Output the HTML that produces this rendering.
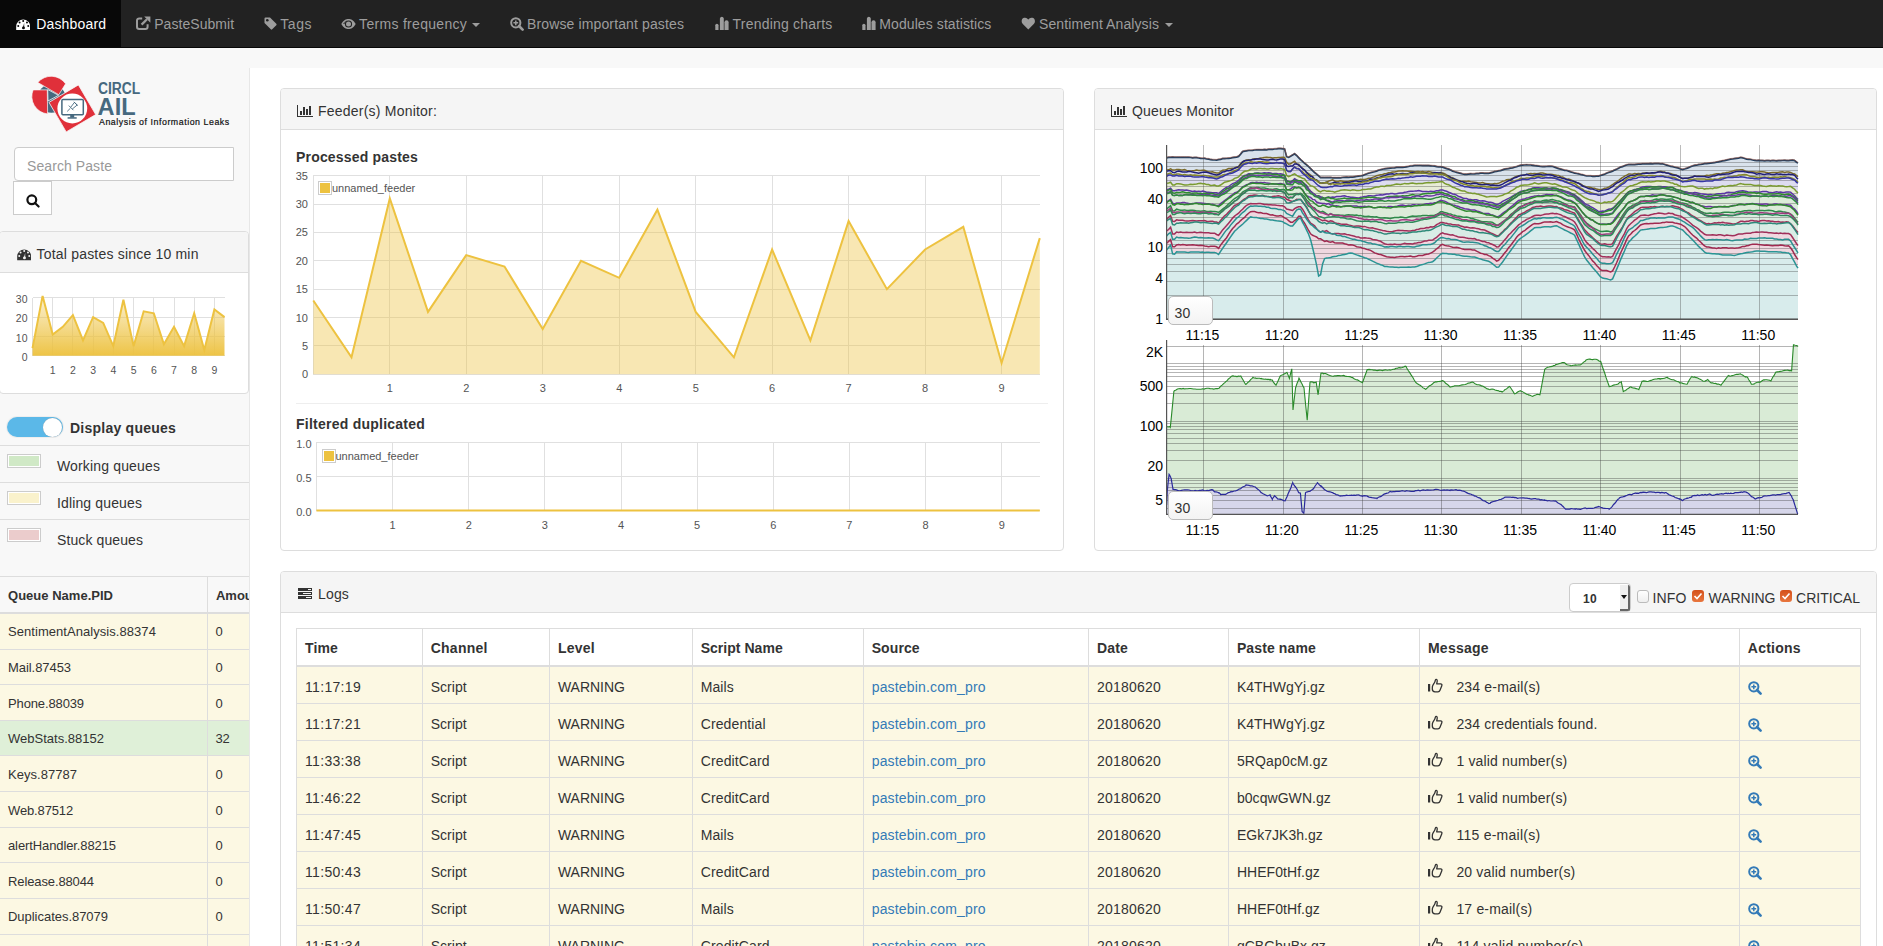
<!DOCTYPE html><html><head><meta charset="utf-8"><title>AIL Dashboard</title>
<style>
html,body{margin:0;padding:0;overflow:hidden;}
body{width:1883px;height:946px;overflow:hidden;position:relative;background:#f8f8f8;font-family:"Liberation Sans", sans-serif;font-size:14px;color:#333;}
.abs{position:absolute;}
svg text{font-family:"Liberation Sans", sans-serif;}
</style></head><body>
<div class="abs" style="left:0;top:0;width:1883px;height:47px;background:#222;border-bottom:1px solid #080808"></div>
<div class="abs" style="left:0;top:0;width:121px;height:47px;background:#080808"></div>
<svg style="position:absolute;left:15.7px;top:18.6px" width="14.4" height="11.7" viewBox="0 0 16 13">
<path d="M0.2,12.5 L0.2,8.3 A7.8,7.8 0 0 1 15.8,8.3 L15.8,12.5 Z" fill="#fff"/>
<circle cx="2.5" cy="7.9" r="1.1" fill="#080808"/><circle cx="4" cy="4" r="1.1" fill="#080808"/>
<circle cx="8" cy="2.3" r="1.1" fill="#080808"/><circle cx="12.2" cy="4" r="1.1" fill="#080808"/><circle cx="13.6" cy="7.9" r="1.1" fill="#080808"/>
<path d="M7.6,10 L9.1,4.2 L9.1,10 Z" fill="#080808"/><circle cx="8.3" cy="9.9" r="1.6" fill="#080808"/>
</svg>
<div style="position:absolute;left:36.2px;top:14.4px;font-size:14px;line-height:20px;color:#fff;font-weight:normal;white-space:nowrap;letter-spacing:0.172px;">Dashboard</div>
<svg style="position:absolute;left:135.6px;top:16.2px" width="15" height="14" viewBox="0 0 15 14">
<path d="M11.6,8.2 V10.8 A2.2,2.2 0 0 1 9.4,13 H3.2 A2.2,2.2 0 0 1 1,10.8 V4.6 A2.2,2.2 0 0 1 3.2,2.4 H6.2" fill="none" stroke="#9d9d9d" stroke-width="2"/>
<path d="M5.6,8.6 L11,3.2" stroke="#9d9d9d" stroke-width="2.3"/>
<path d="M8.2,0.6 H14.4 V6.8 Z" fill="#9d9d9d"/>
</svg>
<div style="position:absolute;left:154.2px;top:14.4px;font-size:14px;line-height:20px;color:#9d9d9d;font-weight:normal;white-space:nowrap;letter-spacing:0.058px;">PasteSubmit</div>
<svg style="position:absolute;left:263.5px;top:17px" width="13" height="13" viewBox="0 0 13 13">
<path d="M0.5,1.5 A1,1 0 0 1 1.5,0.5 H6 L12.3,6.8 A1,1 0 0 1 12.3,8.2 L8.2,12.3 A1,1 0 0 1 6.8,12.3 L0.5,6 Z" fill="#9d9d9d"/>
<circle cx="3.3" cy="3.3" r="1.3" fill="#222"/>
</svg>
<div style="position:absolute;left:280.2px;top:14.4px;font-size:14px;line-height:20px;color:#9d9d9d;font-weight:normal;white-space:nowrap;letter-spacing:0.605px;">Tags</div>
<svg style="position:absolute;left:340.5px;top:19px" width="15" height="10" viewBox="0 0 15 10">
<path d="M0.3,5 C2.5,1 5,0 7.5,0 C10,0 12.5,1 14.7,5 C12.5,9 10,10 7.5,10 C5,10 2.5,9 0.3,5 Z" fill="#9d9d9d"/>
<circle cx="7.5" cy="5" r="3.6" fill="#222"/><circle cx="7.5" cy="5" r="2.5" fill="#9d9d9d"/>
<path d="M1.8,5 C3.5,2.5 5,1.6 6,1.4 C4.5,2.5 4.3,4 4.5,5 Z" fill="#222" opacity="0.6"/>
</svg>
<div style="position:absolute;left:359.1px;top:14.4px;font-size:14px;line-height:20px;color:#9d9d9d;font-weight:normal;white-space:nowrap;letter-spacing:0.303px;">Terms frequency</div>
<div style="position:absolute;left:471.8px;top:22.9px;width:0;height:0;border-left:4px solid transparent;border-right:4px solid transparent;border-top:4px solid #9d9d9d"></div>
<svg style="position:absolute;left:509.5px;top:16.5px" width="14" height="14" viewBox="0 0 14 14">
<circle cx="5.8" cy="5.8" r="4.6" fill="none" stroke="#9d9d9d" stroke-width="2"/>
<path d="M9,9 L12.6,12.6" stroke="#9d9d9d" stroke-width="2.6" stroke-linecap="round"/>
<path d="M3.4,5.8 H8.2 M5.8,3.4 V8.2" stroke="#9d9d9d" stroke-width="1.5"/>
</svg>
<div style="position:absolute;left:527.0px;top:14.4px;font-size:14px;line-height:20px;color:#9d9d9d;font-weight:normal;white-space:nowrap;letter-spacing:0.130px;">Browse important pastes</div>
<svg style="position:absolute;left:714.8px;top:16px" width="14" height="15" viewBox="0 0 14 15">
<path d="M0.3,14.1 V9.3 A1.6,1.6 0 0 1 3.5,9.3 V14.1 Z" fill="#9d9d9d"/>
<path d="M4.9,14.1 V2.4 A2,2 0 0 1 8.8,2.4 V14.1 Z" fill="#9d9d9d"/>
<path d="M9.5,14.1 V6.2 A2,2 0 0 1 13.6,6.2 V14.1 Z" fill="#9d9d9d"/>
</svg>
<div style="position:absolute;left:732.5px;top:14.4px;font-size:14px;line-height:20px;color:#9d9d9d;font-weight:normal;white-space:nowrap;letter-spacing:0.220px;">Trending charts</div>
<svg style="position:absolute;left:861.6px;top:16px" width="14" height="15" viewBox="0 0 14 15">
<path d="M0.3,14.1 V9.3 A1.6,1.6 0 0 1 3.5,9.3 V14.1 Z" fill="#9d9d9d"/>
<path d="M4.9,14.1 V2.4 A2,2 0 0 1 8.8,2.4 V14.1 Z" fill="#9d9d9d"/>
<path d="M9.5,14.1 V6.2 A2,2 0 0 1 13.6,6.2 V14.1 Z" fill="#9d9d9d"/>
</svg>
<div style="position:absolute;left:879.3px;top:14.4px;font-size:14px;line-height:20px;color:#9d9d9d;font-weight:normal;white-space:nowrap;letter-spacing:0.086px;">Modules statistics</div>
<svg style="position:absolute;left:1020.8px;top:17.4px" width="14.6" height="13" viewBox="0 0 15 14">
<path d="M7.5,13.5 L1.6,7.6 C-0.3,5.7 0,2.3 2.2,1.2 C4.2,0.1 6.3,0.9 7.5,2.8 C8.7,0.9 10.8,0.1 12.8,1.2 C15,2.3 15.3,5.7 13.4,7.6 Z" fill="#9d9d9d"/>
</svg>
<div style="position:absolute;left:1039.0px;top:14.4px;font-size:14px;line-height:20px;color:#9d9d9d;font-weight:normal;white-space:nowrap;letter-spacing:0.096px;">Sentiment Analysis</div>
<div style="position:absolute;left:1164.5px;top:22.9px;width:0;height:0;border-left:4px solid transparent;border-right:4px solid transparent;border-top:4px solid #9d9d9d"></div>
<div class="abs" style="left:249px;top:68px;width:1px;height:878px;background:#e7e7e7"></div>
<div class="abs" style="left:250px;top:68px;width:1633px;height:878px;background:#fff"></div>
<svg class="abs" style="left:28px;top:72px" width="206" height="64" viewBox="28 72 206 64">
<circle cx="51.5" cy="98.5" r="14.3" fill="#46697f"/>
<path d="M37.8,82.5 A17.5,17.5 0 0 1 65.6,83.8 L58.8,94.7 Z" fill="#e0303a" stroke="#f8f8f8" stroke-width="0.7"/>
<path d="M47.3,89.9 L47.6,113.9 A17.5,17.5 0 0 1 33.1,89.9 Z" fill="#e0303a" stroke="#f8f8f8" stroke-width="0.7"/>
<path d="M47.7,89.5 L58.5,95.3 L48,101 Z" fill="none" stroke="#f8f8f8" stroke-width="0.8"/>
<path d="M49,102.4 L78.4,84.9 L95.7,114.6 L66.2,131.9 Z" fill="#e0303a" stroke="#f8f8f8" stroke-width="0.8"/>
<circle cx="72.3" cy="108.5" r="14.9" fill="#fff"/>
<rect x="61.9" y="99.6" width="21.4" height="15.2" rx="1" fill="none" stroke="#46697f" stroke-width="1.5"/>
<rect x="70.2" y="115" width="4" height="2.6" fill="#46697f"/><rect x="67.6" y="117.2" width="9.1" height="1.5" fill="#46697f"/>
<path d="M67.2,111.4 L70.3,108.3 M68.8,105.6 L73.4,110.2 M70.6,107.4 L74.5,102.3 L77.2,105 L72.3,109 M73.8,101.8 L77.7,105.7" fill="none" stroke="#46697f" stroke-width="0.9"/>
<text x="98" y="93.7" font-size="16" font-weight="bold" fill="#46697f" textLength="42.3" lengthAdjust="spacingAndGlyphs">CIRCL</text>
<text x="97.6" y="114.8" font-size="24.5" font-weight="bold" fill="#46697f" textLength="38" lengthAdjust="spacingAndGlyphs">AIL</text>
<text x="99" y="124.7" font-size="8.8" fill="#111" stroke="#111" stroke-width="0.2" textLength="130.2" lengthAdjust="spacing">Analysis of Information Leaks</text>
</svg>
<div class="abs" style="left:14px;top:147px;width:218px;height:32px;background:#fff;border:1px solid #ccc;border-radius:4px 0 0 4px;"></div>
<div style="position:absolute;left:27.0px;top:155.9px;font-size:14px;line-height:20px;color:#999;font-weight:normal;white-space:nowrap;letter-spacing:0.081px;">Search Paste</div>
<div class="abs" style="left:13px;top:181px;width:37px;height:32px;background:#fff;border:1px solid #ccc;"></div>
<svg style="position:absolute;left:25.5px;top:193.9px" width="14" height="14" viewBox="0 0 14 14">
<circle cx="5.8" cy="5.8" r="4.4" fill="none" stroke="#111" stroke-width="2.2"/>
<path d="M9,9 L12.6,12.6" stroke="#111" stroke-width="2.1" stroke-linecap="round"/>
</svg>
<div class="abs" style="left:-1px;top:231px;width:248px;height:161px;background:#fff;border:1px solid #ddd;border-radius:4px;"></div>
<div class="abs" style="left:0px;top:232px;width:248px;height:40px;background:#f5f5f5;border-bottom:1px solid #ddd;border-radius:3px 3px 0 0"></div>
<svg style="position:absolute;left:16.9px;top:248.9px" width="14.4" height="11.7" viewBox="0 0 16 13">
<path d="M0.2,12.5 L0.2,8.3 A7.8,7.8 0 0 1 15.8,8.3 L15.8,12.5 Z" fill="#333"/>
<circle cx="2.5" cy="7.9" r="1.1" fill="#f5f5f5"/><circle cx="4" cy="4" r="1.1" fill="#f5f5f5"/>
<circle cx="8" cy="2.3" r="1.1" fill="#f5f5f5"/><circle cx="12.2" cy="4" r="1.1" fill="#f5f5f5"/><circle cx="13.6" cy="7.9" r="1.1" fill="#f5f5f5"/>
<path d="M7.6,10 L9.1,4.2 L9.1,10 Z" fill="#f5f5f5"/><circle cx="8.3" cy="9.9" r="1.6" fill="#f5f5f5"/>
</svg>
<div style="position:absolute;left:36.6px;top:243.6px;font-size:14px;line-height:20px;color:#333;font-weight:normal;white-space:nowrap;letter-spacing:0.194px;">Total pastes since 10 min</div>
<svg style="position:absolute;left:0px;top:285px" width="248" height="100" viewBox="0 285 248 100"><g stroke="#e0e0e0" stroke-width="1" shape-rendering="crispEdges"><line x1="32.5" y1="355.8" x2="224.5" y2="355.8"/><line x1="32.5" y1="336.5" x2="224.5" y2="336.5"/><line x1="32.5" y1="317.1" x2="224.5" y2="317.1"/><line x1="32.5" y1="297.8" x2="224.5" y2="297.8"/><line x1="32.5" y1="297.8" x2="32.5" y2="355.8"/><line x1="52.7" y1="297.8" x2="52.7" y2="355.8"/><line x1="72.9" y1="297.8" x2="72.9" y2="355.8"/><line x1="93.1" y1="297.8" x2="93.1" y2="355.8"/><line x1="113.3" y1="297.8" x2="113.3" y2="355.8"/><line x1="133.6" y1="297.8" x2="133.6" y2="355.8"/><line x1="153.8" y1="297.8" x2="153.8" y2="355.8"/><line x1="174.0" y1="297.8" x2="174.0" y2="355.8"/><line x1="194.2" y1="297.8" x2="194.2" y2="355.8"/><line x1="214.4" y1="297.8" x2="214.4" y2="355.8"/></g><defs><linearGradient id="scg" x1="0" y1="0" x2="0" y2="1"><stop offset="0" stop-color="#edc240" stop-opacity="0.22"/><stop offset="1" stop-color="#edc240" stop-opacity="0.97"/></linearGradient></defs><polygon points="32.5,355.8 32.5,348.1 42.6,295.9 52.7,334.5 62.8,326.8 72.9,315.2 83.0,340.3 93.1,317.1 103.2,322.9 113.3,346.1 123.4,299.7 133.6,346.1 143.7,311.3 153.8,313.3 163.9,344.2 174.0,326.8 184.1,346.1 194.2,313.3 204.3,350.0 214.4,309.4 224.5,317.1 224.5,355.8" fill="url(#scg)"/><polyline points="32.5,348.1 42.6,295.9 52.7,334.5 62.8,326.8 72.9,315.2 83.0,340.3 93.1,317.1 103.2,322.9 113.3,346.1 123.4,299.7 133.6,346.1 143.7,311.3 153.8,313.3 163.9,344.2 174.0,326.8 184.1,346.1 194.2,313.3 204.3,350.0 214.4,309.4 224.5,317.1" fill="none" stroke="#edc240" stroke-width="2" stroke-linejoin="miter"/><g fill="#545454" font-size="10.5" font-family="Liberation Sans, sans-serif"><text x="27.5" y="360.8" text-anchor="end">0</text><text x="27.5" y="341.5" text-anchor="end">10</text><text x="27.5" y="322.1" text-anchor="end">20</text><text x="27.5" y="302.8" text-anchor="end">30</text><text x="52.7" y="373.6" text-anchor="middle">1</text><text x="72.9" y="373.6" text-anchor="middle">2</text><text x="93.1" y="373.6" text-anchor="middle">3</text><text x="113.3" y="373.6" text-anchor="middle">4</text><text x="133.6" y="373.6" text-anchor="middle">5</text><text x="153.8" y="373.6" text-anchor="middle">6</text><text x="174.0" y="373.6" text-anchor="middle">7</text><text x="194.2" y="373.6" text-anchor="middle">8</text><text x="214.4" y="373.6" text-anchor="middle">9</text></g></svg>
<div class="abs" style="left:7px;top:417px;width:56px;height:20px;border-radius:11px;background:#5bb8e8;box-shadow:0 0 0 1px #eee"></div>
<div class="abs" style="left:43px;top:417.5px;width:19px;height:19px;border-radius:50%;background:#fff;box-shadow:0 0 1px #999"></div>
<div style="position:absolute;left:70.0px;top:418.2px;font-size:14px;line-height:20px;color:#333;font-weight:bold;white-space:nowrap;letter-spacing:0.239px;">Display queues</div>
<div class="abs" style="left:0;top:445px;width:249px;height:1px;background:#ddd"></div>
<div class="abs" style="left:0;top:482px;width:249px;height:1px;background:#ddd"></div>
<div class="abs" style="left:0;top:519px;width:249px;height:1px;background:#ddd"></div>
<div class="abs" style="left:7px;top:454px;width:32px;height:12px;border:1px solid #ccc;background:#fff"><div style="margin:1px;width:30px;height:10px;background:#d0e9c6"></div></div>
<div style="position:absolute;left:57.0px;top:455.9px;font-size:14px;line-height:20px;color:#333;font-weight:normal;white-space:nowrap;letter-spacing:0.152px;">Working queues</div>
<div class="abs" style="left:7px;top:491px;width:32px;height:12px;border:1px solid #ccc;background:#fff"><div style="margin:1px;width:30px;height:10px;background:#faf2cc"></div></div>
<div style="position:absolute;left:57.0px;top:492.9px;font-size:14px;line-height:20px;color:#333;font-weight:normal;white-space:nowrap;letter-spacing:0.135px;">Idling queues</div>
<div class="abs" style="left:7px;top:528px;width:32px;height:12px;border:1px solid #ccc;background:#fff"><div style="margin:1px;width:30px;height:10px;background:#ebcccc"></div></div>
<div style="position:absolute;left:57.0px;top:529.9px;font-size:14px;line-height:20px;color:#333;font-weight:normal;white-space:nowrap;letter-spacing:0.099px;">Stuck queues</div>
<div class="abs" style="left:0;top:576px;width:249px;height:1px;background:#ddd"></div>
<div class="abs" style="left:0;top:612px;width:249px;height:2px;background:#ddd"></div>
<div style="position:absolute;left:8.0px;top:585.7px;font-size:13px;line-height:20px;color:#333;font-weight:bold;white-space:nowrap;letter-spacing:0.017px;">Queue Name.PID</div>
<div class="abs" style="left:208px;top:580px;width:41px;height:30px;overflow:hidden"><div style="position:absolute;left:8.0px;top:5.7px;font-size:13px;line-height:20px;color:#333;font-weight:bold;white-space:nowrap;letter-spacing:-0.016px;">Amount</div></div>
<div class="abs" style="left:207px;top:577px;width:1px;height:369px;background:#ddd"></div>
<div class="abs" style="left:0;top:613.9px;width:249px;height:35.6px;background:#fcf8e3"></div>
<div class="abs" style="left:0;top:648.5px;width:249px;height:1px;background:#ddd"></div>
<div style="position:absolute;left:8.0px;top:622.4px;font-size:13px;line-height:20px;color:#333;font-weight:normal;white-space:nowrap;letter-spacing:0.054px;">SentimentAnalysis.88374</div>
<div style="position:absolute;left:215.5px;top:622.4px;font-size:13px;line-height:20px;color:#333;font-weight:normal;white-space:nowrap;letter-spacing:-0.234px;">0</div>
<div class="abs" style="left:0;top:649.5px;width:249px;height:35.6px;background:#fcf8e3"></div>
<div class="abs" style="left:0;top:684.2px;width:249px;height:1px;background:#ddd"></div>
<div style="position:absolute;left:8.0px;top:658.0px;font-size:13px;line-height:20px;color:#333;font-weight:normal;white-space:nowrap;letter-spacing:-0.062px;">Mail.87453</div>
<div style="position:absolute;left:215.5px;top:658.0px;font-size:13px;line-height:20px;color:#333;font-weight:normal;white-space:nowrap;letter-spacing:-0.234px;">0</div>
<div class="abs" style="left:0;top:685.2px;width:249px;height:35.6px;background:#fcf8e3"></div>
<div class="abs" style="left:0;top:719.8px;width:249px;height:1px;background:#ddd"></div>
<div style="position:absolute;left:8.0px;top:693.7px;font-size:13px;line-height:20px;color:#333;font-weight:normal;white-space:nowrap;letter-spacing:-0.126px;">Phone.88039</div>
<div style="position:absolute;left:215.5px;top:693.7px;font-size:13px;line-height:20px;color:#333;font-weight:normal;white-space:nowrap;letter-spacing:-0.234px;">0</div>
<div class="abs" style="left:0;top:720.8px;width:249px;height:35.6px;background:#dff0d8"></div>
<div class="abs" style="left:0;top:755.4px;width:249px;height:1px;background:#ddd"></div>
<div style="position:absolute;left:8.0px;top:729.3px;font-size:13px;line-height:20px;color:#333;font-weight:normal;white-space:nowrap;letter-spacing:0.007px;">WebStats.88152</div>
<div style="position:absolute;left:215.5px;top:729.3px;font-size:13px;line-height:20px;color:#333;font-weight:normal;white-space:nowrap;letter-spacing:-0.234px;">32</div>
<div class="abs" style="left:0;top:756.4px;width:249px;height:35.6px;background:#fcf8e3"></div>
<div class="abs" style="left:0;top:791.0px;width:249px;height:1px;background:#ddd"></div>
<div style="position:absolute;left:8.0px;top:764.9px;font-size:13px;line-height:20px;color:#333;font-weight:normal;white-space:nowrap;letter-spacing:0.031px;">Keys.87787</div>
<div style="position:absolute;left:215.5px;top:764.9px;font-size:13px;line-height:20px;color:#333;font-weight:normal;white-space:nowrap;letter-spacing:-0.234px;">0</div>
<div class="abs" style="left:0;top:792.0px;width:249px;height:35.6px;background:#fcf8e3"></div>
<div class="abs" style="left:0;top:826.7px;width:249px;height:1px;background:#ddd"></div>
<div style="position:absolute;left:8.0px;top:800.6px;font-size:13px;line-height:20px;color:#333;font-weight:normal;white-space:nowrap;letter-spacing:-0.142px;">Web.87512</div>
<div style="position:absolute;left:215.5px;top:800.6px;font-size:13px;line-height:20px;color:#333;font-weight:normal;white-space:nowrap;letter-spacing:-0.234px;">0</div>
<div class="abs" style="left:0;top:827.7px;width:249px;height:35.6px;background:#fcf8e3"></div>
<div class="abs" style="left:0;top:862.3px;width:249px;height:1px;background:#ddd"></div>
<div style="position:absolute;left:8.0px;top:836.2px;font-size:13px;line-height:20px;color:#333;font-weight:normal;white-space:nowrap;letter-spacing:-0.106px;">alertHandler.88215</div>
<div style="position:absolute;left:215.5px;top:836.2px;font-size:13px;line-height:20px;color:#333;font-weight:normal;white-space:nowrap;letter-spacing:-0.234px;">0</div>
<div class="abs" style="left:0;top:863.3px;width:249px;height:35.6px;background:#fcf8e3"></div>
<div class="abs" style="left:0;top:897.9px;width:249px;height:1px;background:#ddd"></div>
<div style="position:absolute;left:8.0px;top:871.8px;font-size:13px;line-height:20px;color:#333;font-weight:normal;white-space:nowrap;letter-spacing:-0.115px;">Release.88044</div>
<div style="position:absolute;left:215.5px;top:871.8px;font-size:13px;line-height:20px;color:#333;font-weight:normal;white-space:nowrap;letter-spacing:-0.234px;">0</div>
<div class="abs" style="left:0;top:898.9px;width:249px;height:35.6px;background:#fcf8e3"></div>
<div class="abs" style="left:0;top:933.6px;width:249px;height:1px;background:#ddd"></div>
<div style="position:absolute;left:8.0px;top:907.4px;font-size:13px;line-height:20px;color:#333;font-weight:normal;white-space:nowrap;letter-spacing:-0.031px;">Duplicates.87079</div>
<div style="position:absolute;left:215.5px;top:907.4px;font-size:13px;line-height:20px;color:#333;font-weight:normal;white-space:nowrap;letter-spacing:-0.234px;">0</div>
<div class="abs" style="left:0;top:934.6px;width:249px;height:35.6px;background:#fcf8e3"></div>
<div class="abs" style="left:0;top:969.2px;width:249px;height:1px;background:#ddd"></div>
<div class="abs" style="left:207px;top:614px;width:1px;height:332px;background:#ddd"></div>
<div class="abs" style="left:249px;top:568px;width:1px;height:378px;background:#e7e7e7"></div>
<div class="abs" style="left:280px;top:88px;width:782px;height:461px;background:#fff;border:1px solid #ddd;border-radius:4px;"></div>
<div class="abs" style="left:281px;top:89px;width:782px;height:40px;background:#f5f5f5;border-bottom:1px solid #ddd;border-radius:3px 3px 0 0"></div>
<svg style="position:absolute;left:297px;top:105px" width="17" height="12" viewBox="0 0 17 12" shape-rendering="crispEdges">
<rect x="0" y="0" width="1" height="12" fill="#333"/><rect x="0" y="11" width="16" height="1" fill="#333"/>
<rect x="3" y="6" width="2" height="4" fill="#333"/><rect x="6" y="2" width="2" height="8" fill="#333"/>
<rect x="9" y="4" width="2" height="6" fill="#333"/><rect x="12" y="1" width="2" height="9" fill="#333"/>
</svg>
<div style="position:absolute;left:318.0px;top:101.4px;font-size:14px;line-height:20px;color:#333;font-weight:normal;white-space:nowrap;letter-spacing:0.218px;">Feeder(s) Monitor:</div>
<div style="position:absolute;left:296.0px;top:146.6px;font-size:14px;line-height:20px;color:#333;font-weight:bold;white-space:nowrap;letter-spacing:0.187px;">Processed pastes</div>
<svg style="position:absolute;left:281px;top:165px" width="780" height="240" viewBox="281 165 780 240"><g stroke="#e0e0e0" stroke-width="1" shape-rendering="crispEdges"><line x1="313.3" y1="374.3" x2="1039.8" y2="374.3"/><line x1="313.3" y1="345.9" x2="1039.8" y2="345.9"/><line x1="313.3" y1="317.6" x2="1039.8" y2="317.6"/><line x1="313.3" y1="289.2" x2="1039.8" y2="289.2"/><line x1="313.3" y1="260.8" x2="1039.8" y2="260.8"/><line x1="313.3" y1="232.4" x2="1039.8" y2="232.4"/><line x1="313.3" y1="204.1" x2="1039.8" y2="204.1"/><line x1="313.3" y1="175.7" x2="1039.8" y2="175.7"/><line x1="313.3" y1="175.7" x2="313.3" y2="374.3"/><line x1="389.8" y1="175.7" x2="389.8" y2="374.3"/><line x1="466.2" y1="175.7" x2="466.2" y2="374.3"/><line x1="542.7" y1="175.7" x2="542.7" y2="374.3"/><line x1="619.2" y1="175.7" x2="619.2" y2="374.3"/><line x1="695.7" y1="175.7" x2="695.7" y2="374.3"/><line x1="772.1" y1="175.7" x2="772.1" y2="374.3"/><line x1="848.6" y1="175.7" x2="848.6" y2="374.3"/><line x1="925.1" y1="175.7" x2="925.1" y2="374.3"/><line x1="1001.6" y1="175.7" x2="1001.6" y2="374.3"/></g><polygon points="313.3,374.3 313.3,300.5 351.5,357.3 389.8,198.4 428.0,311.9 466.2,255.1 504.5,266.5 542.7,328.9 581.0,260.8 619.2,277.8 657.4,209.7 695.7,311.9 733.9,357.3 772.1,249.5 810.4,340.3 848.6,221.1 886.9,289.2 925.1,249.5 963.3,226.8 1001.6,363.0 1039.8,238.1 1039.8,374.3" fill="#edc240" fill-opacity="0.4"/><polyline points="313.3,300.5 351.5,357.3 389.8,198.4 428.0,311.9 466.2,255.1 504.5,266.5 542.7,328.9 581.0,260.8 619.2,277.8 657.4,209.7 695.7,311.9 733.9,357.3 772.1,249.5 810.4,340.3 848.6,221.1 886.9,289.2 925.1,249.5 963.3,226.8 1001.6,363.0 1039.8,238.1" fill="none" stroke="#edc240" stroke-width="2" stroke-linejoin="miter"/><g fill="#545454" font-size="11" font-family="Liberation Sans, sans-serif"><text x="308.0" y="378.3" text-anchor="end">0</text><text x="308.0" y="349.9" text-anchor="end">5</text><text x="308.0" y="321.6" text-anchor="end">10</text><text x="308.0" y="293.2" text-anchor="end">15</text><text x="308.0" y="264.8" text-anchor="end">20</text><text x="308.0" y="236.4" text-anchor="end">25</text><text x="308.0" y="208.1" text-anchor="end">30</text><text x="308.0" y="179.7" text-anchor="end">35</text><text x="389.8" y="392.0" text-anchor="middle">1</text><text x="466.2" y="392.0" text-anchor="middle">2</text><text x="542.7" y="392.0" text-anchor="middle">3</text><text x="619.2" y="392.0" text-anchor="middle">4</text><text x="695.7" y="392.0" text-anchor="middle">5</text><text x="772.1" y="392.0" text-anchor="middle">6</text><text x="848.6" y="392.0" text-anchor="middle">7</text><text x="925.1" y="392.0" text-anchor="middle">8</text><text x="1001.6" y="392.0" text-anchor="middle">9</text></g></svg>
<div style="position:absolute;left:318px;top:181px;width:12px;height:12px;border:1px solid #ccc;"><div style="margin:1px;width:10px;height:10px;background:#edc240"></div></div>
<div style="position:absolute;left:332px;top:180.3px;font-size:11px;line-height:16px;color:#545454">unnamed_feeder</div>
<div class="abs" style="left:296px;top:403px;width:752px;height:1px;background:#eee"></div>
<div style="position:absolute;left:296.0px;top:413.8px;font-size:14px;line-height:20px;color:#333;font-weight:bold;white-space:nowrap;letter-spacing:0.242px;">Filtered duplicated</div>
<svg style="position:absolute;left:281px;top:432px" width="780" height="110" viewBox="281 432 780 110"><g stroke="#e0e0e0" stroke-width="1" shape-rendering="crispEdges"><line x1="316.4" y1="510.4" x2="1039.8" y2="510.4"/><line x1="316.4" y1="476.4" x2="1039.8" y2="476.4"/><line x1="316.4" y1="442.3" x2="1039.8" y2="442.3"/><line x1="316.4" y1="442.3" x2="316.4" y2="510.4"/><line x1="392.5" y1="442.3" x2="392.5" y2="510.4"/><line x1="468.7" y1="442.3" x2="468.7" y2="510.4"/><line x1="544.8" y1="442.3" x2="544.8" y2="510.4"/><line x1="621.0" y1="442.3" x2="621.0" y2="510.4"/><line x1="697.1" y1="442.3" x2="697.1" y2="510.4"/><line x1="773.3" y1="442.3" x2="773.3" y2="510.4"/><line x1="849.4" y1="442.3" x2="849.4" y2="510.4"/><line x1="925.6" y1="442.3" x2="925.6" y2="510.4"/><line x1="1001.7" y1="442.3" x2="1001.7" y2="510.4"/></g><polygon points="316.4,510.4 316.4,510.4 354.5,510.4 392.5,510.4 430.6,510.4 468.7,510.4 506.8,510.4 544.8,510.4 582.9,510.4 621.0,510.4 659.1,510.4 697.1,510.4 735.2,510.4 773.3,510.4 811.4,510.4 849.4,510.4 887.5,510.4 925.6,510.4 963.7,510.4 1001.7,510.4 1039.8,510.4 1039.8,510.4" fill="none"/><polyline points="316.4,510.4 354.5,510.4 392.5,510.4 430.6,510.4 468.7,510.4 506.8,510.4 544.8,510.4 582.9,510.4 621.0,510.4 659.1,510.4 697.1,510.4 735.2,510.4 773.3,510.4 811.4,510.4 849.4,510.4 887.5,510.4 925.6,510.4 963.7,510.4 1001.7,510.4 1039.8,510.4" fill="none" stroke="#edc240" stroke-width="2" stroke-linejoin="miter"/><g fill="#545454" font-size="11" font-family="Liberation Sans, sans-serif"><text x="311.5" y="515.6" text-anchor="end">0.0</text><text x="311.5" y="481.6" text-anchor="end">0.5</text><text x="311.5" y="447.5" text-anchor="end">1.0</text><text x="392.5" y="529.0" text-anchor="middle">1</text><text x="468.7" y="529.0" text-anchor="middle">2</text><text x="544.8" y="529.0" text-anchor="middle">3</text><text x="621.0" y="529.0" text-anchor="middle">4</text><text x="697.1" y="529.0" text-anchor="middle">5</text><text x="773.3" y="529.0" text-anchor="middle">6</text><text x="849.4" y="529.0" text-anchor="middle">7</text><text x="925.6" y="529.0" text-anchor="middle">8</text><text x="1001.7" y="529.0" text-anchor="middle">9</text></g></svg>
<div style="position:absolute;left:321.5px;top:448.5px;width:12px;height:12px;border:1px solid #ccc;"><div style="margin:1px;width:10px;height:10px;background:#edc240"></div></div>
<div style="position:absolute;left:335.5px;top:447.8px;font-size:11px;line-height:16px;color:#545454">unnamed_feeder</div>
<div class="abs" style="left:1094px;top:88px;width:781px;height:461px;background:#fff;border:1px solid #ddd;border-radius:4px;"></div>
<div class="abs" style="left:1095px;top:89px;width:781px;height:40px;background:#f5f5f5;border-bottom:1px solid #ddd;border-radius:3px 3px 0 0"></div>
<svg style="position:absolute;left:1111px;top:105px" width="17" height="12" viewBox="0 0 17 12" shape-rendering="crispEdges">
<rect x="0" y="0" width="1" height="12" fill="#333"/><rect x="0" y="11" width="16" height="1" fill="#333"/>
<rect x="3" y="6" width="2" height="4" fill="#333"/><rect x="6" y="2" width="2" height="8" fill="#333"/>
<rect x="9" y="4" width="2" height="6" fill="#333"/><rect x="12" y="1" width="2" height="9" fill="#333"/>
</svg>
<div style="position:absolute;left:1132.0px;top:101.4px;font-size:14px;line-height:20px;color:#333;font-weight:normal;white-space:nowrap;letter-spacing:0.174px;">Queues Monitor</div>
<svg style="position:absolute;left:1100px;top:135px" width="770" height="410" viewBox="1100 135 770 410"><path d="M1166.6,157.9l2-.5 2,0 2-.2 2,.2 2,0 2-.1 2,.1 2-.1 2,.1 2,0 2-.1 2,.2 2,.3 2-.1 2,0 2,.3 2,.3 2,.2 2-.1 2,.6 2,.1 2,.6 2,.2 2,.1 2,.1 2-.5 2-.3 2-.6 2-.1 2-.1 2-.2 2-.2 2-.4 2-.4 2-.2 2-.7 2-2.3 2-2.5 2-.5 2-.3 2-.3 2,0 2-.1 2-.4 2-.1 2-.1 2,.1 2,0 2-.3 2,.2 2-.4 2-.1 2,0 2-.3 2-.1 2-.3 2,0 2,.2 2,.2 2,7.7 2,.7 2-1.1 2-1.2 2-1.2 2,1.6 2,2.1 2,2.1 2,1.7 2,1.9 2,1.5 2,1.9 2,1.9 2,2 2,1.9 2,1.6 2,1.7 2,1.9 2-.1 2,.1 2-.1 2,0 2-.1 2,.4 2-.1 2,.1 2-.1 2,.1 2-.4 2-.2 2-.1 2,.1 2-.1 2,0 2-.4 2-.3 2-.3 2-.2 2-.4 2-.8 2-.8 2-.7 2-.6 2-.5 2-.5 2-.6 2-.8 2-.5 2-.5 2-.5 2-.2 2-.2 2-.2 2-.2 2-.1 2-.5 2,0 2,0 2-.1 2-.1 2-.4 2-.3 2-.5 2-.1 2-.4 2,0 2,0 2,0 2,.2 2,0 2,0 2,0 2,.1 2,.2 2,.1 2,.5 2,.3 2,0 2,.3 2,.7 2,.7 2,.5 2,1 2,1 2,.7 2,.6 2,.5 2,.5 2,.6 2,.3 2,.1 2-.3 2-.3 2,.2 2-.1 2-.3 2,0 2-.4 2,0 2,.2 2,0 2,0 2-.5 2-.5 2-.7 2-.3 2-.5 2-.3 2-.7 2-.7 2-.3 2-.3 2-.4 2-.4 2-.5 2-.5 2-.8 2-.6 2-.2 2-.2 2-.1 2,.1 2,0 2,.3 2,.4 2,.1 2,.3 2,.4 2,.2 2-.1 2-.1 2-.1 2,0 2,.1 2,.6 2,.8 2,.7 2,.5 2,.6 2,.6 2,.2 2,.6 2,.8 2,.6 2,.6 2,.4 2,.3 2,.7 2,.3 2,.7 2,.5 2,0 2,0 2,.3 2,.1 2-.2 2-.1 2-.6 2-.6 2-.6 2-1.1 2-.7 2-.6 2-.8 2-1 2-.8 2-1.1 2-1.1 2-.5 2-.8 2-.8 2-.3 2-.1 2,.1 2,0 2-.3 2-.2 2-.1 2-.2 2,0 2-.1 2,0 2-.2 2,.2 2-.1 2,0 2,0 2,.2 2-.1 2,.7 2,.6 2,.6 2,.6 2,.3 2,.6 2,.5 2,.4 2,.9 2,.5 2-.5 2-.6 2-.8 2-.9 2-.7 2-.6 2-.2 2-.5 2-.2 2-.4 2-.4 2-.1 2-.3 2-.2 2-.2 2-.2 2-.5 2-.4 2-.4 2-.5 2-.3 2-.5 2-.4 2-.5 2-.2 2-.3 2-.3 2-.3 2-.6 2,.3 2,.7 2,.6 2,.2 2,.2 2,.5 2,.3 2,.4 2-.3 2,.2 2,.1 2,.2 2-.2 2,0 2,.1 2-.3 2,.2 2,.1 2-.2 2,.1 2-.2 2-.1 2,.2 2,.1 2-.4 2-.1 2,.4 2,1.6 1.4,.9 0,13.6-1.4-1.1-2-1.7-2-.5-2-.9-2-.4-2-.1-2,.4-2-.7-2,.2-2,.4-2,.2-2,.1-2,0-2,.1-2,.2-2-.3-2-.6-2-.3-2,.1-2,.1-2,.3-2-.3-2-.1-2,0-2,0-2-.2-2-.9-2-1-2,.1-2,.3-2-.2-2,.6-2,.6-2,.7-2,.5-2,.2-2,.6-2,.2-2,.7-2-.2-2-.1-2,.5-2,.5-2,.2-2,.7-2-.3-2,.7-2,.3-2,0-2-.3-2,.2-2-.2-2,1-2,.4-2,.6-2,.2-2,.1-2,.2-2-.9-2-1.1-2-1.2-2-.6-2-.4-2-.7-2-.3-2-.2-2-1.1-2-.2-2-.5-2,.4-2,.5-2,.4-2,.2-2,.3-2,.1-2-.5-2,.2-2,.3-2,.5-2-.1-2,.1-2-.2-2,.7-2-.1-2-.2-2,1.4-2,.8-2,1.4-2,1.3-2,1.7-2,1.4-2,1.3-2,1.3-2,1.4-2,1.2-2,.8-2,.3-2,1.1-2,.5-2-.4-2-.3-2-.8-2,0-2-.9-2-.5-2,0-2-.8-2-.7-2-1.5-2-.7-2-.7-2-.8-2-1.1-2-1-2-.5-2,.1-2-1.1-2-1.1-2-.3-2-1.2-2-.2-2-.4-2-.4-2-.3-2,.1-2-.3-2-.4-2-.5-2,0-2,.3-2,.4-2-.2-2,.2-2-.2-2,.3-2,.5-2,.7-2,.1-2,.2-2,.4-2,.6-2,.9-2,1-2,.9-2,.2-2,.4-2,1.1-2,.4-2,1-2,1-2,.5-2-.3-2,.5-2-.1-2-.1-2-.1-2-.5-2-.6-2,.5-2-.1-2-.4-2-.3-2-.3-2-.2-2-.7-2,.3-2-.1-2-.1-2-.2-2-.4-2-.8-2-.8-2-1.2-2-.7-2-1.1-2-1.1-2-1.2-2-.8-2-.4-2,.5-2-.2-2-.2-2,0-2-.5-2-.5-2,.5-2-.2-2-.3-2,.4-2-.6-2,.2-2,.1-2-.3-2-.1-2,0-2-.3-2,0-2-.2-2,.1-2,.1-2,.5-2,.4-2,.1-2,.4-2,.3-2,.7-2,.3-2,.8-2,.3-2,.4-2,.5-2,1.1-2,.6-2,.8-2,0-2,.8-2,.5-2,0-2-.2-2,.5-2,.1-2,.4-2,.1-2,.3-2,.5-2,.4-2,0-2-.4-2-.4-2,.4-2,.3-2-.5-2-1.2-2,.7-2,.6-2,1.1-2,.5-2,.4-2,.1-2-1.4-2-2-2-.6-2-2.3-2-1.8-2-1.4-2-1.2-2-2.4-2-1.7-2-1.6-2-2.5-2-.4-2-2.6-2,1.1-2,1.4-2,.4-2-2.2-2-4.5-2-.3-2,.3-2,.1-2,.2-2-.1-2,.2-2-.5-2,0-2-.1-2,.1-2,.4-2,.2-2,.4-2,.3-2,0-2,.6-2,.6-2-.1-2,.3-2,.7-2,.9-2,1.9-2,2.9-2,.5-2,1-2,.2-2,.4-2-.1-2,1-2,.6-2,.2-2,1.3-2,1.4-2,0-2-.4-2-.8-2,.1-2,0-2-.7-2-.9-2-.1-2,.3-2,.1-2-.5-2,.4-2,.3-2,.5-2-.5-2-.4-2-.8-2,.4-2-.2-2-.4-2,0-2,.7-2,0-2-1.3-2,1-2,.2Z" fill="#d9e2ec"/><path d="M1166.6,170l2-.2 2-1 2,1.3 2,0 2-.7 2,0 2,.4 2,.2 2-.4 2,.8 2,.4 2,.5 2-.5 2-.3 2-.4 2,.5 2-.1 2-.3 2,.1 2,.9 2,.7 2,0 2-.1 2,.8 2,.4 2,0 2-1.4 2-1.3 2-.2 2-.6 2-1 2,.1 2-.4 2-.2 2-1 2-.5 2-2.9 2-1.9 2-.9 2-.7 2-.3 2,.1 2-.6 2-.6 2,0 2-.3 2-.4 2-.2 2-.4 2-.1 2,.1 2,0 2,.5 2-.2 2,.1 2-.2 2-.1 2-.3 2,.3 2,4.5 2,2.2 2-.4 2-1.4 2-1.1 2,2.6 2,.4 2,2.5 2,1.6 2,1.7 2,2.4 2,1.2 2,1.4 2,1.8 2,2.3 2,.6 2,2 2,1.4 2-.1 2-.4 2-.5 2-1.1 2-.6 2-.7 2,1.2 2,.5 2-.3 2-.4 2,.4 2,.4 2,0 2-.4 2-.5 2-.3 2-.1 2-.4 2-.1 2-.5 2,.2 2,0 2-.5 2-.8 2,0 2-.8 2-.6 2-1.1 2-.5 2-.4 2-.3 2-.8 2-.3 2-.7 2-.3 2-.4 2-.1 2-.4 2-.5 2-.1 2-.1 2,.2 2,0 2,.3 2,0 2,.1 2,.3 2-.1 2-.2 2,.6 2-.4 2,.3 2,.2 2-.5 2,.5 2,.5 2,0 2,.2 2,.2 2-.5 2,.4 2,.8 2,1.2 2,1.1 2,1.1 2,.7 2,1.2 2,.8 2,.8 2,.4 2,.2 2,.1 2,.1 2-.3 2,.7 2,.2 2,.3 2,.3 2,.4 2,.1 2-.5 2,.6 2,.5 2,.1 2,.1 2,.1 2-.5 2,.3 2-.5 2-1 2-1 2-.4 2-1.1 2-.4 2-.2 2-.9 2-1 2-.9 2-.6 2-.4 2-.2 2-.1 2-.7 2-.5 2-.3 2,.2 2-.2 2,.2 2-.4 2-.3 2,0 2,.5 2,.4 2,.3 2-.1 2,.3 2,.4 2,.4 2,.2 2,1.2 2,.3 2,1.1 2,1.1 2-.1 2,.5 2,1 2,1.1 2,.8 2,.7 2,.7 2,1.5 2,.7 2,.8 2,0 2,.5 2,.9 2,0 2,.8 2,.3 2,.4 2-.5 2-1.1 2-.3 2-.8 2-1.2 2-1.4 2-1.3 2-1.3 2-1.4 2-1.7 2-1.3 2-1.4 2-.8 2-1.4 2,.2 2,.1 2-.7 2,.2 2-.1 2,.1 2-.5 2-.3 2-.2 2,.5 2-.1 2-.3 2-.2 2-.4 2-.5 2-.4 2,.5 2,.2 2,1.1 2,.2 2,.3 2,.7 2,.4 2,.6 2,1.2 2,1.1 2,.9 2-.2 2-.1 2-.2 2-.6 2-.4 2-1 2,.2 2-.2 2,.3 2,0 2-.3 2-.7 2,.3 2-.7 2-.2 2-.5 2-.5 2,.1 2,.2 2-.7 2-.2 2-.6 2-.2 2-.5 2-.7 2-.6 2-.6 2,.2 2-.3 2-.1 2,1 2,.9 2,.2 2,0 2,0 2,.1 2,.3 2-.3 2-.1 2-.1 2,.3 2,.6 2,.3 2-.2 2-.1 2,0 2-.1 2-.2 2-.4 2-.2 2,.7 2-.4 2,.1 2,.4 2,.9 2,.5 2,1.7 1.4,1.1 0,2.6-1.4-1.6-2-2.4-2-.7-2-.1-2-.5-2,.6-2-.2-2,0-2-.4-2,.3-2-.5-2,.7-2,.1-2-.4-2-.5-2,.4-2,.5-2-.4-2-.4-2-.1-2,.5-2-.9-2-.5-2-.3-2,0-2-.4-2-.3-2-.5-2,.2-2,0-2,.1-2,.3-2,.8-2,.8-2,.4-2,0-2,.4-2,0-2,.4-2-.3-2,.9-2,.7-2,0-2,.7-2,.5-2-.3-2-.3-2-.1-2,.1-2-.2-2,.1-2-.5-2,1-2,.4-2,.6-2,.2-2,.1-2,.2-2-.9-2-1.1-2-.9-2-.3-2-.2-2-.7-2-1.1-2-.2-2-.6-2-.1-2-.3-2,0-2,.5-2,.3-2-.1-2,.3-2,.1-2-.2-2,.4-2,.2-2,.6-2,.2-2,.3-2,.9-2-.1-2,0-2,.7-2,1.1-2,1.1-2,1.6-2,1-2,1.3-2,.8-2,1.6-2,1.9-2,1.1-2,1.4-2,.3-2,.4-2,.3-2,.7-2,.6-2-.9-2-.6-2-.8-2-.1-2-.4-2-1-2-.7-2-.9-2-1.3-2-1.5-2-.7-2-.8-2-.8-2-.2-2-.8-2-.4-2-.7-2-.2-2-1-2,0-2-.7-2-.7-2-.7-2-.4-2-.3-2-.1-2,.2-2,0-2-.4-2-.2-2,.3-2,.5-2,.5-2-.3-2-.3-2-.6-2,.7-2,.1-2,.2-2,.8-2,1.1-2,.4-2,1.2-2,1.3-2,.6-2,1-2,1.1-2,1.2-2,.9-2,.6-2-.1-2-.2-2-.4-2,.4-2-.6-2-.1-2-.1-2,.2-2,.1-2-.6-2-.7-2-.2-2,.2-2,.5-2-.5-2-.2-2-.6-2-1-2-.3-2-.6-2-.6-2-1.1-2-.5-2-.9-2-1.4-2-.6-2-.6-2-1.3-2-.9-2,.2-2-.3-2,0-2,.4-2,.5-2-.3-2-.5-2-.1-2,.5-2-.6-2,.1-2,.3-2-.7-2,.2-2,.2-2,.7-2,.4-2-.2-2-.2-2,.2-2,.6-2-.5-2,.6-2-.6-2,.2-2,.2-2,.7-2,.8-2,.6-2,.6-2,.7-2,.3-2,1.1-2,.3-2,0-2,1-2,.8-2,.2-2,0-2,.2-2-.1-2-.4-2,0-2,.5-2,.5-2,.6-2-.4-2,.4-2,.3-2,.6-2-.4-2-.1-2-.6-2,.5-2,.7-2,.1-2-1.3-2,.4-2,.3-2,.1-2-1-2-2.1-2-.7-2-2.5-2-.6-2-1.5-2-2.2-2-2.5-2-1.2-2-2.1-2-1.8-2-1.1-2,0-2,2.2-2,0-2,.3-2-.4-2-6.3-2-.6-2-.2-2,.6-2,.4-2-.2-2-.5-2,.3-2,.4-2,.2-2-.4-2-.1-2-.6-2-.1-2,0-2,.6-2-.1-2,.5-2,.4-2,.2-2,.3-2,1.3-2,2.7-2,2.1-2,.7-2,.7-2,1-2,.9-2,.5-2,.1-2,1-2,.2-2,1.5-2,1-2,.4-2-.5-2-.3-2-.5-2-.8-2-.5-2-.4-2,.3-2,.5-2,.5-2-.4-2-.4-2-.3-2-.6-2,0-2,.5-2-.1-2,.1-2-.5-2-.4-2,.5-2,1.1-2-.4-2-1.6-2,0-2,.6Z" fill="#e0e0e8"/><path d="M1166.6,171.3l2-.6 2,0 2,1.6 2,.4 2-1.1 2-.5 2,.4 2,.5 2-.1 2,.1 2-.5 2,0 2,.6 2,.3 2,.4 2,.4 2-.5 2-.5 2-.3 2,.4 2,.5 2,.8 2,.5 2,.3 2,.5 2-.4 2-1 2-1.5 2-.2 2-1 2-.1 2-.5 2-.9 2-1 2-.7 2-.7 2-2.1 2-2.7 2-1.3 2-.3 2-.2 2-.4 2-.5 2,.1 2-.6 2,0 2,.1 2,.6 2,.1 2,.4 2-.2 2-.4 2-.3 2,.5 2,.2 2-.4 2-.6 2,.2 2,.6 2,6.3 2,.4 2-.3 2,0 2-2.2 2,0 2,1.1 2,1.8 2,2.1 2,1.2 2,2.5 2,2.2 2,1.5 2,.6 2,2.5 2,.7 2,2.1 2,1 2-.1 2-.3 2-.4 2,1.3 2-.1 2-.7 2-.5 2,.6 2,.1 2,.4 2-.6 2-.3 2-.4 2,.4 2-.6 2-.5 2-.5 2,0 2,.4 2,.1 2-.2 2,0 2-.2 2-.8 2-1 2,0 2-.3 2-1.1 2-.3 2-.7 2-.6 2-.6 2-.8 2-.7 2-.2 2-.2 2,.6 2-.6 2,.5 2-.6 2-.2 2,.2 2,.2 2-.4 2-.7 2-.2 2-.2 2,.7 2-.3 2-.1 2,.6 2-.5 2,.1 2,.5 2,.3 2-.5 2-.4 2,0 2,.3 2-.2 2,.9 2,1.3 2,.6 2,.6 2,1.4 2,.9 2,.5 2,1.1 2,.6 2,.6 2,.3 2,1 2,.6 2,.2 2,.5 2-.5 2-.2 2,.2 2,.7 2,.6 2-.1 2-.2 2,.1 2,.1 2,.6 2-.4 2,.4 2,.2 2,.1 2-.6 2-.9 2-1.2 2-1.1 2-1 2-.6 2-1.3 2-1.2 2-.4 2-1.1 2-.8 2-.2 2-.1 2-.7 2,.6 2,.3 2,.3 2-.5 2-.5 2-.3 2,.2 2,.4 2,0 2-.2 2,.1 2,.3 2,.4 2,.7 2,.7 2,.7 2,0 2,1 2,.2 2,.7 2,.4 2,.8 2,.2 2,.8 2,.8 2,.7 2,1.5 2,1.3 2,.9 2,.7 2,1 2,.4 2,.1 2,.8 2,.6 2,.9 2-.6 2-.7 2-.3 2-.4 2-.3 2-1.4 2-1.1 2-1.9 2-1.6 2-.8 2-1.3 2-1 2-1.6 2-1.1 2-1.1 2-.7 2,0 2,.1 2-.9 2-.3 2-.2 2-.6 2-.2 2-.4 2,.2 2-.1 2-.3 2,.1 2-.3 2-.5 2,0 2,.3 2,.1 2,.6 2,.2 2,1.1 2,.7 2,.2 2,.3 2,.9 2,1.1 2,.9 2-.2 2-.1 2-.2 2-.6 2-.4 2-1 2,.5 2-.1 2,.2 2-.1 2,.1 2,.3 2,.3 2-.5 2-.7 2,0 2-.7 2-.9 2,.3 2-.4 2,0 2-.4 2,0 2-.4 2-.8 2-.8 2-.3 2-.1 2,0 2-.2 2,.5 2,.3 2,.4 2,0 2,.3 2,.5 2,.9 2-.5 2,.1 2,.4 2,.4 2-.5 2-.4 2,.5 2,.4 2-.1 2-.7 2,.5 2-.3 2,.4 2,0 2,.2 2-.6 2,.5 2,.1 2,.7 2,2.4 1.4,1.6 0,3.1-1.4-1.3-2-1.8-2-.8-2-.7-2-.6-2-.2-2-.4-2,.4-2-.2-2,.4-2,.1-2-.3-2,.3-2,.4-2-.5-2,.3-2-.5-2,.2-2,0-2,.4-2-.4-2-.4-2-.4-2,.2-2-1-2-.8-2-.2-2,.2-2,.2-2,0-2,.9-2,0-2,.6-2,.3-2,.1-2,.5-2-.1-2,.4-2,.3-2,.9-2,.3-2-.1-2,.3-2-.5-2,.3-2,.3-2-.4-2-.2-2,0-2,.2-2-.1-2-.1-2,.5-2-.2-2,.7-2,.8-2,.6-2,.1-2-1-2-.7-2-1.1-2-1.2-2-.2-2,0-2-.1-2,.2-2-.8-2-.7-2-.3-2,.7-2-.2-2-.3-2-.3-2,.1-2-.1-2,.6-2-.2-2-.3-2-.2-2,0-2,.6-2,.8-2,.7-2,.5-2-.3-2,1.4-2,2-2,2-2,1-2,2.1-2,1.4-2,2-2,1.9-2,1-2,.5-2,.9-2,.4-2,.6-2,.3-2,.1-2-.9-2-.6-2-.6-2-.6-2-1-2-.2-2-.5-2-1.6-2-.9-2-1.5-2-1.7-2-1.7-2-.4-2-.4-2,.1-2-1-2-.2-2-1.1-2-.8-2-.3-2-.5-2-.7-2-.3-2-.3-2,.3-2-.2-2-.5-2-.4-2-.5-2-.1-2,.3-2,.2-2,.6-2,.6-2,.3-2,0-2,.3-2,0-2-.1-2,1.3-2,.7-2,.6-2,.3-2,1.3-2,1.1-2,1.1-2,1.3-2,.6-2,.7-2,.6-2-.2-2,.1-2,.2-2-.8-2-.4-2,.2-2-.8-2,.2-2-.1-2-.1-2-.3-2,.3-2-.6-2,.2-2-.4-2-.7-2-.1-2-.8-2-.8-2-1.1-2-1.2-2-.4-2-.6-2-.8-2-1.2-2-1.5-2-1.1-2-.8-2-.2-2,.2-2-.6-2,.4-2-.1-2-.3-2,.1-2-.4-2-.4-2,.3-2-.5-2,.2-2,.1-2,.1-2,.5-2-.1-2,.4-2,.6-2-.3-2,.1-2,.1-2-.2-2,.5-2,.6-2,.8-2,.5-2,.1-2,.3-2-.1-2,.3-2,.7-2,0-2,1-2,.2-2,.8-2,.6-2,.3-2,.7-2,.5-2,0-2,.8-2,.2-2,.3-2,.1-2-.4-2,.7-2-.2-2,.2-2,.1-2-.3-2,.3-2,0-2,0-2,.6-2-.9-2,.8-2-.7-2-1.2-2,.3-2,.3-2,.1-2-1-2-1.5-2-1.3-2-.6-2-.3-2-2.3-2-1.6-2-.5-2-2.3-2-1-2-2.3-2,0-2-1.6-2,2-2,2.6-2,.1-2-1.3-2-6.5-2-.6-2-.5-2,.2-2-.4-2,.6-2-.2-2-.1-2-.5-2-.4-2,.4-2-.6-2,.1-2-.1-2,.5-2,0-2-.2-2-.3-2,.7-2,.2-2,.9-2,.7-2,2.1-2,2.6-2,1-2,.8-2,1-2,.7-2,1.1-2,.8-2,.3-2,.3-2,1.2-2,.9-2-.1-2,.1-2-.1-2-.3-2-.5-2-.3-2-.4-2,0-2,.2-2-.2-2-.2-2-.2-2,.3-2-.5-2,.5-2-.4-2-.3-2,.5-2-.6-2-.5-2,.1-2,.7-2-.1-2-1.7-2,.6-2,.9Z" fill="#dcdcee"/><path d="M1166.6,174.5l2-.9 2-.6 2,1.7 2,.1 2-.7 2-.1 2,.5 2,.6 2-.5 2,.3 2,.4 2-.5 2,.5 2-.3 2,.2 2,.2 2,.2 2-.2 2,0 2,.4 2,.3 2,.5 2,.3 2,.1 2-.1 2,.1 2-.9 2-1.2 2-.3 2-.3 2-.8 2-1.1 2-.7 2-1 2-.8 2-1 2-2.6 2-2.1 2-.7 2-.9 2-.2 2-.7 2,.3 2,.2 2,0 2-.5 2,.1 2-.1 2,.6 2-.4 2,.4 2,.5 2,.1 2,.2 2-.6 2,.4 2-.2 2,.5 2,.6 2,6.5 2,1.3 2-.1 2-2.6 2-2 2,1.6 2,0 2,2.3 2,1 2,2.3 2,.5 2,1.6 2,2.3 2,.3 2,.6 2,1.3 2,1.5 2,1 2-.1 2-.3 2-.3 2,1.2 2,.7 2-.8 2,.9 2-.6 2,0 2,0 2-.3 2,.3 2-.1 2-.2 2,.2 2-.7 2,.4 2-.1 2-.3 2-.2 2-.8 2,0 2-.5 2-.7 2-.3 2-.6 2-.8 2-.2 2-1 2,0 2-.7 2-.3 2,.1 2-.3 2-.1 2-.5 2-.8 2-.6 2-.5 2,.2 2-.1 2-.1 2,.3 2-.6 2-.4 2,.1 2-.5 2-.1 2-.1 2-.2 2,.5 2-.3 2,.4 2,.4 2-.1 2,.3 2,.1 2-.4 2,.6 2-.2 2,.2 2,.8 2,1.1 2,1.5 2,1.2 2,.8 2,.6 2,.4 2,1.2 2,1.1 2,.8 2,.8 2,.1 2,.7 2,.4 2-.2 2,.6 2-.3 2,.3 2,.1 2,.1 2-.2 2,.8 2-.2 2,.4 2,.8 2-.2 2-.1 2,.2 2-.6 2-.7 2-.6 2-1.3 2-1.1 2-1.1 2-1.3 2-.3 2-.6 2-.7 2-1.3 2,.1 2,0 2-.3 2,0 2-.3 2-.6 2-.6 2-.2 2-.3 2,.1 2,.5 2,.4 2,.5 2,.2 2-.3 2,.3 2,.3 2,.7 2,.5 2,.3 2,.8 2,1.1 2,.2 2,1 2-.1 2,.4 2,.4 2,1.7 2,1.7 2,1.5 2,.9 2,1.6 2,.5 2,.2 2,1 2,.6 2,.6 2,.6 2,.9 2-.1 2-.3 2-.6 2-.4 2-.9 2-.5 2-1 2-1.9 2-2 2-1.4 2-2.1 2-1 2-2 2-2 2-1.4 2,.3 2-.5 2-.7 2-.8 2-.6 2,0 2,.2 2,.3 2,.2 2-.6 2,.1 2-.1 2,.3 2,.3 2,.2 2-.7 2,.3 2,.7 2,.8 2-.2 2,.1 2,0 2,.2 2,1.2 2,1.1 2,.7 2,1 2-.1 2-.6 2-.8 2-.7 2,.2 2-.5 2,.1 2,.1 2-.2 2,0 2,.2 2,.4 2-.3 2-.3 2,.5 2-.3 2,.1 2-.3 2-.9 2-.3 2-.4 2,.1 2-.5 2-.1 2-.3 2-.6 2,0 2-.9 2,0 2-.2 2-.2 2,.2 2,.8 2,1 2-.2 2,.4 2,.4 2,.4 2-.4 2,0 2-.2 2,.5 2-.3 2,.5 2-.4 2-.3 2,.3 2-.1 2-.4 2,.2 2-.4 2,.4 2,.2 2,.6 2,.7 2,.8 2,1.8 1.4,1.3 0,.8-1.4-.9-2-2.2-2-.5-2-1.1-2-.5-2,0-2,.2-2,.1-2,.3-2,.4-2,0-2-.2-2-.3-2,.2-2-.1-2-.5-2-.4-2,.4-2,.4-2,.6-2-.3-2-.1-2-.5-2,.1-2-.4-2-.2-2-.5-2-.3-2-.2-2,.5-2,0-2,.1-2,.1-2,.1-2-.3-2,.4-2,.8-2,.5-2,.9-2,.3-2-.1-2,.1-2,.8-2,0-2,.1-2,0-2,.3-2,.1-2,.2-2-.4-2-.2-2-.7-2,.1-2,.5-2,.3-2,.4-2-.1-2,.4-2-1-2-.8-2-.5-2-.6-2-.3-2-.7-2-.5-2-.2-2-.4-2-.7-2,.4-2,0-2-.1-2,.7-2-.2-2,.2-2,.2-2-.4-2,.4-2-.4-2-.1-2,.3-2,1-2,.3-2,.3-2,1-2-.1-2,1.2-2,1.9-2,1.2-2,1.5-2,1.5-2,1.6-2,1.2-2,2.1-2,.5-2,.5-2,.9-2,.4-2,.6-2,.3-2,.1-2-.8-2-.2-2-.2-2-.1-2-.4-2-.9-2-.7-2-1.4-2-1.2-2-1.3-2-.7-2-1.5-2-.8-2-.9-2-.7-2-.9-2-.7-2-1-2-.3-2-.9-2-.8-2-.6-2-.3-2-.4-2,.3-2-.2-2,.3-2,.3-2-.2-2-.7-2,.5-2,.6-2,.2-2-.1-2,.8-2,.1-2-.2-2-.1-2,.9-2,.5-2,.4-2,1.1-2,.6-2,.7-2,.9-2,.8-2,1-2,1-2,1.1-2,.3-2,.6-2,.1-2-.2-2,.1-2-.1-2,.1-2-.6-2-.1-2-.6-2,.2-2-.2-2,.1-2,0-2-.4-2-.4-2-.3-2,.1-2-1.1-2-.5-2-.9-2-.8-2-.9-2-1.3-2-1.3-2-.5-2-.5-2-.8-2-1.2-2-.1-2,0-2-.4-2-.4-2,.3-2,.1-2,0-2-.4-2-.1-2-.2-2,.4-2,0-2,.1-2,.5-2,.4-2-.4-2,.7-2-.1-2,.4-2,.1-2,.6-2-.2-2,.4-2,.3-2-.2-2,.1-2,.3-2-.1-2,.5-2,.3-2,.9-2,.5-2-.1-2,0-2,.8-2,.4-2,1-2-.1-2,.5-2,.7-2,.1-2,.2-2,.6-2-.3-2-.1-2,.2-2,0-2,.2-2,.2-2,.5-2,.1-2-.1-2-.3-2-.1-2,1-2-.2-2,.6-2,.4-2,0-2-.1-2-.4-2-1.3-2-1.7-2-2-2-1.9-2-.4-2-1.1-2-2-2-1.7-2-1.4-2-2.7-2-2-2-.3-2-1.6-2,2-2,2.6-2,.1-2-1.3-2-6.5-2-.6-2-.5-2,.2-2-.4-2,.6-2,.1-2-.2-2,.5-2,.2-2-.1-2-.3-2-.6-2,.1-2,.5-2-.6-2,.7-2-.2-2-.3-2,.8-2,.5-2,1.2-2,2.1-2,2.4-2,1.2-2,.9-2,1.1-2,.3-2,.4-2,.9-2,1-2,1.1-2,.5-2,1-2,.6-2-.4-2-.6-2-.2-2,.1-2-.5-2-.4-2-.5-2,.3-2,.2-2,.2-2-.1-2-.3-2-.4-2-.1-2,0-2,.3-2-.5-2,0-2,0-2-.7-2,.6-2,.2-2-1.1-2,.1-2,1.3Z" fill="#e2e4da"/><path d="M1166.6,176.4l2-1.3 2-.1 2,1.1 2-.2 2-.6 2,.7 2,0 2,0 2,.5 2-.3 2,0 2,.1 2,.4 2,.3 2,.1 2-.2 2-.2 2-.3 2,.5 2,.4 2,.5 2-.1 2,.2 2,.6 2,.4 2-.6 2-1 2-.5 2-1.1 2-1 2-.9 2-.4 2-.3 2-1.1 2-.9 2-1.2 2-2.4 2-2.1 2-1.2 2-.5 2-.8 2,.3 2,.2 2-.7 2,.6 2-.5 2-.1 2,.6 2,.3 2,.1 2-.2 2-.5 2,.2 2-.1 2-.6 2,.4 2-.2 2,.5 2,.6 2,6.5 2,1.3 2-.1 2-2.6 2-2 2,1.6 2,.3 2,2 2,2.7 2,1.4 2,1.7 2,2 2,1.1 2,.4 2,1.9 2,2 2,1.7 2,1.3 2,.4 2,.1 2,0 2-.4 2-.6 2,.2 2-1 2,.1 2,.3 2,.1 2-.1 2-.5 2-.2 2-.2 2,0 2-.2 2,.1 2,.3 2-.6 2-.2 2-.1 2-.7 2-.5 2,.1 2-1 2-.4 2-.8 2,0 2,.1 2-.5 2-.9 2-.3 2-.5 2,.1 2-.3 2-.1 2,.2 2-.3 2-.4 2,.2 2-.6 2-.1 2-.4 2,.1 2-.7 2,.4 2-.4 2-.5 2-.1 2,0 2-.4 2,.2 2,.1 2,.4 2,0 2-.1 2-.3 2,.4 2,.4 2,0 2,.1 2,1.2 2,.8 2,.5 2,.5 2,1.3 2,1.3 2,.9 2,.8 2,.9 2,.5 2,1.1 2-.1 2,.3 2,.4 2,.4 2,0 2-.1 2,.2 2-.2 2,.6 2,.1 2,.6 2-.1 2,.1 2-.1 2,.2 2-.1 2-.6 2-.3 2-1.1 2-1 2-1 2-.8 2-.9 2-.7 2-.6 2-1.1 2-.4 2-.5 2-.9 2,.1 2,.2 2-.1 2-.8 2,.1 2-.2 2-.6 2-.5 2,.7 2,.2 2-.3 2-.3 2,.2 2-.3 2,.4 2,.3 2,.6 2,.8 2,.9 2,.3 2,1 2,.7 2,.9 2,.7 2,.9 2,.8 2,1.5 2,.7 2,1.3 2,1.2 2,1.4 2,.7 2,.9 2,.4 2,.1 2,.2 2,.2 2,.8 2-.1 2-.3 2-.6 2-.4 2-.9 2-.5 2-.5 2-2.1 2-1.2 2-1.6 2-1.5 2-1.5 2-1.2 2-1.9 2-1.2 2,.1 2-1 2-.3 2-.3 2-1 2-.3 2,.1 2,.4 2-.4 2,.4 2-.2 2-.2 2,.2 2-.7 2,.1 2,0 2-.4 2,.7 2,.4 2,.2 2,.5 2,.7 2,.3 2,.6 2,.5 2,.8 2,1 2-.4 2,.1 2-.4 2-.3 2-.5 2-.1 2,.7 2,.2 2,.4 2-.2 2-.1 2-.3 2,0 2-.1 2,0 2-.8 2-.1 2,.1 2-.3 2-.9 2-.5 2-.8 2-.4 2,.3 2-.1 2-.1 2-.1 2,0 2-.5 2,.2 2,.3 2,.5 2,.2 2,.4 2-.1 2,.5 2,.1 2,.3 2-.6 2-.4 2-.4 2,.4 2,.5 2,.1 2-.2 2,.3 2,.2 2,0 2-.4 2-.3 2-.1 2-.2 2,0 2,.5 2,1.1 2,.5 2,2.2 1.4,.9 0,9.6-1.4-1.1-2-2.5-2-1.3-2-1.5-2,.2-2,.1-2-.3-2-.4-2,.1-2-.4-2,.5-2-.3-2,.1-2-.4-2,.4-2,.4-2-.1-2-.3-2-.4-2-.3-2,.2-2-.1-2-.4-2-.6-2,0-2,.2-2,0-2-.5-2-.6-2,.6-2,.8-2,.3-2,.6-2-.3-2,.2-2,.6-2,.1-2-.3-2,.7-2,.7-2,.4-2-.1-2,.9-2-.4-2,.4-2-.1-2,.5-2-.8-2-.1-2,.3-2-.8-2-.9-2-.8-2,0-2,.2-2,.3-2,.2-2-.1-2-.3-2-.8-2-1.2-2-.1-2-1.3-2-.1-2-.9-2-.3-2-.5-2,0-2,.2-2-.4-2,.2-2,.4-2,.2-2,.3-2-.4-2,.4-2,0-2-.3-2,.6-2,.9-2,1.1-2,.5-2,.7-2,.2-2,.9-2,1.5-2,1.9-2,1.6-2,1.3-2,2.4-2,2.1-2,2.4-2,1.6-2,.5-2-.2-2,.7-2-.3-2,.8-2,.6-2-.9-2-.3-2-1.2-2-.6-2-.6-2-.5-2-.9-2-.8-2-1.4-2-1.4-2-1.1-2-1.8-2-1.6-2-.4-2-.7-2-1.1-2-1-2-.2-2,0-2-1-2-.7-2-.8-2-.7-2,.4-2-.4-2-.5-2-.6-2,.1-2,.2-2,.5-2,.5-2-.5-2-.6-2,.8-2,.5-2,.6-2,.3-2-.1-2,.2-2,.3-2,1.2-2,.6-2,1.5-2,1.3-2,1-2,1.7-2,.8-2,.5-2,1.1-2,.6-2,.5-2,.4-2-.1-2-.1-2,0-2,.3-2,.1-2-.7-2-.6-2-.5-2-.9-2-.2-2-.7-2,.1-2-.4-2-.2-2-.7-2-1-2-.2-2-.4-2-1-2-.7-2-1.1-2-.5-2-1.3-2-1.2-2-.5-2-.8-2-1.7-2,0-2,.4-2,.2-2,.3-2,0-2,.1-2-.3-2,.3-2,.3-2,.5-2,0-2,.1-2,.2-2-.4-2-.3-2,.1-2,.6-2-.1-2-.3-2,.7-2,.3-2-.2-2-.1-2,.4-2,.6-2,.3-2,0-2,.2-2,.8-2-.1-2,0-2,.8-2,0-2,.3-2,.9-2,.7-2,0-2,.3-2,.1-2,.1-2,.7-2,.4-2-.2-2-.3-2-.3-2,.7-2-.3-2-.3-2-.1-2,.1-2,.4-2,.7-2,.5-2,.8-2-.9-2-.1-2-.4-2,.4-2-.9-2,.3-2,1.1-2-.8-2-1.6-2-2-2-1.3-2-.3-2-2-2-2-2-2.9-2-.6-2-1-2-.8-2-1.1-2-1.6-2,.9-2,1.1-2,.8-2-1.2-2-6-2-.3-2-.5-2,.4-2-.3-2,0-2-.2-2,0-2,.5-2,0-2-.5-2,.3-2-.3-2,.1-2,.5-2-.4-2-.1-2,.7-2,1.2-2,.6-2,.2-2,1.4-2,1.8-2,2.4-2,.9-2,.6-2,1.5-2,.7-2,.6-2,.6-2,.4-2,1.4-2,1.4-2,.9-2,.1-2-.9-2,.2-2,.1-2-.9-2,.1-2-.9-2,.1-2-.5-2,.3-2,.4-2,.2-2,.3-2-.2-2,.4-2,.2-2,.1-2-.5-2-.6-2-.2-2,0-2,1.3-2,0-2-2.8-2,.7-2,.4Z" fill="#dddcf0"/><path d="M1166.6,183.3l2-.4 2-.7 2,2.8 2,0 2-1.3 2,0 2,.2 2,.6 2,.5 2-.1 2-.2 2-.4 2,.2 2-.3 2-.2 2-.4 2-.3 2,.5 2-.1 2,.9 2-.1 2,.9 2-.1 2-.2 2,.9 2-.1 2-.9 2-1.4 2-1.4 2-.4 2-.6 2-.6 2-.7 2-1.5 2-.6 2-.9 2-2.4 2-1.8 2-1.4 2-.2 2-.6 2-1.2 2-.7 2,.1 2,.4 2-.5 2-.1 2,.3 2-.3 2,.5 2,0 2-.5 2,0 2,.2 2,0 2,.3 2-.4 2,.5 2,.3 2,6 2,1.2 2-.8 2-1.1 2-.9 2,1.6 2,1.1 2,.8 2,1 2,.6 2,2.9 2,2 2,2 2,.3 2,1.3 2,2 2,1.6 2,.8 2-1.1 2-.3 2,.9 2-.4 2,.4 2,.1 2,.9 2-.8 2-.5 2-.7 2-.4 2-.1 2,.1 2,.3 2,.3 2-.7 2,.3 2,.3 2,.2 2-.4 2-.7 2-.1 2-.1 2-.3 2,0 2-.7 2-.9 2-.3 2,0 2-.8 2,0 2,.1 2-.8 2-.2 2,0 2-.3 2-.6 2-.4 2,.1 2,.2 2-.3 2-.7 2,.3 2,.1 2-.6 2-.1 2,.3 2,.4 2-.2 2-.1 2,0 2-.5 2-.3 2-.3 2,.3 2-.1 2,0 2-.3 2-.2 2-.4 2,0 2,1.7 2,.8 2,.5 2,1.2 2,1.3 2,.5 2,1.1 2,.7 2,1 2,.4 2,.2 2,1 2,.7 2,.2 2,.4 2-.1 2,.7 2,.2 2,.9 2,.5 2,.6 2,.7 2-.1 2-.3 2,0 2,.1 2,.1 2-.4 2-.5 2-.6 2-1.1 2-.5 2-.8 2-1.7 2-1 2-1.3 2-1.5 2-.6 2-1.2 2-.3 2-.2 2,.1 2-.3 2-.6 2-.5 2-.8 2,.6 2,.5 2-.5 2-.5 2-.2 2-.1 2,.6 2,.5 2,.4 2-.4 2,.7 2,.8 2,.7 2,1 2,0 2,.2 2,1 2,1.1 2,.7 2,.4 2,1.6 2,1.8 2,1.1 2,1.4 2,1.4 2,.8 2,.9 2,.5 2,.6 2,.6 2,1.2 2,.3 2,.9 2-.6 2-.8 2,.3 2-.7 2,.2 2-.5 2-1.6 2-2.4 2-2.1 2-2.4 2-1.3 2-1.6 2-1.9 2-1.5 2-.9 2-.2 2-.7 2-.5 2-1.1 2-.9 2-.6 2,.3 2,0 2-.4 2,.4 2-.3 2-.2 2-.4 2-.2 2,.4 2-.2 2,0 2,.5 2,.3 2,.9 2,.1 2,1.3 2,.1 2,1.2 2,.8 2,.3 2,.1 2-.2 2-.3 2-.2 2,0 2,.8 2,.9 2,.8 2-.3 2,.1 2,.8 2-.5 2,.1 2-.4 2,.4 2-.9 2,.1 2-.4 2-.7 2-.7 2,.3 2-.1 2-.6 2-.2 2,.3 2-.6 2-.3 2-.8 2-.6 2,.6 2,.5 2,0 2-.2 2,0 2,.6 2,.4 2,.1 2-.2 2,.3 2,.4 2,.3 2,.1 2-.4 2-.4 2,.4 2-.1 2,.3 2-.5 2,.4 2-.1 2,.4 2,.3 2-.1 2-.2 2,1.5 2,1.3 2,2.5 1.4,1.1 0,6.7-1.4-1.5-2-2.2-2-1.8-2-1.9-2-.2-2,.1-2,.3-2,.1-2-.3-2,.1-2-.4-2,.4-2,.5-2-.3-2-.2-2-.6-2-.2-2,.2-2,.3-2,.4-2-.4-2,.2-2,.2-2,0-2-.1-2-.8-2-.3-2-.4-2,.2-2,.3-2,.4-2,.8-2,0-2,.1-2-.2-2,.3-2,.8-2,0-2,.4-2-.1-2,.2-2,.8-2,.2-2-.5-2,.3-2-.1-2-.3-2-.3-2-.2-2-.5-2-.5-2-.2-2,.3-2,.1-2-.3-2-.6-2-.4-2-.4-2-1.1-2-.1-2-.5-2-1-2-1.2-2-.1-2,.2-2-.6-2-.2-2,.1-2-.3-2,0-2,.3-2,.3-2-.3-2-.3-2,0-2,0-2,.2-2,.3-2,.8-2,.8-2,.6-2,.2-2,1-2,.6-2,1-2,1.8-2,2.1-2,2.4-2,2.3-2,1.8-2,2.2-2,2-2,1.7-2,.8-2,.2-2,.8-2,1.1-2-.1-2,.4-2,0-2-1.4-2-1.2-2-1.3-2-.8-2-1.5-2-.5-2-1.5-2-2.1-2-1.6-2-1.7-2-1.5-2-1.7-2-.7-2-1-2-1.1-2-.5-2-.5-2-.8-2-.5-2-.4-2-.8-2-.2-2-.1-2,.2-2,.1-2-.3-2-.2-2,.2-2,0-2-.4-2,.1-2-.1-2,.2-2,1.2-2,.2-2,1.1-2,.2-2,.5-2,.4-2,1.1-2,1.2-2,1.1-2,1.2-2,1.3-2,1-2,.9-2,1.1-2,1-2,1.4-2,1.2-2,.5-2-.8-2-1.1-2-.3-2,0-2-.7-2-.5-2-.3-2,.1-2-.4-2-.8-2,0-2,.2-2-.5-2,0-2-.8-2-.1-2-.5-2-1-2-.5-2-1.4-2-.8-2-.3-2-1-2-.8-2-.9-2-.6-2-.6-2,0-2,.4-2,.3-2,.4-2,.3-2-.2-2,.4-2-.1-2-.1-2-.1-2-.5-2-.3-2,.3-2,.2-2,.1-2,.1-2,.1-2,.5-2,.4-2,.6-2,.1-2,.2-2,.5-2,.2-2-.4-2,0-2,.6-2,0-2,.5-2,.5-2-.3-2,.3-2,.2-2,.5-2,.2-2-.3-2,.1-2,.5-2,.1-2,.6-2,.2-2,.9-2-.3-2-.3-2-.2-2-.1-2-.4-2-.3-2-.7-2,.3-2,.5-2,0-2,0-2,.6-2-.1-2,.3-2-.3-2,.3-2,1-2-.9-2-.8-2-.9-2,.4-2-1.6-2-1.6-2-2-2-2.3-2-3.1-2-1.9-2-1.6-2-1.3-2-.1-2-.8-2-1.2-2,2-2,1-2-.4-2-.7-2-5.4-2-1-2-.5-2,.3-2-.4-2-.2-2,.3-2-.6-2-.3-2,.2-2-.2-2,.3-2,.1-2-.1-2-.2-2,.3-2,.7-2-.2-2,.1-2,1.2-2,.5-2,1-2,1.9-2,1.9-2,1.5-2,1.1-2,.7-2,1.4-2,1.6-2,.6-2,1.3-2,1.5-2,1.7-2,1.8-2-.8-2,.1-2-.1-2-.2-2-.2-2-.1-2-.7-2-.5-2,.6-2-.3-2,.1-2-.3-2,.3-2-.5-2-.5-2-.4-2,.3-2-.2-2-.1-2-.2-2,.4-2,.6-2-.1-2-2.6-2,1.1-2,.6Z" fill="#e7ecd7"/><path d="M1166.6,189.8l2-.6 2-1.1 2,2.6 2,.1 2-.6 2-.4 2,.2 2,.1 2,.2 2-.3 2,.4 2,.5 2,.5 2-.3 2,.3 2-.1 2,.3 2-.6 2,.5 2,.7 2,.1 2,.2 2,.2 2,.1 2-.1 2,.8 2-1.8 2-1.7 2-1.5 2-1.3 2-.6 2-1.6 2-1.4 2-.7 2-1.1 2-1.5 2-1.9 2-1.9 2-1 2-.5 2-1.2 2-.1 2,.2 2-.7 2-.3 2,.2 2,.1 2-.1 2-.3 2,.2 2-.2 2,.3 2,.6 2-.3 2,.2 2,.4 2-.3 2,.5 2,1 2,5.4 2,.7 2,.4 2-1 2-2 2,1.2 2,.8 2,.1 2,1.3 2,1.6 2,1.9 2,3.1 2,2.3 2,2 2,1.6 2,1.6 2-.4 2,.9 2,.8 2,.9 2-1 2-.3 2,.3 2-.3 2,.1 2-.6 2,0 2,0 2-.5 2-.3 2,.7 2,.3 2,.4 2,.1 2,.2 2,.3 2,.3 2-.9 2-.2 2-.6 2-.1 2-.5 2-.1 2,.3 2-.2 2-.5 2-.2 2-.3 2,.3 2-.5 2-.5 2,0 2-.6 2,0 2,.4 2-.2 2-.5 2-.2 2-.1 2-.6 2-.4 2-.5 2-.1 2-.1 2-.1 2-.2 2-.3 2,.3 2,.5 2,.1 2,.1 2,.1 2-.4 2,.2 2-.3 2-.4 2-.3 2-.4 2,0 2,.6 2,.6 2,.9 2,.8 2,1 2,.3 2,.8 2,1.4 2,.5 2,1 2,.5 2,.1 2,.8 2,0 2,.5 2-.2 2,0 2,.8 2,.4 2-.1 2,.3 2,.5 2,.7 2,0 2,.3 2,1.1 2,.8 2-.5 2-1.2 2-1.4 2-1 2-1.1 2-.9 2-1 2-1.3 2-1.2 2-1.1 2-1.2 2-1.1 2-.4 2-.5 2-.2 2-1.1 2-.2 2-1.2 2-.2 2,.1 2-.1 2,.4 2,0 2-.2 2,.2 2,.3 2-.1 2-.2 2,.1 2,.2 2,.8 2,.4 2,.5 2,.8 2,.5 2,.5 2,1.1 2,1 2,.7 2,1.7 2,1.5 2,1.7 2,1.6 2,2.1 2,1.5 2,.5 2,1.5 2,.8 2,1.3 2,1.2 2,1.4 2,0 2-.4 2,.1 2-1.1 2-.8 2-.2 2-.8 2-1.7 2-2 2-2.2 2-1.8 2-2.3 2-2.4 2-2.1 2-1.8 2-1 2-.6 2-1 2-.2 2-.6 2-.8 2-.8 2-.3 2-.2 2,0 2,0 2,.3 2,.3 2-.3 2-.3 2,0 2,.3 2-.1 2,.2 2,.6 2-.2 2,.1 2,1.2 2,1 2,.5 2,.1 2,1.1 2,.4 2,.4 2,.6 2,.3 2-.1 2-.3 2,.2 2,.5 2,.5 2,.2 2,.3 2,.3 2,.1 2-.3 2,.5 2-.2 2-.8 2-.2 2,.1 2-.4 2,0 2-.8 2-.3 2,.2 2-.1 2,0 2-.8 2-.4 2-.3 2-.2 2,.4 2,.3 2,.8 2,.1 2,0 2-.2 2-.2 2,.4 2-.4 2-.3 2-.2 2,.2 2,.6 2,.2 2,.3 2-.5 2-.4 2,.4 2-.1 2,.3 2-.1 2-.3 2-.1 2,.2 2,1.9 2,1.8 2,2.2 1.4,1.5 0,1.2-1.4-1.2-2-2.1-2-1.4-2-1.4-2-.6-2,.3-2,.5-2-.4-2-.4-2-.2-2,0-2,.2-2,.1-2,0-2-.2-2,.3-2,.1-2-.3-2-.5-2-.6-2,.5-2-.6-2,0-2-.3-2,.3-2,.3-2-.8-2-.2-2,.3-2,.1-2,.8-2,.3-2,.5-2,.8-2,.3-2,.5-2-.2-2-.1-2,0-2-.2-2,0-2,0-2,.7-2,.5-2-.3-2,.3-2-.2-2-.4-2-.3-2-1-2-.1-2-.2-2-.5-2-.5-2-.5-2,.2-2-.7-2-.7-2-.9-2-.4-2-.4-2-1.1-2-1.2-2,0-2,.1-2,0-2,.1-2-.3-2-.3-2,0-2-.1-2,.1-2,0-2,0-2,.4-2,.1-2,.1-2,.6-2,.3-2,.1-2,.5-2,1.1-2,.3-2,.4-2,1-2,1.8-2,2.1-2,2.4-2,2.3-2,2-2,2.5-2,2.2-2,1.9-2,1-2,.4-2,.7-2,.6-2,.5-2,.5-2-.1-2-1.2-2-1.2-2-.9-2-1-2-1.2-2-.5-2-1.6-2-2-2-2.3-2-1.8-2-2.1-2-1.5-2-1.3-2-.5-2-.5-2-1.2-2-.8-2-.8-2-.5-2-.5-2-1-2-.2-2-.1-2,.2-2,.1-2-.3-2-.1-2,.5-2,.4-2,0-2,0-2-.5-2,.4-2,.9-2,.1-2,.6-2,.7-2,.3-2,1.1-2,.5-2,1.3-2,1.5-2,1.1-2,1.9-2,1.6-2,1.3-2,1.1-2,1.2-2,1.2-2,.7-2,.2-2-1-2,0-2-.1-2-.7-2-.7-2-.2-2-.6-2,.2-2-.7-2-.9-2-.1-2-.7-2,.1-2,0-2,.3-2-.3-2-1-2-.3-2-.4-2-1.1-2-1.3-2-.2-2-.6-2-1-2-.8-2-.4-2-1.1-2-.3-2-.2-2,.7-2,.1-2,.3-2,.4-2,0-2,0-2,.3-2,.3-2,.6-2,.6-2-.1-2-.2-2-.4-2,.5-2,.5-2,.1-2,.3-2-.2-2,.4-2,0-2-.1-2,.2-2,.3-2-.1-2-.1-2,.6-2,.6-2,.7-2-.1-2-.3-2-.2-2-.5-2,.1-2,.2-2-.4-2,.4-2,.3-2,.2-2,.5-2,.3-2-.1-2,0-2-.3-2,.4-2-.3-2,.2-2-.6-2,.3-2,.4-2,.1-2,.3-2-.2-2-.6-2,0-2-1-2,.3-2,.7-2-.9-2,.4-2-2.1-2,.4-2-1.6-2-1.6-2-1.5-2-1.9-2-3.2-2-1.6-2-2.7-2-1.3-2-.1-2-.3-2,0-2,.5-2,1.6-2-.8-2-.7-2-5.4-2-.5-2,.3-2-.4-2-.6-2-.1-2,.3-2-.7-2,.1-2,.2-2-.5-2,.2-2-.1-2-.5-2,.3-2,0-2,.3-2,.2-2,.8-2,.9-2,.2-2,1.4-2,2.6-2,2.2-2,1.3-2,.7-2,1.6-2,1-2,1.5-2,.5-2,1.5-2,1.3-2,1.7-2,1.9-2-.6-2-.3-2-.7-2,0-2,.1-2-.4-2,0-2,.5-2-.5-2,.2-2-.5-2-.1-2,.3-2-.2-2-.5-2,.2-2-.4-2-.6-2,.5-2,.3-2-.2-2,1-2-.5-2-3.2-2,.4-2,1.5Z" fill="#e2def0"/><path d="M1166.6,191.5l2-1.5 2-.4 2,3.2 2,.5 2-1 2,.2 2-.3 2-.5 2,.6 2,.4 2-.2 2,.5 2,.2 2-.3 2,.1 2,.5 2-.2 2,.5 2-.5 2,0 2,.4 2-.1 2,0 2,.7 2,.3 2,.6 2-1.9 2-1.7 2-1.3 2-1.5 2-.5 2-1.5 2-1 2-1.6 2-.7 2-1.3 2-2.2 2-2.6 2-1.4 2-.2 2-.9 2-.8 2-.2 2-.3 2,0 2-.3 2,.5 2,.1 2-.2 2,.5 2-.2 2-.1 2,.7 2-.3 2,.1 2,.6 2,.4 2-.3 2,.5 2,5.4 2,.7 2,.8 2-1.6 2-.5 2,0 2,.3 2,.1 2,1.3 2,2.7 2,1.6 2,3.2 2,1.9 2,1.5 2,1.6 2,1.6 2-.4 2,2.1 2-.4 2,.9 2-.7 2-.3 2,1 2,0 2,.6 2,.2 2-.3 2-.1 2-.4 2-.3 2,.6 2-.2 2,.3 2-.4 2,.3 2,0 2,.1 2-.3 2-.5 2-.2 2-.3 2-.4 2,.4 2-.2 2-.1 2,.5 2,.2 2,.3 2,.1 2-.7 2-.6 2-.6 2,.1 2,.1 2-.3 2-.2 2,.1 2,0 2-.4 2,.2 2-.3 2-.1 2-.5 2-.5 2,.4 2,.2 2,.1 2-.6 2-.6 2-.3 2-.3 2,0 2,0 2-.4 2-.3 2-.1 2-.7 2,.2 2,.3 2,1.1 2,.4 2,.8 2,1 2,.6 2,.2 2,1.3 2,1.1 2,.4 2,.3 2,1 2,.3 2-.3 2,0 2-.1 2,.7 2,.1 2,.9 2,.7 2-.2 2,.6 2,.2 2,.7 2,.7 2,.1 2,0 2,1 2-.2 2-.7 2-1.2 2-1.2 2-1.1 2-1.3 2-1.6 2-1.9 2-1.1 2-1.5 2-1.3 2-.5 2-1.1 2-.3 2-.7 2-.6 2-.1 2-.9 2-.4 2,.5 2,0 2,0 2-.4 2-.5 2,.1 2,.3 2-.1 2-.2 2,.1 2,.2 2,1 2,.5 2,.5 2,.8 2,.8 2,1.2 2,.5 2,.5 2,1.3 2,1.5 2,2.1 2,1.8 2,2.3 2,2 2,1.6 2,.5 2,1.2 2,1 2,.9 2,1.2 2,1.2 2,.1 2-.5 2-.5 2-.6 2-.7 2-.4 2-1 2-1.9 2-2.2 2-2.5 2-2 2-2.3 2-2.4 2-2.1 2-1.8 2-1 2-.4 2-.3 2-1.1 2-.5 2-.1 2-.3 2-.6 2-.1 2-.1 2-.4 2,0 2,0 2-.1 2,.1 2,0 2,.3 2,.3 2-.1 2,0 2-.1 2,0 2,1.2 2,1.1 2,.4 2,.4 2,.9 2,.7 2,.7 2-.2 2,.5 2,.5 2,.5 2,.2 2,.1 2,1 2,.3 2,.4 2,.2 2-.3 2,.3 2-.5 2-.7 2,0 2,0 2,.2 2,0 2,.1 2,.2 2-.5 2-.3 2-.8 2-.5 2-.3 2-.8 2-.1 2-.3 2,.2 2,.8 2-.3 2-.3 2,.3 2,0 2,.6 2-.5 2,.6 2,.5 2,.3 2-.1 2-.3 2,.2 2,0 2-.1 2-.2 2,0 2,.2 2,.4 2,.4 2-.5 2-.3 2,.6 2,1.4 2,1.4 2,2.1 1.4,1.2 0,2.1-1.4-1.8-2-2.7-2-1.4-2-1.1-2-.1-2,.5-2-.2-2,.4-2-.6-2,.2-2-.4-2-.2-2-.1-2,.6-2,.5-2-.5-2,.1-2,.3-2,.3-2-.5-2-.2-2,.2-2-.4-2-.4-2-.4-2,.1-2-.4-2,0-2-.1-2,.2-2,.4-2,.2-2,.2-2,.2-2-.4-2,.6-2-.3-2,.4-2,.5-2,.7-2,.4-2-.1-2,.1-2,.7-2-.4-2,0-2-.9-2-.1-2-.7-2-.4-2-.9-2-.7-2-.3-2-.6-2,.1-2-.3-2,.2-2-.1-2-.8-2-.5-2-.8-2-.9-2-.4-2,0-2-.7-2-.4-2-.7-2-.4-2,.5-2,.6-2,.4-2-.2-2-.2-2,.6-2,.2-2-.4-2-.2-2,.5-2,.1-2,.2-2,.5-2,1-2,.8-2,.9-2,.4-2,1.7-2,2.6-2,2.8-2,2.7-2,2.6-2,1.9-2,2.4-2,2.9-2,.6-2,.4-2,.1-2,.5-2-.3-2,0-2-.3-2-.5-2-1-2-1.5-2-.7-2-1.6-2-1.2-2-1.9-2-2-2-2-2-1.7-2-1.8-2-1.8-2-1-2-.8-2-.7-2-1.4-2-.3-2-.4-2-.7-2-.4-2-.5-2-.1-2-.2-2-.7-2,.1-2,.1-2,.5-2,.2-2,0-2,.3-2,0-2,.2-2,.4-2,.4-2,1-2,.5-2,.2-2,.3-2,.3-2,1.3-2,1.7-2,1.3-2,1.4-2,1.2-2,1-2,1.1-2,1.3-2,2-2,.8-2,.6-2,0-2-.8-2-.4-2-.6-2-.4-2-.2-2-.7-2-.1-2,0-2-1-2-.6-2,.1-2-.2-2-.5-2,.2-2-.1-2-.2-2-.7-2-.8-2-.8-2-.4-2-.3-2-.8-2-1.3-2-.5-2-.6-2-.2-2-.9-2-.6-2,.6-2,.1-2,.9-2,.4-2,.2-2-.1-2-.3-2,.4-2,.7-2-.3-2-.4-2,.1-2,.4-2,.3-2,.9-2-.3-2-.2-2,0-2,0-2-.4-2,.5-2,.2-2-.2-2,.3-2-.1-2,.4-2-.4-2,.6-2,.6-2,.5-2,.1-2-.4-2,.1-2,.5-2,.4-2,0-2-.4-2,.7-2-.2-2,0-2,.6-2-.1-2,.6-2-.2-2-.5-2-.2-2,.2-2,.6-2-.2-2-.1-2-.2-2,.3-2,.2-2,1.1-2-.7-2-1-2-.1-2-1-2-.5-2-.9-2-1.3-2-.4-2-1.6-2-1.6-2-1.5-2-1.9-2-2.2-2-1.6-2-.9-2-2.9-2,.3-2-.8-2-.1-2,.4-2,1.6-2,.8-2-1.8-2-4.5-2-.7-2-.8-2,.5-2-.3-2-.4-2-.1-2-.7-2-.2-2,.3-2-.1-2,.3-2-.2-2-.3-2,.3-2-.2-2,.3-2-.1-2,.5-2,1.1-2,.7-2,1.5-2,2.5-2,1.6-2,1.7-2,.8-2,.6-2,1.5-2,1.6-2,1.4-2,1.1-2,1.2-2,1.4-2,1.4-2-.2-2-.8-2,.2-2-.2-2-.5-2,0-2,.4-2-.4-2,.1-2,.3-2-.1-2,.1-2-.4-2-.1-2,.3-2,0-2-.1-2,.7-2-.2-2,.2-2-.3-2,.5-2-.3-2-3.7-2,.5-2,1Z" fill="#dcebd8"/><path d="M1166.6,193.1l2-1 2-.5 2,3.7 2,.3 2-.5 2,.3 2-.2 2,.2 2-.7 2,.1 2,0 2-.3 2,.1 2,.4 2-.1 2,.1 2-.3 2-.1 2,.4 2-.4 2,0 2,.5 2,.2 2-.2 2,.8 2,.2 2-1.4 2-1.4 2-1.2 2-1.1 2-1.4 2-1.6 2-1.5 2-.6 2-.8 2-1.7 2-1.6 2-2.5 2-1.5 2-.7 2-1.1 2-.5 2,.1 2-.3 2,.2 2-.3 2,.3 2,.2 2-.3 2,.1 2-.3 2,.2 2,.7 2,.1 2,.4 2,.3 2-.5 2,.8 2,.7 2,4.5 2,1.8 2-.8 2-1.6 2-.4 2,.1 2,.8 2-.3 2,2.9 2,.9 2,1.6 2,2.2 2,1.9 2,1.5 2,1.6 2,1.6 2,.4 2,1.3 2,.9 2,.5 2,1 2,.1 2,1 2,.7 2-1.1 2-.2 2-.3 2,.2 2,.1 2,.2 2-.6 2-.2 2,.2 2,.5 2,.2 2-.6 2,.1 2-.6 2,0 2,.2 2-.7 2,.4 2,0 2-.4 2-.5 2-.1 2,.4 2-.1 2-.5 2-.6 2-.6 2,.4 2-.4 2,.1 2-.3 2,.2 2-.2 2-.5 2,.4 2,0 2,0 2,.2 2,.3 2-.9 2-.3 2-.4 2-.1 2,.4 2,.3 2-.7 2-.4 2,.3 2,.1 2-.2 2-.4 2-.9 2-.1 2-.6 2,.6 2,.9 2,.2 2,.6 2,.5 2,1.3 2,.8 2,.3 2,.4 2,.8 2,.8 2,.7 2,.2 2,.1 2-.2 2,.5 2,.2 2-.1 2,.6 2,1 2,0 2,.1 2,.7 2,.2 2,.4 2,.6 2,.4 2,.8 2,0 2-.6 2-.8 2-2 2-1.3 2-1.1 2-1 2-1.2 2-1.4 2-1.3 2-1.7 2-1.3 2-.3 2-.3 2-.2 2-.5 2-1 2-.4 2-.4 2-.2 2,0 2-.3 2,0 2-.2 2-.5 2-.1 2-.1 2,.7 2,.2 2,.1 2,.5 2,.4 2,.7 2,.4 2,.3 2,1.4 2,.7 2,.8 2,1 2,1.8 2,1.8 2,1.7 2,2 2,2 2,1.9 2,1.2 2,1.6 2,.7 2,1.5 2,1 2,.5 2,.3 2,0 2,.3 2-.5 2-.1 2-.4 2-.6 2-2.9 2-2.4 2-1.9 2-2.6 2-2.7 2-2.8 2-2.6 2-1.7 2-.4 2-.9 2-.8 2-1 2-.5 2-.2 2-.1 2-.5 2,.2 2,.4 2-.2 2-.6 2,.2 2,.2 2-.4 2-.6 2-.5 2,.4 2,.7 2,.4 2,.7 2,0 2,.4 2,.9 2,.8 2,.5 2,.8 2,.1 2-.2 2,.3 2-.1 2,.6 2,.3 2,.7 2,.9 2,.4 2,.7 2,.1 2,.9 2,0 2,.4 2-.7 2-.1 2,.1 2-.4 2-.7 2-.5 2-.4 2,.3 2-.6 2,.4 2-.2 2-.2 2-.2 2-.4 2-.2 2,.1 2,0 2,.4 2-.1 2,.4 2,.4 2,.4 2-.2 2,.2 2,.5 2-.3 2-.3 2-.1 2,.5 2-.5 2-.6 2,.1 2,.2 2,.4 2-.2 2,.6 2-.4 2,.2 2-.5 2,.1 2,1.1 2,1.4 2,2.7 1.4,1.8 0,1.8-1.4-2.2-2-1.8-2-1.7-2-1.2-2,0-2-.3-2-.3-2-.6-2-.2-2,.1-2-.4-2,.5-2,0-2-.4-2,.3-2-.2-2-.2-2,.3-2,.3-2-.4-2-.3-2,.2-2,0-2,.4-2-.3-2-.5-2-.2-2-.3-2,.5-2,.7-2,.2-2,.4-2-.1-2,.2-2,.3-2,.4-2-.3-2,.3-2,.3-2-.2-2,.3-2,.2-2,.1-2,.8-2-.1-2-.3-2-.2-2-.7-2-.5-2-1-2-.1-2-.4-2-.5-2-.1-2-.4-2-.9-2,.2-2-.9-2-.8-2-.5-2-.5-2-1-2-.8-2,0-2-.6-2-.5-2-.3-2-.3-2,.6-2,.3-2,.1-2-.2-2,0-2,.5-2,.1-2-.4-2,.2-2,.1-2,.1-2,.6-2,.9-2,.3-2,1-2,1.1-2,.5-2,1.9-2,2.8-2,2.4-2,2.5-2,2.5-2,2.6-2,2.4-2,2.6-2,.7-2,.8-2,.1-2,0-2,.4-2,.2-2-.9-2-1.5-2-1-2-.8-2-1-2-1.1-2-1.5-2-1.5-2-1.7-2-1.8-2-1.7-2-1.4-2-2.3-2-1.2-2-.5-2,0-2-.9-2-1.1-2-1-2-.8-2-.6-2-1.2-2,.2-2,.1-2-.4-2,0-2,0-2-.1-2-.2-2,.1-2,.3-2,.1-2,.1-2,.3-2,.6-2,.8-2,.5-2,.2-2,.7-2,.7-2,.9-2,1.6-2,1.3-2,1.3-2,1.4-2,1.6-2,1.2-2,1.6-2,1.2-2,1.3-2,1.7-2-.3-2-.5-2-.5-2-.8-2-.7-2,.3-2-.9-2-.1-2-.3-2-.5-2-.2-2-.5-2,.4-2-.6-2-.6-2-.7-2,.2-2-.2-2-.4-2-.6-2-.8-2-.4-2-1.2-2-.8-2-.1-2-1.4-2-.3-2-.5-2,.1-2,.8-2,.1-2,.7-2,.7-2,.4-2,.1-2-.2-2-.4-2-.2-2,.1-2,0-2-.2-2-.3-2,.5-2,.2-2-.1-2,0-2-.1-2,.5-2,.6-2,.4-2,.5-2,.5-2,0-2-.2-2-.5-2,.5-2,.4-2-.5-2-.1-2,.1-2,.4-2,0-2-.3-2,.3-2-.3-2,.4-2,0-2,.5-2,.1-2,.5-2-.7-2,.1-2-.9-2,.3-2,.3-2,0-2,.3-2-.1-2,.6-2-.1-2-.4-2,.4-2,1.3-2-1.1-2-1.1-2-.8-2-1.2-2-.5-2,.8-2-1.9-2-.8-2-.5-2-2.2-2-.5-2-3.1-2-.9-2-3.6-2-1.2-2-1.1-2,.1-2-1.1-2-.9-2,2.9-2,0-2-.2-2-.4-2-6.1-2-.1-2-.5-2-.2-2,.1-2-.1-2-.3-2,.4-2-.5-2,0-2,.2-2,.3-2-.4-2-.3-2,.3-2-.4-2-.4-2,.5-2,.6-2,1.2-2,.3-2,1.3-2,2-2,1.7-2,1.5-2,1.1-2,1.3-2,1.5-2,1.6-2,1.7-2,1.3-2,.8-2,1-2,1.6-2-.5-2,.1-2-.6-2-.2-2-.5-2,.3-2-.5-2,.5-2-.5-2,.2-2,0-2-.4-2,.2-2-.2-2,0-2-.3-2-.1-2,.7-2-.2-2,.2-2-.3-2,.5-2-.3-2-3.2-2,1.2-2,.5Z" fill="#e2ddee"/><path d="M1166.6,193.8l2-.5 2-1.2 2,3.2 2,.3 2-.5 2,.3 2-.2 2,.2 2-.7 2,.1 2,.3 2,0 2,.2 2-.2 2,.4 2,0 2-.2 2,.5 2-.5 2,.5 2-.3 2,.5 2,.2 2,.6 2-.1 2,.5 2-1.6 2-1 2-.8 2-1.3 2-1.7 2-1.6 2-1.5 2-1.3 2-1.1 2-1.5 2-1.7 2-2 2-1.3 2-.3 2-1.2 2-.6 2-.5 2,.4 2,.4 2-.3 2,.3 2,.4 2-.3 2-.2 2,0 2,.5 2-.4 2,.3 2,.1 2-.1 2,.2 2,.5 2,.1 2,6.1 2,.4 2,.2 2,0 2-2.9 2,.9 2,1.1 2-.1 2,1.1 2,1.2 2,3.6 2,.9 2,3.1 2,.5 2,2.2 2,.5 2,.8 2,1.9 2-.8 2,.5 2,1.2 2,.8 2,1.1 2,1.1 2-1.3 2-.4 2,.4 2,.1 2-.6 2,.1 2-.3 2,0 2-.3 2-.3 2,.9 2-.1 2,.7 2-.5 2-.1 2-.5 2,0 2-.4 2,.3 2-.3 2,.3 2,0 2-.4 2-.1 2,.1 2,.5 2-.4 2-.5 2,.5 2,.2 2,0 2-.5 2-.5 2-.4 2-.6 2-.5 2,.1 2,0 2,.1 2-.2 2-.5 2,.3 2,.2 2,0 2-.1 2,.2 2,.4 2,.2 2-.1 2-.4 2-.7 2-.7 2-.1 2-.8 2-.1 2,.5 2,.3 2,1.4 2,.1 2,.8 2,1.2 2,.4 2,.8 2,.6 2,.4 2,.2 2-.2 2,.7 2,.6 2,.6 2-.4 2,.5 2,.2 2,.5 2,.3 2,.1 2,.9 2-.3 2,.7 2,.8 2,.5 2,.5 2,.3 2-1.7 2-1.3 2-1.2 2-1.6 2-1.2 2-1.6 2-1.4 2-1.3 2-1.3 2-1.6 2-.9 2-.7 2-.7 2-.2 2-.5 2-.8 2-.6 2-.3 2-.1 2-.1 2-.3 2-.1 2,.2 2,.1 2,0 2,0 2,.4 2-.1 2-.2 2,1.2 2,.6 2,.8 2,1 2,1.1 2,.9 2,0 2,.5 2,1.2 2,2.3 2,1.4 2,1.7 2,1.8 2,1.7 2,1.5 2,1.5 2,1.1 2,1 2,.8 2,1 2,1.5 2,.9 2-.2 2-.4 2,0 2-.1 2-.8 2-.7 2-2.6 2-2.4 2-2.6 2-2.5 2-2.5 2-2.4 2-2.8 2-1.9 2-.5 2-1.1 2-1 2-.3 2-.9 2-.6 2-.1 2-.1 2-.2 2,.4 2-.1 2-.5 2,0 2,.2 2-.1 2-.3 2-.6 2,.3 2,.3 2,.5 2,.6 2,0 2,.8 2,1 2,.5 2,.5 2,.8 2,.9 2-.2 2,.9 2,.4 2,.1 2,.5 2,.4 2,.1 2,1 2,.5 2,.7 2,.2 2,.3 2,.1 2-.8 2-.1 2-.2 2-.3 2,.2 2-.3 2-.3 2,.3 2-.4 2-.3 2-.2 2,.1 2-.4 2-.2 2-.7 2-.5 2,.3 2,.2 2,.5 2,.3 2-.4 2,0 2-.2 2,.3 2,.4 2-.3 2-.3 2,.2 2,.2 2-.3 2,.4 2,0 2-.5 2,.4 2-.1 2,.2 2,.6 2,.3 2,.3 2,0 2,1.2 2,1.7 2,1.8 1.4,2.2 0,9.2-1.4-2.3-2-2.4-2-1.6-2-2.2-2-.3-2-.3-2,.4-2-.4-2-.2-2-.1-2-.4-2,.1-2,.4-2,.2-2-.2-2-.5-2,0-2,.2-2,.1-2,0-2-.2-2-.1-2-.6-2,.3-2,.5-2-.1-2,.7-2-.3-2-.3-2,.4-2,.7-2,.1-2,.1-2,.8-2,.5-2,0-2-.2-2,.1-2-.1-2-.1-2,.4-2,0-2,0-2-.5-2,.1-2,.3-2-.2-2-.5-2-.4-2-1.1-2-.3-2-1-2-1-2,.1-2-.9-2-.4-2-.9-2-.1-2-.9-2-.8-2-.8-2-.4-2-.5-2-.4-2-.3-2-.3-2-.5-2-.5-2-.2-2,.7-2,0-2,0-2-.4-2,.6-2,.4-2-.1-2,.8-2,0-2,0-2,.9-2,1.6-2,1-2,.9-2,.6-2,.8-2,2-2,2.9-2,2.4-2,2.2-2,1.9-2,2.7-2,2.9-2,2.9-2,1.2-2,.3-2,.6-2,0-2-.2-2,.2-2-.5-2-1-2-1.1-2-1.7-2-.5-2-1.6-2-1.1-2-2-2-2.2-2-2.7-2-2.6-2-2.6-2-1.8-2-1.5-2-.9-2-.6-2-.2-2-.9-2-1.1-2-1-2-.5-2-.9-2,.2-2-.8-2,.1-2-.1-2-.1-2,.5-2,.3-2,.5-2-.3-2,.5-2-.1-2,.6-2,.4-2,.7-2,.2-2,1.2-2,.2-2,.7-2,.4-2,1.7-2,1.8-2,1.7-2,1.5-2,1.8-2,1.6-2,1.4-2,1.4-2,1.8-2,1.3-2,.4-2-.9-2-.9-2-.3-2-1.1-2,0-2-.1-2-.3-2-.9-2-.9-2-.4-2-1.1-2,0-2,0-2-.6-2-.3-2-.2-2-.8-2-.4-2-1.1-2-.4-2-.9-2-.3-2-.7-2-.9-2-1.2-2-1-2-.4-2-.3-2,1-2,1-2,.3-2,.8-2-.2-2,.4-2,.1-2,.4-2,.8-2,.1-2-.3-2,.4-2-.4-2,0-2,.7-2-.3-2,.5-2-.3-2-.5-2,.3-2,.5-2,.7-2,.2-2,.1-2-.3-2,.2-2,.8-2-.3-2,.1-2-.2-2,.2-2,.4-2,.1-2-.3-2-.6-2-.5-2,.4-2-.4-2,.5-2-.2-2,.1-2-.6-2-.2-2,.2-2-.2-2,.2-2-.2-2,0-2,.6-2,.2-2-.5-2-.5-2,.4-2-1.1-2,.1-2-1.5-2,.5-2-.6-2,.1-2-.4-2-.4-2-.8-2-2.4-2-.2-2-2-2-.7-2-1.1-2-2.5-2-3.3-2-1.6-2-1-2,.5-2-1-2,.7-2,1.4-2,1-2-.1-2-5.3-2-.3-2-.5-2,.2-2,.3-2-.2-2-.2-2-.1-2-.4-2-.1-2-.7-2,.3-2-.3-2,.4-2-.6-2,.5-2-.1-2,.2-2,1.3-2,.7-2,1.2-2,.9-2,2.2-2,2.1-2,1-2,.8-2,1.7-2,1.1-2,1.7-2,1.6-2,1.4-2,1.6-2,1.5-2,1.9-2,.1-2-.6-2-.7-2,.2-2-.7-2-.1-2-.3-2-.2-2-.1-2,0-2-.2-2,.4-2,.3-2,.3-2-.4-2-.4-2-.6-2,0-2,.4-2,.1-2-.1-2,1-2-.7-2-3.9-2,1.3-2,1.5Z" fill="#dcecd9"/><path d="M1166.6,202.1l2-1.5 2-1.3 2,3.9 2,.7 2-1 2,.1 2-.1 2-.4 2,0 2,.6 2,.4 2,.4 2-.3 2-.3 2-.4 2,.2 2,0 2,.1 2,.2 2,.3 2,.1 2,.7 2-.2 2,.7 2,.6 2-.1 2-1.9 2-1.5 2-1.6 2-1.4 2-1.6 2-1.7 2-1.1 2-1.7 2-.8 2-1 2-2.1 2-2.2 2-.9 2-1.2 2-.7 2-1.3 2-.2 2,.1 2-.5 2,.6 2-.4 2,.3 2-.3 2,.7 2,.1 2,.4 2,.1 2,.2 2,.2 2-.3 2-.2 2,.5 2,.3 2,5.3 2,.1 2-1 2-1.4 2-.7 2,1 2-.5 2,1 2,1.6 2,3.3 2,2.5 2,1.1 2,.7 2,2 2,.2 2,2.4 2,.8 2,.4 2,.4 2-.1 2,.6 2-.5 2,1.5 2-.1 2,1.1 2-.4 2,.5 2,.5 2-.2 2-.6 2,0 2,.2 2-.2 2,.2 2-.2 2,.2 2,.6 2-.1 2,.2 2-.5 2,.4 2-.4 2,.5 2,.6 2,.3 2-.1 2-.4 2-.2 2,.2 2-.1 2,.3 2-.8 2-.2 2,.3 2-.1 2-.2 2-.7 2-.5 2-.3 2,.5 2,.3 2-.5 2,.3 2-.7 2,0 2,.4 2-.4 2,.3 2-.1 2-.8 2-.4 2-.1 2-.4 2,.2 2-.8 2-.3 2-1 2-1 2,.3 2,.4 2,1 2,1.2 2,.9 2,.7 2,.3 2,.9 2,.4 2,1.1 2,.4 2,.8 2,.2 2,.3 2,.6 2,0 2,0 2,1.1 2,.4 2,.9 2,.9 2,.3 2,.1 2,0 2,1.1 2,.3 2,.9 2,.9 2-.4 2-1.3 2-1.8 2-1.4 2-1.4 2-1.6 2-1.8 2-1.5 2-1.7 2-1.8 2-1.7 2-.4 2-.7 2-.2 2-1.2 2-.2 2-.7 2-.4 2-.6 2,.1 2-.5 2,.3 2-.5 2-.3 2-.5 2,.1 2,.1 2-.1 2,.8 2-.2 2,.9 2,.5 2,1 2,1.1 2,.9 2,.2 2,.6 2,.9 2,1.5 2,1.8 2,2.6 2,2.6 2,2.7 2,2.2 2,2 2,1.1 2,1.6 2,.5 2,1.7 2,1.1 2,1 2,.5 2-.2 2,.2 2,0 2-.6 2-.3 2-1.2 2-2.9 2-2.9 2-2.7 2-1.9 2-2.2 2-2.4 2-2.9 2-2 2-.8 2-.6 2-.9 2-1 2-1.6 2-.9 2,0 2,0 2-.8 2,.1 2-.4 2-.6 2,.4 2,0 2,0 2-.7 2,.2 2,.5 2,.5 2,.3 2,.3 2,.4 2,.5 2,.4 2,.8 2,.8 2,.9 2,.1 2,.9 2,.4 2,.9 2-.1 2,1 2,1 2,.3 2,1.1 2,.4 2,.5 2,.2 2-.3 2-.1 2,.5 2,0 2,0 2-.4 2,.1 2,.1 2-.1 2,.2 2,0 2-.5 2-.8 2-.1 2-.1 2-.7 2-.4 2,.3 2,.3 2-.7 2,.1 2-.5 2-.3 2,.6 2,.1 2,.2 2,0 2-.1 2-.2 2,0 2,.5 2,.2 2-.2 2-.4 2-.1 2,.4 2,.1 2,.2 2,.4 2-.4 2,.3 2,.3 2,2.2 2,1.6 2,2.4 1.4,2.3 0,1.5-1.4-2-2-2.8-2-1.7-2-1.9-2-.6-2-.5-2-.5-2-.3-2-.5-2,.2-2,.1-2,.3-2-.1-2-.1-2,.4-2,.6-2-.3-2,.2-2-.3-2-.4-2-.7-2-.1-2-.6-2,.2-2,.3-2,.4-2,.2-2-.3-2-.3-2,.4-2,.7-2,.3-2,.5-2,.2-2,.5-2,0-2-.2-2,.2-2,0-2-.1-2,.2-2,.1-2,.6-2,.8-2,.1-2,.1-2-.6-2-1.3-2-1-2-1.1-2-.3-2-1-2-1-2,.1-2-.9-2-.4-2-.9-2-.1-2-.9-2-.8-2-.8-2-.4-2-.5-2-.4-2-.3-2-.3-2-.5-2-.5-2,.4-2,.2-2,.9-2-.2-2,.5-2-.1-2-.1-2-.4-2,.6-2,0-2,0-2,.9-2,1.6-2,1-2,.9-2,.6-2,.8-2,2-2,2.9-2,2.7-2,2.3-2,3.4-2,2.7-2,2.4-2,2.3-2,1.2-2-.2-2,.4-2-.1-2,.3-2,0-2-.8-2-1-2-1.1-2-1.7-2-.5-2-1.6-2-1.1-2-2-2-2.2-2-2.7-2-2.5-2-2.6-2-1.9-2-.7-2-1.1-2-.2-2-.9-2-.5-2-1.1-2-1.3-2-.9-2-.6-2,0-2,.1-2,.3-2-.3-2-.1-2,.5-2,.5-2,0-2,0-2-.1-2,.7-2,.5-2,.8-2,.6-2,.7-2,.4-2,.4-2,.9-2,.9-2,1.4-2,2.2-2,1.3-2,1.3-2,1.1-2,1.9-2,1.5-2,1.7-2,1.6-2,1.2-2-.5-2-.9-2-.7-2-.3-2-.3-2,0-2-.8-2-.6-2-.5-2-.4-2-.9-2,0-2,0-2-.6-2,0-2,.1-2-.4-2-.9-2-.5-2-.9-2-.8-2-.8-2-1.3-2-1-2-.6-2-.2-2-1.1-2-.7-2-.3-2,.3-2,.6-2,1.1-2,.8-2,.5-2-.3-2,.3-2,.1-2-.1-2,.5-2-.1-2,.4-2,0-2,.5-2,.1-2-.3-2,.3-2,.5-2-.1-2,0-2,0-2,.2-2-.2-2,.6-2,.5-2-.1-2,0-2-.2-2,0-2-.6-2,.3-2,.3-2,.1-2-.3-2-.6-2,0-2,.3-2,.1-2,.2-2,.5-2-.6-2,.1-2,.2-2-.7-2-.8-2,0-2,0-2,.3-2,.1-2,.4-2-.3-2,.3-2-.7-2-.3-2,.8-2,.5-2-.7-2-1-2-.4-2,1.2-2,0-2-1.4-2-1.4-2-2.1-2-.7-2-1.9-2-2.8-2-2.4-2-3.5-2-1.9-2-1-2,.8-2-.4-2,2.3-2,.3-2-.4-2-.1-2-4.6-2-.7-2-.2-2,.4-2-.5-2-.2-2-.2-2,.2-2,.6-2-.2-2-.1-2-.4-2-.3-2,0-2,0-2-.2-2-.3-2,.7-2,.4-2,1.2-2,1.2-2,.9-2,2-2,2.1-2,1.6-2,1-2,1.4-2,1.8-2,1.1-2,1.6-2,1.5-2,2.1-2,1.6-2,1.4-2-.9-2-.4-2-.2-2-.6-2-.5-2,.2-2,0-2,.2-2-.4-2,0-2-.7-2,.3-2,.5-2-.1-2,.5-2-.3-2,.5-2-.5-2,.1-2-.5-2,0-2,1.3-2-.5-2-4.2-2,.7-2,1.6Z" fill="#e2ddee"/><path d="M1166.6,202.7l2-1.6 2-.7 2,4.2 2,.5 2-1.3 2,0 2,.5 2-.1 2,.5 2-.5 2,.3 2-.5 2,.1 2-.5 2-.3 2,.7 2,0 2,.4 2-.2 2,0 2-.2 2,.5 2,.6 2,.2 2,.4 2,.9 2-1.4 2-1.6 2-2.1 2-1.5 2-1.6 2-1.1 2-1.8 2-1.4 2-1 2-1.6 2-2.1 2-2 2-.9 2-1.2 2-1.2 2-.4 2-.7 2,.3 2,.2 2,0 2,0 2,.3 2,.4 2,.1 2,.2 2-.6 2-.2 2,.2 2,.2 2,.5 2-.4 2,.2 2,.7 2,4.6 2,.1 2,.4 2-.3 2-2.3 2,.4 2-.8 2,1 2,1.9 2,3.5 2,2.4 2,2.8 2,1.9 2,.7 2,2.1 2,1.4 2,1.4 2,0 2-1.2 2,.4 2,1 2,.7 2-.5 2-.8 2,.3 2,.7 2-.3 2,.3 2-.4 2-.1 2-.3 2,0 2,0 2,.8 2,.7 2-.2 2-.1 2,.6 2-.5 2-.2 2-.1 2-.3 2,0 2,.6 2,.3 2-.1 2-.3 2-.3 2,.6 2,0 2,.2 2,0 2,.1 2-.5 2-.6 2,.2 2-.2 2,0 2,0 2,.1 2-.5 2-.3 2,.3 2-.1 2-.5 2,0 2-.4 2,.1 2-.5 2,.1 2-.1 2-.3 2,.3 2-.5 2-.8 2-1.1 2-.6 2-.3 2,.3 2,.7 2,1.1 2,.2 2,.6 2,1 2,1.3 2,.8 2,.8 2,.9 2,.5 2,.9 2,.4 2-.1 2,0 2,.6 2,0 2,0 2,.9 2,.4 2,.5 2,.6 2,.8 2,0 2,.3 2,.3 2,.7 2,.9 2,.5 2-1.2 2-1.6 2-1.7 2-1.5 2-1.9 2-1.1 2-1.3 2-1.3 2-2.2 2-1.4 2-.9 2-.9 2-.4 2-.4 2-.7 2-.6 2-.8 2-.5 2-.7 2,.1 2,0 2,0 2-.5 2-.5 2,.1 2,.3 2-.3 2-.1 2,0 2,.6 2,.9 2,1.3 2,1.1 2,.5 2,.9 2,.2 2,1.1 2,.7 2,1.9 2,2.6 2,2.5 2,2.7 2,2.2 2,2 2,1.1 2,1.6 2,.5 2,1.7 2,1.1 2,1 2,.8 2,0 2-.3 2,.1 2-.4 2,.2 2-1.2 2-2.3 2-2.4 2-2.7 2-3.4 2-2.3 2-2.7 2-2.9 2-2 2-.8 2-.6 2-.9 2-1 2-1.6 2-.9 2,0 2,0 2-.6 2,.4 2,.1 2,.1 2-.5 2,.2 2-.9 2-.2 2-.4 2,.5 2,.5 2,.3 2,.3 2,.4 2,.5 2,.4 2,.8 2,.8 2,.9 2,.1 2,.9 2,.4 2,.9 2-.1 2,1 2,1 2,.3 2,1.1 2,1 2,1.3 2,.6 2-.1 2-.1 2-.8 2-.6 2-.1 2-.2 2,.1 2,0 2-.2 2,.2 2,0 2-.5 2-.2 2-.5 2-.3 2-.7 2-.4 2,.3 2,.3 2-.2 2-.4 2-.3 2-.2 2,.6 2,.1 2,.7 2,.4 2,.3 2-.2 2,.3 2-.6 2-.4 2,.1 2,.1 2-.3 2-.1 2-.2 2,.5 2,.3 2,.5 2,.5 2,.6 2,1.9 2,1.7 2,2.8 1.4,2 0,6.8-1.4-1.3-2-2.7-2-2.6-2-1.4-2-1.2-2-.5-2-.5-2-.2-2-.5-2,.1-2,.4-2-.2-2-.8-2-.2-2-.2-2,.2-2,.2-2-.3-2,.1-2,.1-2-.2-2,.3-2,.3-2-.4-2-.1-2,.3-2,0-2,.4-2,.5-2-.1-2,.2-2,.9-2-.3-2,0-2-.2-2,.1-2,0-2,.3-2,.4-2,.3-2-.3-2,.2-2,.2-2-.4-2,.2-2,.4-2-.5-2-.9-2-.8-2-1.4-2-.6-2-1.4-2-.7-2-1.5-2-.5-2-1.4-2-.4-2-.4-2-.3-2-.8-2-.9-2-.6-2-1.4-2,0-2,.2-2,.3-2-.3-2-.2-2-.1-2,.5-2-.4-2,.4-2,.8-2,.5-2,.1-2-.2-2-.2-2,.5-2-.1-2,1.7-2,.8-2,1.3-2,.6-2,1.5-2,.9-2,2.1-2,2.7-2,3-2,3.1-2,3.4-2,3.4-2,2.6-2,3.3-2,.7-2-.7-2-.2-2,.2-2,.3-2-.2-2-.8-2-1-2-.9-2-1.1-2-1.5-2-1.4-2-1.6-2-2-2-2.9-2-3.3-2-2.6-2-2.4-2-3-2-.4-2-.5-2-.3-2-1-2-1-2-.9-2-1-2-.7-2-.3-2-.7-2-.5-2,.2-2,.6-2-.4-2,.3-2,.4-2,.8-2-.3-2,0-2-.3-2,1-2,.4-2,.8-2,.7-2,.8-2,1.4-2,.4-2,1.2-2,1.9-2,1.7-2,2-2,1.4-2,2.4-2,1.9-2,1.6-2,1.4-2,1.5-2,1.3-2,.4-2-1.3-2-1.3-2-.6-2,0-2-.2-2,0-2,0-2-.4-2-.8-2-.6-2-.6-2-.7-2-.3-2-.9-2-.3-2,.2-2-.3-2-.4-2-.4-2-.2-2-.7-2-.4-2-1-2-.1-2-.9-2-.3-2-.9-2,.1-2,1.6-2,1-2,.8-2,.4-2,0-2,.1-2-.2-2,.1-2,0-2,.3-2,.2-2,.2-2,0-2-.3-2,.5-2,.5-2,.8-2-.1-2-.5-2-.1-2,.5-2-.2-2,.2-2,.3-2,.6-2-.2-2-.3-2-.3-2,.2-2,0-2-.3-2-.9-2,.2-2-.2-2,.1-2-.5-2,.3-2,0-2-.5-2-.7-2,.3-2-.7-2,.2-2-.2-2-.1-2-.2-2,.4-2,.5-2-.3-2-.1-2-.2-2,0-2-.1-2-.2-2-1.1-2,1.3-2-1.1-2-1.3-2-1.2-2,.8-2-1.2-2-.6-2-2.3-2-.7-2-2-2-3.6-2-1.7-2-3.5-2-1.6-2-1.7-2,.5-2-.3-2,.4-2,.7-2-.1-2,.6-2-2.5-2-2.8-2-.3-2,.4-2-.4-2-.7-2,.3-2,.5-2-.3-2-.2-2-.4-2-.5-2-.1-2,.2-2-.7-2,.1-2,.4-2,0-2-.5-2,1.2-2,1.2-2,1-2,1.1-2,2.4-2,1.8-2,1.1-2,1.2-2,1.7-2,2.1-2,1.4-2,2.2-2,1.8-2,1.5-2,1.6-2,1.6-2-.7-2-.3-2,.2-2-.4-2,.2-2,0-2-.7-2,.2-2,.3-2-.2-2,0-2-.5-2-.3-2,0-2,.4-2-.1-2-.6-2,.4-2,0-2-.5-2-.6-2,1.7-2-.1-2-5-2,1.5-2,1.8Z" fill="#dcebd9"/><path d="M1166.6,209.1l2-1.8 2-1.5 2,5 2,.1 2-1.7 2,.6 2,.5 2,0 2-.4 2,.6 2,.1 2-.4 2,0 2,.3 2,.5 2,0 2,.2 2-.3 2-.2 2,.7 2,0 2-.2 2,.4 2-.2 2,.3 2,.7 2-1.6 2-1.6 2-1.5 2-1.8 2-2.2 2-1.4 2-2.1 2-1.7 2-1.2 2-1.1 2-1.8 2-2.4 2-1.1 2-1 2-1.2 2-1.2 2,.5 2,0 2-.4 2-.1 2,.7 2-.2 2,.1 2,.5 2,.4 2,.2 2,.3 2-.5 2-.3 2,.7 2,.4 2-.4 2,.3 2,2.8 2,2.5 2-.6 2,.1 2-.7 2-.4 2,.3 2-.5 2,1.7 2,1.6 2,3.5 2,1.7 2,3.6 2,2 2,.7 2,2.3 2,.6 2,1.2 2-.8 2,1.2 2,1.3 2,1.1 2-1.3 2,1.1 2,.2 2,.1 2,0 2,.2 2,.1 2,.3 2-.5 2-.4 2,.2 2,.1 2,.2 2-.2 2,.7 2-.3 2,.7 2,.5 2,0 2-.3 2,.5 2-.1 2,.2 2-.2 2,.9 2,.3 2,0 2-.2 2,.3 2,.3 2,.2 2-.6 2-.3 2-.2 2,.2 2-.5 2,.1 2,.5 2,.1 2-.8 2-.5 2-.5 2,.3 2,0 2-.2 2-.2 2-.3 2,0 2-.1 2,.2 2-.1 2,0 2-.4 2-.8 2-1 2-1.6 2-.1 2,.9 2,.3 2,.9 2,.1 2,1 2,.4 2,.7 2,.2 2,.4 2,.4 2,.3 2-.2 2,.3 2,.9 2,.3 2,.7 2,.6 2,.6 2,.8 2,.4 2,0 2,0 2,.2 2,0 2,.6 2,1.3 2,1.3 2-.4 2-1.3 2-1.5 2-1.4 2-1.6 2-1.9 2-2.4 2-1.4 2-2 2-1.7 2-1.9 2-1.2 2-.4 2-1.4 2-.8 2-.7 2-.8 2-.4 2-1 2,.3 2,0 2,.3 2-.8 2-.4 2-.3 2,.4 2-.6 2-.2 2,.5 2,.7 2,.3 2,.7 2,1 2,.9 2,1 2,1 2,.3 2,.5 2,.4 2,3 2,2.4 2,2.6 2,3.3 2,2.9 2,2 2,1.6 2,1.4 2,1.5 2,1.1 2,.9 2,1 2,.8 2,.2 2-.3 2-.2 2,.2 2,.7 2-.7 2-3.3 2-2.6 2-3.4 2-3.4 2-3.1 2-3 2-2.7 2-2.1 2-.9 2-1.5 2-.6 2-1.3 2-.8 2-1.7 2,.1 2-.5 2,.2 2,.2 2-.1 2-.5 2-.8 2-.4 2,.4 2-.5 2,.1 2,.2 2,.3 2-.3 2-.2 2,0 2,1.4 2,.6 2,.9 2,.8 2,.3 2,.4 2,.4 2,1.4 2,.5 2,1.5 2,.7 2,1.4 2,.6 2,1.4 2,.8 2,.9 2,.5 2-.4 2-.2 2,.4 2-.2 2-.2 2,.3 2-.3 2-.4 2-.3 2,0 2-.1 2,.2 2,0 2,.3 2-.9 2-.2 2,.1 2-.5 2-.4 2,0 2-.3 2,.1 2,.4 2-.3 2-.3 2,.2 2-.1 2-.1 2,.3 2-.2 2-.2 2,.2 2,.2 2,.8 2,.2 2-.4 2-.1 2,.5 2,.2 2,.5 2,.5 2,1.2 2,1.4 2,2.6 2,2.7 1.4,1.3 0,1.7-1.4-1.7-2-2.6-2-2.7-2-2.4-2-1.1-2,0-2,.2-2-.4-2,.1-2-.1-2-.1-2,.4-2,.4-2-.4-2-.1-2-.4-2,.1-2-.2-2-.2-2,.3-2,.3-2,.1-2-.4-2-.7-2,.3-2-.2-2,.4-2,.5-2-.1-2,1-2,.2-2,.7-2,.6-2-.1-2-.4-2-.1-2-.3-2-.4-2,.3-2,.4-2,.3-2-.1-2,.3-2,.5-2-.4-2-.1-2-.7-2-1.4-2-.9-2-.9-2-1.4-2-.6-2-1.3-2-1.1-2-.9-2-.7-2-.7-2-1.1-2-.4-2-.9-2-.4-2-.3-2-.8-2-.5-2,.4-2,.2-2-.3-2-.4-2-.2-2,.5-2,.1-2,.6-2-.1-2-.2-2,.4-2-.1-2,.2-2-.2-2,.7-2,1.7-2,1.1-2,.6-2,1.5-2,1.2-2,1.3-2,1.9-2,2.7-2,3.2-2,2.7-2,2.6-2,3.3-2,3.3-2,3.3-2,1.4-2,.2-2,0-2,.1-2,.2-2-.2-2-1.1-2-1-2-2-2-2.1-2-1.2-2-.9-2-2.1-2-2.5-2-2.8-2-2.7-2-2.3-2-3.3-2-2.6-2-.5-2-.4-2-.5-2-1-2-.9-2-.1-2-.3-2-.7-2-1-2-.5-2-.1-2-.4-2,.4-2,.4-2-.1-2,.6-2-.3-2-.1-2,0-2,0-2,.5-2,.6-2,.2-2,.9-2,1.1-2,.6-2,1.3-2,1.2-2,2.1-2,1.8-2,1.5-2,1.9-2,1.7-2,1.4-2,1.6-2,1.5-2,1.7-2,1.5-2,.3-2-.5-2-.6-2-.6-2-.2-2,.1-2-.7-2-.5-2-.2-2-.6-2,0-2-.7-2-.7-2-.1-2,.2-2-.7-2,0-2,0-2-.8-2-1.1-2-.1-2-.7-2-.8-2-.8-2-.6-2,0-2-.8-2-.8-2,.2-2,.8-2,.7-2,1.5-2,.4-2,.1-2,.3-2,.5-2,.6-2,0-2,.7-2,.2-2-.2-2,.9-2,.6-2-.2-2-.3-2-.2-2,0-2-.1-2,.4-2,.6-2,.2-2,.1-2-.1-2-.3-2,.1-2,.3-2-.4-2-.9-2-.1-2-.1-2,.2-2,.3-2-.7-2,.4-2,.1-2-.6-2,.3-2-.5-2-.5-2-.3-2-.8-2-.3-2-.4-2-.5-2,.1-2,.1-2,.3-2-.6-2-.4-2-.3-2,.1-2-.2-2-.6-2-.8-2,1-2-.3-2-.9-2-.7-2-.3-2-.8-2-1.6-2-1-2-2-2-1.7-2-2.1-2-1.5-2-3.1-2-2.4-2-2.4-2,.3-2-.5-2,1.5-2,2.3-2-.7-2,.9-2-1.7-2-3.7-2-.8-2-.6-2-.1-2-.6-2-.2-2-.1-2,.2-2-.7-2,.4-2-.3-2,0-2-.7-2-.3-2-.7-2,.1-2,.3-2-.1-2,1.2-2,1.5-2,1.8-2,.9-2,2-2,2.5-2,1.9-2,.9-2,2.2-2,1.5-2,1.6-2,1.3-2,1.4-2,2.1-2,1.7-2,1.8-2-.7-2-.4-2-.2-2-.6-2-.3-2,.2-2-.3-2-.4-2,.4-2,.3-2-.1-2-.7-2,.3-2,0-2-.4-2,.2-2,0-2,0-2,.4-2-.3-2-.1-2,.7-2,0-2-4.4-2,1.7-2,1Z" fill="#dcecdc"/><path d="M1166.6,210.9l2-1 2-1.7 2,4.4 2,0 2-.7 2,.1 2,.3 2-.4 2,0 2,0 2-.2 2,.4 2,0 2-.3 2,.7 2,.1 2-.3 2-.4 2,.4 2,.3 2-.2 2,.3 2,.6 2,.2 2,.4 2,.7 2-1.8 2-1.7 2-2.1 2-1.4 2-1.3 2-1.6 2-1.5 2-2.2 2-.9 2-1.9 2-2.5 2-2 2-.9 2-1.8 2-1.5 2-1.2 2,.1 2-.3 2-.1 2,.7 2,.3 2,.7 2,0 2,.3 2-.4 2,.7 2-.2 2,.1 2,.2 2,.6 2,.1 2,.6 2,.8 2,3.7 2,1.7 2-.9 2,.7 2-2.3 2-1.5 2,.5 2-.3 2,2.4 2,2.4 2,3.1 2,1.5 2,2.1 2,1.7 2,2 2,1 2,1.6 2,.8 2,.3 2,.7 2,.9 2,.3 2-1 2,.8 2,.6 2,.2 2-.1 2,.3 2,.4 2,.6 2-.3 2-.1 2-.1 2,.5 2,.4 2,.3 2,.8 2,.3 2,.5 2,.5 2-.3 2,.6 2-.1 2-.4 2,.7 2-.3 2-.2 2,.1 2,.1 2,.9 2,.4 2-.3 2-.1 2,.3 2,.1 2-.1 2-.2 2-.6 2-.4 2,.1 2,0 2,.2 2,.3 2,.2 2-.6 2-.9 2,.2 2-.2 2-.7 2,0 2-.6 2-.5 2-.3 2-.1 2-.4 2-1.5 2-.7 2-.8 2-.2 2,.8 2,.8 2,0 2,.6 2,.8 2,.8 2,.7 2,.1 2,1.1 2,.8 2,0 2,0 2,.7 2-.2 2,.1 2,.7 2,.7 2,0 2,.6 2,.2 2,.5 2,.7 2-.1 2,.2 2,.6 2,.6 2,.5 2-.3 2-1.5 2-1.7 2-1.5 2-1.6 2-1.4 2-1.7 2-1.9 2-1.5 2-1.8 2-2.1 2-1.2 2-1.3 2-.6 2-1.1 2-.9 2-.2 2-.6 2-.5 2,0 2,0 2,.1 2,.3 2-.6 2,.1 2-.4 2-.4 2,.4 2,.1 2,.5 2,1 2,.7 2,.3 2,.1 2,.9 2,1 2,.5 2,.4 2,.5 2,2.6 2,3.3 2,2.3 2,2.7 2,2.8 2,2.5 2,2.1 2,.9 2,1.2 2,2.1 2,2 2,1 2,1.1 2,.2 2-.2 2-.1 2,0 2-.2 2-1.4 2-3.3 2-3.3 2-3.3 2-2.6 2-2.7 2-3.2 2-2.7 2-1.9 2-1.3 2-1.2 2-1.5 2-.6 2-1.1 2-1.7 2-.7 2,.2 2-.2 2,.1 2-.4 2,.2 2,.1 2-.6 2-.1 2-.5 2,.2 2,.4 2,.3 2-.2 2-.4 2,.5 2,.8 2,.3 2,.4 2,.9 2,.4 2,1.1 2,.7 2,.7 2,.9 2,1.1 2,1.3 2,.6 2,1.4 2,.9 2,.9 2,1.4 2,.7 2,.1 2,.4 2-.5 2-.3 2,.1 2-.3 2-.4 2-.3 2,.4 2,.3 2,.1 2,.4 2,.1 2-.6 2-.7 2-.2 2-1 2,.1 2-.5 2-.4 2,.2 2-.3 2,.7 2,.4 2-.1 2-.3 2-.3 2,.2 2,.2 2-.1 2,.4 2,.1 2,.4 2-.4 2-.4 2,.1 2,.1 2-.1 2,.4 2-.2 2,0 2,1.1 2,2.4 2,2.7 2,2.6 1.4,1.7 0,1.3-1.4-2.4-2-2.3-2-1.9-2-1.9-2-.9-2-.5-2,.3-2-.1-2,0-2-.3-2-.5-2,.2-2,.5-2-.5-2-.3-2-.2-2-.1-2,.2-2,.1-2,.2-2-.5-2-.1-2,.2-2-.2-2-.5-2,.6-2-.1-2-.5-2,.4-2,.5-2,.2-2,.5-2,.4-2,0-2,.2-2-.6-2-.3-2,.4-2,.4-2,.5-2-.1-2,.5-2,.2-2-.5-2,0-2-.6-2-.6-2-1.3-2-1-2-1.2-2-1.3-2-.7-2-1-2-.7-2-.6-2-.7-2-1.2-2-.8-2-.4-2-.3-2-.4-2-.9-2-.4-2-.8-2-.4-2,.1-2,.1-2-.2-2-.3-2,.6-2,.8-2,.3-2-.2-2,.8-2-.2-2-.1-2,.5-2,.1-2,.2-2,.9-2,1-2,1-2,1.6-2,.6-2,.9-2,2.6-2,3-2,3.3-2,3.4-2,2.8-2,2.7-2,3.1-2,3.6-2,1.4-2,0-2,0-2,.1-2,.3-2,.2-2-1.3-2-1.3-2-1.7-2-1.5-2-.9-2-1.3-2-1.8-2-1.8-2-3.2-2-3.2-2-3.2-2-2.9-2-2.2-2-.4-2-1.1-2-.4-2-1.1-2-.9-2-.7-2-1.2-2-.2-2-1-2,0-2-.7-2-.5-2,.4-2,.1-2-.1-2,.6-2-.3-2-.1-2,.2-2,.3-2,1.3-2,.5-2,.8-2,1.1-2,1.2-2,.4-2,.5-2,1.7-2,1.4-2,1.5-2,2.1-2,2.1-2,1.5-2,1.3-2,1.7-2,2.3-2,1.9-2,1.4-2,.2-2-.9-2-.2-2-1.3-2,0-2-.6-2-.9-2-.3-2-.2-2,0-2-.5-2-.8-2,0-2-.1-2-.1-2-.5-2-.3-2,.2-2-.4-2-.9-2-.1-2-.7-2-.9-2-.4-2-.9-2-.7-2-.3-2-1.1-2-.2-2,1-2,.9-2,1.2-2,.2-2,.5-2,.6-2,.5-2-.3-2,.7-2,.3-2,.7-2,.5-2,.5-2,.6-2-.1-2-.2-2-.2-2,.4-2,.2-2,.2-2-.3-2,.8-2,.1-2,.1-2,0-2-.3-2,.7-2-.3-2-.5-2-.6-2,0-2-.7-2,0-2-.2-2,.3-2-.6-2,.1-2-.2-2,.4-2-.2-2-.2-2-.3-2-.7-2-.6-2-.6-2,.2-2-.3-2-.6-2-.3-2-.1-2-.8-2,.1-2-.2-2,0-2,.2-2,.1-2,.3-2,.8-2-.7-2-.8-2-.3-2-2.5-2-2.5-2-1.8-2-2.4-2-1-2-2.8-2-3.7-2-3.2-2-2.4-2,.3-2-.2-2,1.2-2,2.3-2,.1-2,.1-2-1.3-2-4.1-2-.8-2-.6-2,.2-2,.1-2-.6-2,.4-2-.7-2,.2-2,.4-2-.3-2-.3-2,0-2,.2-2,0-2-.6-2,.2-2-.4-2,.3-2,.8-2,1.8-2,1.3-2,1.6-2,2.5-2,1.9-2,.9-2,2.2-2,1.5-2,1.6-2,1.6-2,1.3-2,1.9-2,1.7-2,2.2-2-.4-2-.2-2-.6-2-.1-2,.3-2-.8-2,.1-2,0-2,.4-2,.1-2-.4-2-.5-2,.4-2,.2-2-.2-2,0-2,.5-2-.5-2-.7-2,.4-2,.3-2,1.2-2,0-2-4.4-2,1.5-2,1.1Z" fill="#eedbe8"/><path d="M1166.6,212.7l2-1.1 2-1.5 2,4.4 2,0 2-1.2 2-.3 2-.4 2,.7 2,.5 2-.5 2,0 2,.2 2-.2 2-.4 2,.5 2,.4 2-.1 2-.4 2,0 2-.1 2,.8 2-.3 2,.1 2,.6 2,.2 2,.4 2-2.2 2-1.7 2-1.9 2-1.3 2-1.6 2-1.6 2-1.5 2-2.2 2-.9 2-1.9 2-2.5 2-1.6 2-1.3 2-1.8 2-.8 2-.3 2,.4 2-.2 2,.6 2,0 2-.2 2,0 2,.3 2,.3 2-.4 2-.2 2,.7 2-.4 2,.6 2-.1 2-.2 2,.6 2,.8 2,4.1 2,1.3 2-.1 2-.1 2-2.3 2-1.2 2,.2 2-.3 2,2.4 2,3.2 2,3.7 2,2.8 2,1 2,2.4 2,1.8 2,2.5 2,2.5 2,.3 2,.8 2,.7 2-.8 2-.3 2-.1 2-.2 2,0 2,.2 2-.1 2,.8 2,.1 2,.3 2,.6 2,.3 2-.2 2,.6 2,.6 2,.7 2,.3 2,.2 2,.2 2-.4 2,.2 2-.1 2,.6 2-.3 2,.2 2,0 2,.7 2,0 2,.6 2,.5 2,.3 2-.7 2,.3 2,0 2-.1 2-.1 2-.8 2,.3 2-.2 2-.2 2-.4 2,.2 2,.2 2,.1 2-.6 2-.5 2-.5 2-.7 2-.3 2-.7 2,.3 2-.5 2-.6 2-.5 2-.2 2-1.2 2-.9 2-1 2,.2 2,1.1 2,.3 2,.7 2,.9 2,.4 2,.9 2,.7 2,.1 2,.9 2,.4 2-.2 2,.3 2,.5 2,.1 2,.1 2,0 2,.8 2,.5 2,0 2,.2 2,.3 2,.9 2,.6 2,0 2,1.3 2,.2 2,.9 2-.2 2-1.4 2-1.9 2-2.3 2-1.7 2-1.3 2-1.5 2-2.1 2-2.1 2-1.5 2-1.4 2-1.7 2-.5 2-.4 2-1.2 2-1.1 2-.8 2-.5 2-1.3 2-.3 2-.2 2,.1 2,.3 2-.6 2,.1 2-.1 2-.4 2,.5 2,.7 2,0 2,1 2,.2 2,1.2 2,.7 2,.9 2,1.1 2,.4 2,1.1 2,.4 2,2.2 2,2.9 2,3.2 2,3.2 2,3.2 2,1.8 2,1.8 2,1.3 2,.9 2,1.5 2,1.7 2,1.3 2,1.3 2-.2 2-.3 2-.1 2,0 2,0 2-1.4 2-3.6 2-3.1 2-2.7 2-2.8 2-3.4 2-3.3 2-3 2-2.6 2-.9 2-.6 2-1.6 2-1 2-1 2-.9 2-.2 2-.1 2-.5 2,.1 2,.2 2-.8 2,.2 2-.3 2-.8 2-.6 2,.3 2,.2 2-.1 2-.1 2,.4 2,.8 2,.4 2,.9 2,.4 2,.3 2,.4 2,.8 2,1.2 2,.7 2,.6 2,.7 2,1 2,.7 2,1.3 2,1.2 2,1 2,1.3 2,.6 2,.6 2,0 2,.5 2-.2 2-.5 2,.1 2-.5 2-.4 2-.4 2,.3 2,.6 2-.2 2,0 2-.4 2-.5 2-.2 2-.5 2-.4 2,.5 2,.1 2-.6 2,.5 2,.2 2-.2 2,.1 2,.5 2-.2 2-.1 2-.2 2,.1 2,.2 2,.3 2,.5 2-.5 2-.2 2,.5 2,.3 2,0 2,.1 2-.3 2,.5 2,.9 2,1.9 2,1.9 2,2.3 1.4,2.4 0,7.5-1.4-1.5-2-2.6-2-2.8-2-1.9-2-1.6-2-.4-2,.5-2-.3-2,.2-2-.6-2,.1-2,0-2-.5-2,.1-2-.6-2,.3-2-.6-2,.2-2,.2-2,.6-2-.4-2,0-2-.4-2,0-2,.7-2,0-2,.4-2-.5-2,.1-2,1-2,1.2-2,.3-2,.2-2-.4-2-.4-2-.2-2-.2-2-.5-2,.4-2-.1-2,.3-2-.1-2,.6-2,.6-2-.5-2,.5-2-1-2-1-2-1.3-2-1-2-1.3-2-1.5-2-1.1-2-1.2-2-1.6-2-.9-2-1.2-2-1.6-2-.9-2-1.1-2-.6-2-.4-2-.5-2,.4-2,.2-2,0-2,.3-2-.5-2,.2-2,.8-2-.3-2-.3-2,.4-2-.3-2,.6-2,0-2-.1-2,0-2,.4-2,1.6-2,1.2-2,1.3-2,1.8-2,1.8-2,1.5-2,2.6-2,3.4-2,4-2,3.2-2,3.1-2,3.1-2,3.6-2,3.9-2,.9-2-.1-2-.3-2-.5-2,.5-2,0-2-1.7-2-1.5-2-1.6-2-1.8-2-2-2-1.7-2-2.1-2-2-2-3.5-2-2.8-2-3.5-2-3.1-2-3.7-2-.8-2-.8-2-.9-2-.6-2-.3-2-1.3-2-.4-2-.3-2-1.3-2,.2-2-.4-2-.2-2,0-2,.1-2,.6-2-.4-2-.5-2,.5-2,0-2,.6-2,.5-2,1.3-2,1.2-2,.8-2,1.6-2,.8-2,1-2,.7-2,2.5-2,1.8-2,2.4-2,1.7-2,2.5-2,2.2-2,1.6-2,2.3-2,1.7-2,2.1-2,0-2-1.1-2-.9-2-.7-2-1-2-1-2-1-2-.3-2-.3-2-.6-2-.2-2-.7-2-.2-2,.2-2-.3-2-.5-2,.1-2-.7-2-.4-2-1-2-.2-2-.2-2,0-2-.8-2,.2-2-.9-2-.3-2-.4-2,0-2,1.2-2,.9-2,1.8-2,.6-2-.2-2,.9-2-.2-2,.7-2,.4-2-.1-2,.8-2,.3-2,.8-2,0-2,.5-2,.2-2-.3-2-.1-2-.1-2-.1-2-.3-2,.4-2,.3-2,.5-2,.3-2-.2-2-.3-2-.5-2-.2-2-.6-2-.4-2-.6-2-.3-2-.8-2,.3-2-.4-2-.6-2-.7-2,.3-2-.5-2-.2-2,.1-2,.2-2-.3-2-.6-2-.5-2-.7-2,0-2,0-2-.2-2-.6-2-.2-2-.6-2-1.3-2-.4-2,.7-2-.9-2-.7-2,.7-2-1-2-1-2-.9-2-.8-2-.5-2-1.9-2-3.5-2-4.3-2-2.4-2-2.4-2-2.6-2,.1-2-.2-2,1.5-2,.6-2-.3-2-1.1-2-.7-2-2-2-.4-2-.5-2-.7-2,.3-2,.2-2,.3-2,.6-2-.6-2-.2-2-.4-2-.6-2,.4-2,.1-2-.5-2-.4-2,.4-2,.2-2,.5-2,1.9-2,1-2,1.5-2,1.6-2,1.5-2,1.1-2,.9-2,2-2,2.4-2,2.1-2,2.3-2,1.5-2,2.3-2,2.3-2,2.7-2-1-2-.2-2-.6-2,0-2,.1-2-.1-2-.7-2,.1-2,0-2,.1-2,.3-2-.3-2-.2-2,.1-2,.2-2,.1-2-.2-2-.5-2-.1-2,.1-2-.5-2,1.6-2-.2-2-5.6-2,1.7-2,2.2Z" fill="#dcece0"/><path d="M1166.6,219.5l2-2.2 2-1.7 2,5.6 2,.2 2-1.6 2,.5 2-.1 2,.1 2,.5 2,.2 2-.1 2-.2 2-.1 2,.2 2,.3 2-.3 2-.1 2,0 2-.1 2,.7 2,.1 2-.1 2,0 2,.6 2,.2 2,1 2-2.7 2-2.3 2-2.3 2-1.5 2-2.3 2-2.1 2-2.4 2-2 2-.9 2-1.1 2-1.5 2-1.6 2-1.5 2-1 2-1.9 2-.5 2-.2 2-.4 2,.4 2,.5 2-.1 2-.4 2,.6 2,.4 2,.2 2,.6 2-.6 2-.3 2-.2 2-.3 2,.7 2,.5 2,.4 2,2 2,.7 2,1.1 2,.3 2-.6 2-1.5 2,.2 2-.1 2,2.6 2,2.4 2,2.4 2,4.3 2,3.5 2,1.9 2,.5 2,.8 2,.9 2,1 2,1 2-.7 2,.7 2,.9 2-.7 2,.4 2,1.3 2,.6 2,.2 2,.6 2,.2 2,0 2,0 2,.7 2,.5 2,.6 2,.3 2-.2 2-.1 2,.2 2,.5 2-.3 2,.7 2,.6 2,.4 2-.3 2,.8 2,.3 2,.6 2,.4 2,.6 2,.2 2,.5 2,.3 2,.2 2-.3 2-.5 2-.3 2-.4 2,.3 2,.1 2,.1 2,.1 2,.3 2-.2 2-.5 2,0 2-.8 2-.3 2-.8 2,.1 2-.4 2-.7 2,.2 2-.9 2,.2 2-.6 2-1.8 2-.9 2-1.2 2,0 2,.4 2,.3 2,.9 2-.2 2,.8 2,0 2,.2 2,.2 2,1 2,.4 2,.7 2-.1 2,.5 2,.3 2-.2 2,.2 2,.7 2,.2 2,.6 2,.3 2,.3 2,1 2,1 2,1 2,.7 2,.9 2,1.1 2,0 2-2.1 2-1.7 2-2.3 2-1.6 2-2.2 2-2.5 2-1.7 2-2.4 2-1.8 2-2.5 2-.7 2-1 2-.8 2-1.6 2-.8 2-1.2 2-1.3 2-.5 2-.6 2,0 2-.5 2,.5 2,.4 2-.6 2-.1 2,0 2,.2 2,.4 2-.2 2,1.3 2,.3 2,.4 2,1.3 2,.3 2,.6 2,.9 2,.8 2,.8 2,3.7 2,3.1 2,3.5 2,2.8 2,3.5 2,2 2,2.1 2,1.7 2,2 2,1.8 2,1.6 2,1.5 2,1.7 2,0 2-.5 2,.5 2,.3 2,.1 2-.9 2-3.9 2-3.6 2-3.1 2-3.1 2-3.2 2-4 2-3.4 2-2.6 2-1.5 2-1.8 2-1.8 2-1.3 2-1.2 2-1.6 2-.4 2,0 2,.1 2,0 2-.6 2,.3 2-.4 2,.3 2,.3 2-.8 2-.2 2,.5 2-.3 2,0 2-.2 2-.4 2,.5 2,.4 2,.6 2,1.1 2,.9 2,1.6 2,1.2 2,.9 2,1.6 2,1.2 2,1.1 2,1.5 2,1.3 2,1 2,1.3 2,1 2,1 2-.5 2,.5 2-.6 2-.6 2,.1 2-.3 2,.1 2-.4 2,.5 2,.2 2,.2 2,.4 2,.4 2-.2 2-.3 2-1.2 2-1 2-.1 2,.5 2-.4 2,0 2-.7 2,0 2,.4 2,0 2,.4 2-.6 2-.2 2-.2 2,.6 2-.3 2,.6 2-.1 2,.5 2,0 2-.1 2,.6 2-.2 2,.3 2-.5 2,.4 2,1.6 2,1.9 2,2.8 2,2.6 1.4,1.5 0,2-1.4-2.3-2-2.9-2-2.9-2-2.6-2-1.3-2,.1-2,.2-2,.4-2,.3-2-.1-2,.5-2-.6-2,0-2-.4-2,.2-2,.4-2-.3-2,.1-2,0-2-.4-2-.4-2-.1-2,.3-2,.3-2,.7-2-.4-2,.2-2-.2-2,.5-2,0-2-.1-2,.9-2,.3-2-.1-2,.3-2-.4-2,.4-2-.7-2,.5-2-.6-2,0-2,0-2,.1-2,.2-2,.3-2,0-2-.8-2-1.6-2-1.2-2-.9-2-1.1-2-1.4-2-1.3-2-.8-2-1.7-2-1.7-2-.9-2-.9-2-.9-2-1.1-2-.2-2-.4-2-.9-2-.5-2,0-2-.3-2,.3-2-.2-2,.2-2,.5-2,.4-2,.5-2,0-2,.4-2,.3-2-.3-2,.6-2,.4-2,.2-2,1.8-2,1.7-2,1-2,1.1-2,1.6-2,1.1-2,2-2,3.7-2,3.9-2,4.1-2,3-2,3.8-2,3.8-2,3.8-2,.7-2-.4-2-.5-2-.4-2-.1-2-.1-2-1.3-2-1.7-2-1.9-2-2.1-2-1.2-2-1.5-2-1.2-2-2.6-2-3.7-2-3.4-2-3.2-2-3.9-2-2.7-2-1-2-.3-2-.5-2-.9-2-.9-2-1-2-1-2-1.2-2-.6-2,.3-2-.3-2-.3-2,.1-2,.3-2,.2-2,.2-2,.5-2-.1-2,.2-2-.3-2,.7-2,1.1-2,1.3-2,1.3-2,1.1-2,.6-2,1.5-2,1.4-2,1.7-2,1.8-2,1.6-2,2.1-2,1.9-2,2.4-2,1.7-2,2-2,2-2,1.8-2,.4-2-.7-2-1.1-2-1-2-.4-2-.2-2-.4-2-.3-2,.1-2-.2-2-.8-2-.3-2-.6-2-.1-2-.4-2-.4-2-.7-2,0-2-1.1-2-1-2-.5-2-.1-2,.1-2-.7-2-.3-2,0-2-.6-2-.9-2,.9-2,1.1-2,.8-2,.9-2,1.3-2,.9-2,.5-2-.2-2,.6-2,.1-2,.5-2,0-2,.5-2,0-2-.1-2,.5-2,.3-2,.6-2-.2-2-.2-2,.7-2-.4-2,0-2-.1-2-.3-2,.5-2,.1-2,.6-2,.1-2-.7-2-.9-2-.1-2-.8-2-.4-2-.7-2-.1-2-.4-2-.4-2,.2-2-.7-2-1-2-.5-2-.1-2-.1-2-.3-2-.7-2-.2-2,.1-2-.5-2,0-2,0-2-.9-2-.7-2-1-2,.1-2-.4-2,.2-2,.9-2-1.5-2,.7-2-.7-2-1.1-2-2.4-2-.9-2-1.6-2-1.9-2-3.5-2-3.3-2-2.9-2-2.9-2-2.6-2,.1-2,.8-2,.5-2,.8-2,.9-2,.5-2-.3-2-3-2-1.1-2-.9-2-.1-2-.1-2,.2-2,.1-2-.7-2-.4-2-.1-2-.2-2-.6-2,.1-2-.1-2,.2-2,.3-2,.4-2,0-2,.5-2,1.3-2,1.5-2,1.1-2,1.7-2,2.3-2,1.1-2,1.5-2,2-2,2-2,2.4-2,2.3-2,1.6-2,2.2-2,1.7-2,2.3-2-.9-2-.3-2,.4-2-.2-2-.1-2-.3-2-.3-2-.1-2,.3-2-.5-2-.3-2,.2-2,.3-2,.4-2,.4-2-.5-2,.2-2,.1-2-.2-2,.5-2,0-2,1.7-2-.4-2-6.2-2,1.1-2,1.5Z" fill="#eed8e0"/><path d="M1166.6,221l2-1.5 2-1.1 2,6.2 2,.4 2-1.7 2,0 2-.5 2,.2 2-.1 2-.2 2,.5 2-.4 2-.4 2-.3 2-.2 2,.3 2,.5 2-.3 2,.1 2,.3 2,.3 2,.1 2,.2 2-.4 2,.3 2,.9 2-2.3 2-1.7 2-2.2 2-1.6 2-2.3 2-2.4 2-2 2-2 2-1.5 2-1.1 2-2.3 2-1.7 2-1.1 2-1.5 2-1.3 2-.5 2,0 2-.4 2-.3 2-.2 2,.1 2-.1 2,.6 2,.2 2,.1 2,.4 2,.7 2-.1 2-.2 2,.1 2,.1 2,.9 2,1.1 2,3 2,.3 2-.5 2-.9 2-.8 2-.5 2-.8 2-.1 2,2.6 2,2.9 2,2.9 2,3.3 2,3.5 2,1.9 2,1.6 2,.9 2,2.4 2,1.1 2,.7 2-.7 2,1.5 2-.9 2-.2 2,.4 2-.1 2,1 2,.7 2,.9 2,0 2,0 2,.5 2-.1 2,.2 2,.7 2,.3 2,.1 2,.1 2,.5 2,1 2,.7 2-.2 2,.4 2,.4 2,.1 2,.7 2,.4 2,.8 2,.1 2,.9 2,.7 2-.1 2-.6 2-.1 2-.5 2,.3 2,.1 2,0 2,.4 2-.7 2,.2 2,.2 2-.6 2-.3 2-.5 2,.1 2,0 2-.5 2,0 2-.5 2-.1 2-.6 2,.2 2-.5 2-.9 2-1.3 2-.9 2-.8 2-1.1 2-.9 2,.9 2,.6 2,0 2,.3 2,.7 2-.1 2,.1 2,.5 2,1 2,1.1 2,0 2,.7 2,.4 2,.4 2,.1 2,.6 2,.3 2,.8 2,.2 2-.1 2,.3 2,.4 2,.2 2,.4 2,1 2,1.1 2,.7 2-.4 2-1.8 2-2 2-2 2-1.7 2-2.4 2-1.9 2-2.1 2-1.6 2-1.8 2-1.7 2-1.4 2-1.5 2-.6 2-1.1 2-1.3 2-1.3 2-1.1 2-.7 2,.3 2-.2 2,.1 2-.5 2-.2 2-.2 2-.3 2-.1 2,.3 2,.3 2-.3 2,.6 2,1.2 2,1 2,1 2,.9 2,.9 2,.5 2,.3 2,1 2,2.7 2,3.9 2,3.2 2,3.4 2,3.7 2,2.6 2,1.2 2,1.5 2,1.2 2,2.1 2,1.9 2,1.7 2,1.3 2,.1 2,.1 2,.4 2,.5 2,.4 2-.7 2-3.8 2-3.8 2-3.8 2-3 2-4.1 2-3.9 2-3.7 2-2 2-1.1 2-1.6 2-1.1 2-1 2-1.7 2-1.8 2-.2 2-.4 2-.6 2,.3 2-.3 2-.4 2,0 2-.5 2-.4 2-.5 2-.2 2,.2 2-.3 2,.3 2,0 2,.5 2,.9 2,.4 2,.2 2,1.1 2,.9 2,.9 2,.9 2,1.7 2,1.7 2,.8 2,1.3 2,1.4 2,1.1 2,.9 2,1.2 2,1.6 2,.8 2,0 2-.3 2-.2 2-.1 2,0 2,0 2,.6 2-.5 2,.7 2-.4 2,.4 2-.3 2,.1 2-.3 2-.9 2,.1 2,0 2-.5 2,.2 2-.2 2,.4 2-.7 2-.3 2-.3 2,.1 2,.4 2,.4 2,0 2-.1 2,.3 2-.4 2-.2 2,.4 2,0 2,.6 2-.5 2,.1 2-.3 2-.4 2-.2 2-.1 2,1.3 2,2.6 2,2.9 2,2.9 1.4,2.3 0,10.9-1.4-1.8-2-3.1-2-3.1-2-2.9-2-1-2,0-2-.4-2,.4-2-.6-2,.4-2-.4-2,.3-2-.4-2-.2-2,.1-2-.6-2,.1-2-.4-2,.2-2,.1-2-.3-2,.3-2,.2-2,.8-2,.1-2,0-2,.1-2,.6-2-.1-2,.2-2,.6-2,.9-2,.2-2-.4-2-.1-2-.2-2,.6-2-.5-2-.5-2,.1-2,.5-2-.4-2-.2-2,.3-2-.1-2,.1-2-.7-2-1.7-2-1.5-2-2-2-1.5-2-1.2-2-1.3-2-1.8-2-1.8-2-1.4-2-1.4-2-1.4-2-1.3-2-.2-2-.5-2-.6-2-1.2-2-.1-2-.3-2,.6-2,.4-2-.5-2-.3-2-.2-2,.4-2,.2-2,.6-2,.4-2,.7-2-.1-2-.3-2,.2-2,.3-2,1.6-2,1.7-2,1.4-2,1.8-2,1.7-2,2-2,3.1-2,4.6-2,3.5-2,3.5-2,4.4-2,3.6-2,3.8-2,4.3-2,.8-2-.5-2,.2-2-.3-2,0-2-.8-2-1.9-2-1.7-2-2.2-2-1.7-2-2.3-2-1.7-2-2-2-2.8-2-4-2-3.2-2-3.2-2-4.2-2-3-2-1.6-2-1-2-.9-2-1-2-1-2-.6-2-1.2-2-.6-2-.5-2,.1-2-.5-2,.3-2,.4-2,.1-2,.2-2,.7-2,.6-2-.2-2,0-2,.3-2,.9-2,1.2-2,.9-2,.8-2,1.5-2,.9-2,1.7-2,1.4-2,2.1-2,2.1-2,1.8-2,2.4-2,1.7-2,2.7-2,2.2-2,2.5-2,2.1-2,2.3-2,.1-2-1.4-2-1-2-.7-2-1.1-2-.3-2-.8-2-.1-2-.8-2-.6-2-.4-2-1.1-2,.2-2-.3-2,0-2-.4-2-.6-2-.2-2,0-2-.2-2-.8-2-.7-2-.8-2,.1-2-.4-2-.4-2-.3-2-1-2,.9-2,1.8-2,1.8-2,1.3-2,1.4-2,.2-2,.1-2,.8-2-.1-2,.8-2,.6-2,.1-2,.5-2,.3-2,.6-2-.2-2,0-2,.1-2-.5-2,.6-2,.6-2,0-2-.1-2-.4-2,.5-2-.2-2,.3-2-.4-2-.5-2-1.1-2-1.3-2-.6-2-.6-2-.4-2-.3-2-.9-2-.3-2-.1-2-.3-2,.2-2-.1-2-.8-2,0-2-.8-2-.5-2-.5-2-.6-2-.2-2-.7-2,.3-2-.2-2-.5-2,.2-2-.2-2,.6-2-.6-2-1.3-2-1.5-2,.9-2-.5-2,1.1-2-1.1-2-2.3-2-2.8-2-1.5-2-1.2-2-3.1-2-3.4-2-4.1-2-3.3-2-2.5-2,0-2,.7-2,1.2-2,1.8-2-.5-2-.5-2-.4-2-2.3-2-1-2,0-2-.4-2-.1-2-.3-2,.1-2-.4-2,.1-2-.4-2,.1-2-.5-2-.5-2,.1-2,.2-2-.1-2,0-2-.2-2,.9-2,.9-2,1.8-2,2.2-2,1.7-2,2.2-2,1.3-2,1.6-2,2-2,2.6-2,2.5-2,2.4-2,2.2-2,2.1-2,2.8-2,2.6-2-.8-2-1.3-2,0-2,0-2-.5-2,0-2,0-2-.1-2-.4-2,.4-2,.1-2-.7-2,.4-2,.2-2-.1-2-.2-2,.1-2,.2-2-.5-2,.3-2-.4-2,1.9-2,0-2-6.7-2,2.3-2,1.4Z" fill="#d9ece6"/><path d="M1166.6,230.9l2-1.4 2-2.3 2,6.7 2,0 2-1.9 2,.4 2-.3 2,.5 2-.2 2-.1 2,.2 2,.1 2-.2 2-.4 2,.7 2-.1 2-.4 2,.4 2,.1 2,0 2,0 2,.5 2,0 2,0 2,1.3 2,.8 2-2.6 2-2.8 2-2.1 2-2.2 2-2.4 2-2.5 2-2.6 2-2 2-1.6 2-1.3 2-2.2 2-1.7 2-2.2 2-1.8 2-.9 2-.9 2,.2 2,0 2,.1 2-.2 2-.1 2,.5 2,.5 2-.1 2,.4 2-.1 2,.4 2-.1 2,.3 2,.1 2,.4 2,0 2,1 2,2.3 2,.4 2,.5 2,.5 2-1.8 2-1.2 2-.7 2,0 2,2.5 2,3.3 2,4.1 2,3.4 2,3.1 2,1.2 2,1.5 2,2.8 2,2.3 2,1.1 2-1.1 2,.5 2-.9 2,1.5 2,1.3 2,.6 2-.6 2,.2 2-.2 2,.5 2,.2 2-.3 2,.7 2,.2 2,.6 2,.5 2,.5 2,.8 2,0 2,.8 2,.1 2-.2 2,.3 2,.1 2,.3 2,.9 2,.3 2,.4 2,.6 2,.6 2,1.3 2,1.1 2,.5 2,.4 2-.3 2,.2 2-.5 2,.4 2,.1 2,0 2-.6 2-.6 2,.5 2-.1 2,0 2,.2 2-.6 2-.3 2-.5 2-.1 2-.6 2-.8 2,.1 2-.8 2-.1 2-.2 2-1.4 2-1.3 2-1.8 2-1.8 2-.9 2,1 2,.3 2,.4 2,.4 2-.1 2,.8 2,.7 2,.8 2,.2 2,0 2,.2 2,.6 2,.4 2,0 2,.3 2-.2 2,1.1 2,.4 2,.6 2,.8 2,.1 2,.8 2,.3 2,1.1 2,.7 2,1 2,1.4 2-.1 2-2.3 2-2.1 2-2.5 2-2.2 2-2.7 2-1.7 2-2.4 2-1.8 2-2.1 2-2.1 2-1.4 2-1.7 2-.9 2-1.5 2-.8 2-.9 2-1.2 2-.9 2-.3 2,0 2,.2 2-.6 2-.7 2-.2 2-.1 2-.4 2-.3 2,.5 2-.1 2,.5 2,.6 2,1.2 2,.6 2,1 2,1 2,.9 2,1 2,1.6 2,3 2,4.2 2,3.2 2,3.2 2,4 2,2.8 2,2 2,1.7 2,2.3 2,1.7 2,2.2 2,1.7 2,1.9 2,.8 2,0 2,.3 2-.2 2,.5 2-.8 2-4.3 2-3.8 2-3.6 2-4.4 2-3.5 2-3.5 2-4.6 2-3.1 2-2 2-1.7 2-1.8 2-1.4 2-1.7 2-1.6 2-.3 2-.2 2,.3 2,.1 2-.7 2-.4 2-.6 2-.2 2-.4 2,.2 2,.3 2,.5 2-.4 2-.6 2,.3 2,.1 2,1.2 2,.6 2,.5 2,.2 2,1.3 2,1.4 2,1.4 2,1.4 2,1.8 2,1.8 2,1.3 2,1.2 2,1.5 2,2 2,1.5 2,1.7 2,.7 2-.1 2,.1 2-.3 2,.2 2,.4 2-.5 2-.1 2,.5 2,.5 2-.6 2,.2 2,.1 2,.4 2-.2 2-.9 2-.6 2-.2 2,.1 2-.6 2-.1 2,0 2-.1 2-.8 2-.2 2-.3 2,.3 2-.1 2-.2 2,.4 2-.1 2,.6 2-.1 2,.2 2,.4 2-.3 2,.4 2-.4 2,.6 2-.4 2,.4 2,0 2,1 2,2.9 2,3.1 2,3.1 1.4,1.8 0,7.3-1.4-2.2-2-3.1-2-3.1-2-3.5-2-1.6-2-.1-2,0-2,.7-2-.5-2,0-2-.5-2,0-2-.6-2-.1-2,.1-2-.1-2-.4-2,.2-2,.1-2,0-2,.4-2,0-2,0-2-.2-2,.7-2,.2-2-.2-2,1-2,.1-2-.1-2,0-2,.2-2,.5-2-.1-2-.5-2-.5-2,.3-2,0-2-.2-2,0-2-.3-2,.4-2-.3-2,.2-2,0-2,.6-2-.7-2-1.7-2-2-2-2.3-2-2-2-2.4-2-1.8-2-1.3-2-1.3-2-1.2-2-1.4-2-1-2-1.3-2-.9-2-.5-2-.7-2-.9-2,0-2,.1-2,.4-2,.5-2,.1-2,0-2-.2-2,.4-2-.4-2,.2-2,.1-2,.6-2,.3-2,.7-2,.7-2,.1-2,2.2-2,1.7-2,1.4-2,1.9-2,1.2-2,1.2-2,3.1-2,4.1-2,4.6-2,4.7-2,3.8-2,3.9-2,4.5-2,3.9-2,.8-2,.2-2,.1-2-.5-2-.1-2-.4-2-2.1-2-2.4-2-2.1-2-2.2-2-2.5-2-2.3-2-1.9-2-2.3-2-3.5-2-4.2-2-3.5-2-3.6-2-4-2-1.6-2-.9-2-1-2-1.2-2-1-2-1.2-2-.6-2-.8-2-.6-2,.1-2,.5-2-.1-2,.2-2,0-2-.2-2-.1-2,.7-2-.2-2,.7-2-.3-2,.7-2,1.4-2,.7-2,1.4-2,1.5-2,1.2-2,1.1-2,1-2,2.6-2,2.7-2,2.5-2,2.6-2,1.7-2,2.7-2,2.4-2,1.7-2,2.8-2,2.2-2-.1-2-.9-2-1.3-2-1.2-2-.6-2-1.1-2-.5-2-1.2-2-.4-2-1.1-2-.4-2-.2-2-.2-2,0-2-.4-2,.1-2,.3-2-.4-2-.7-2-.7-2-.8-2-.2-2-.1-2-.2-2-.6-2,.1-2-.6-2-.6-2,.2-2,1.5-2,1.5-2,2.1-2,.9-2,.7-2,.1-2,.3-2,0-2-.1-2,.8-2,.4-2,.4-2,.6-2,0-2-.2-2-.2-2,.1-2,.1-2,.1-2-.6-2,.3-2,.5-2-.2-2-.2-2,0-2,.4-2-.2-2,.2-2-.9-2-.7-2-.3-2-.7-2-.4-2-.1-2-1-2,0-2-.4-2-.7-2-.4-2-.9-2,0-2-.5-2-.7-2,0-2-.7-2-.7-2-.6-2-.9-2,0-2-.8-2-.2-2-.2-2-1.3-2,.1-2-.6-2-.5-2,.2-2-.5-2-1.4-2,.9-2-1.1-2-2-2-1.3-2-2-2-1.3-2-2.6-2-2.6-2-3.3-2-2.8-2-3.9-2-.1-2,1-2,2.8-2,3.3-2-.8-2-1.1-2-.9-2-2.6-2-.7-2-.7-2,.2-2-.8-2-.2-2-.1-2-.3-2-.9-2-.1-2-.6-2-.2-2-.1-2,0-2-.2-2-.1-2,.3-2-.3-2,1.4-2,1.6-2,2.2-2,1.3-2,2.1-2,2.4-2,1.2-2,2.3-2,2.3-2,2.3-2,2.8-2,2-2,2.5-2,3-2,2.7-2,2.5-2-.7-2-1.2-2-.6-2-.1-2-.3-2,.3-2,.1-2-.4-2-.1-2,.2-2-.5-2-.2-2,.4-2,.4-2,.3-2-.3-2,.2-2-.4-2-.2-2,.2-2-.6-2,2.2-2,0-2-6.9-2,1.4-2,2.2Z" fill="#f0d8e0"/><path d="M1166.6,236l2-2.2 2-1.4 2,6.9 2,0 2-2.2 2,.6 2-.2 2,.2 2,.4 2-.2 2,.3 2-.3 2-.4 2-.4 2,.2 2,.5 2-.2 2,.1 2,.4 2-.1 2-.3 2,.3 2,.1 2,.6 2,1.2 2,.7 2-2.5 2-2.7 2-3 2-2.5 2-2 2-2.8 2-2.3 2-2.3 2-2.3 2-1.2 2-2.4 2-2.1 2-1.3 2-2.2 2-1.6 2-1.4 2,.3 2-.3 2,.1 2,.2 2,0 2,.1 2,.2 2,.6 2,.1 2,.9 2,.3 2,.1 2,.2 2,.8 2-.2 2,.7 2,.7 2,2.6 2,.9 2,1.1 2,.8 2-3.3 2-2.8 2-1 2,.1 2,3.9 2,2.8 2,3.3 2,2.6 2,2.6 2,1.3 2,2 2,1.3 2,2 2,1.1 2-.9 2,1.4 2,.5 2-.2 2,.5 2,.6 2-.1 2,1.3 2,.2 2,.2 2,.8 2,0 2,.9 2,.6 2,.7 2,.7 2,0 2,.7 2,.5 2,0 2,.9 2,.4 2,.7 2,.4 2,0 2,1 2,.1 2,.4 2,.7 2,.3 2,.7 2,.9 2-.2 2,.2 2-.4 2,0 2,.2 2,.2 2-.5 2-.3 2,.6 2-.1 2-.1 2-.1 2,.2 2,.2 2,0 2-.6 2-.4 2-.4 2-.8 2,.1 2,0 2-.3 2-.1 2-.7 2-.9 2-2.1 2-1.5 2-1.5 2-.2 2,.6 2,.6 2-.1 2,.6 2,.2 2,.1 2,.2 2,.8 2,.7 2,.7 2,.4 2-.3 2-.1 2,.4 2,0 2,.2 2,.2 2,.4 2,1.1 2,.4 2,1.2 2,.5 2,1.1 2,.6 2,1.2 2,1.3 2,.9 2,.1 2-2.2 2-2.8 2-1.7 2-2.4 2-2.7 2-1.7 2-2.6 2-2.5 2-2.7 2-2.6 2-1 2-1.1 2-1.2 2-1.5 2-1.4 2-.7 2-1.4 2-.7 2,.3 2-.7 2,.2 2-.7 2,.1 2,.2 2,0 2-.2 2,.1 2-.5 2-.1 2,.6 2,.8 2,.6 2,1.2 2,1 2,1.2 2,1 2,.9 2,1.6 2,4 2,3.6 2,3.5 2,4.2 2,3.5 2,2.3 2,1.9 2,2.3 2,2.5 2,2.2 2,2.1 2,2.4 2,2.1 2,.4 2,.1 2,.5 2-.1 2-.2 2-.8 2-3.9 2-4.5 2-3.9 2-3.8 2-4.7 2-4.6 2-4.1 2-3.1 2-1.2 2-1.2 2-1.9 2-1.4 2-1.7 2-2.2 2-.1 2-.7 2-.7 2-.3 2-.6 2-.1 2-.2 2,.4 2-.4 2,.2 2,0 2-.1 2-.5 2-.4 2-.1 2,0 2,.9 2,.7 2,.5 2,.9 2,1.3 2,1 2,1.4 2,1.2 2,1.3 2,1.3 2,1.8 2,2.4 2,2 2,2.3 2,2 2,1.7 2,.7 2-.6 2,0 2-.2 2,.3 2-.4 2,.3 2,0 2,.2 2,0 2-.3 2,.5 2,.5 2,.1 2-.5 2-.2 2,0 2,.1 2-.1 2-1 2,.2 2-.2 2-.7 2,.2 2,0 2,0 2-.4 2,0 2-.1 2-.2 2,.4 2,.1 2-.1 2,.1 2,.6 2,0 2,.5 2,0 2,.5 2-.7 2,0 2,.1 2,1.6 2,3.5 2,3.1 2,3.1 1.4,2.2 0,6.7-1.4-1.9-2-3.1-2-3.8-2-2.9-2-2-2,.2-2-.3-2-.5-2-.1-2,.3-2,0-2,.1-2,.2-2-.3-2-.2-2-.2-2,.3-2-.3-2-.3-2-.1-2-.3-2-.1-2,0-2,.4-2,.9-2,.3-2,.6-2,0-2,.9-2,.5-2,.1-2,.3-2-.3-2,.2-2,.2-2-.5-2,0-2-.1-2,.5-2-.4-2,.6-2-.5-2,.2-2-.5-2-.5-2-.1-2-1.1-2-1.8-2-2.1-2-1.7-2-2.2-2-1.5-2-1.6-2-2-2-2.2-2-2.4-2-1.9-2-1.1-2-1.2-2-.5-2-.5-2-.2-2-.8-2,0-2,.1-2-.4-2,.6-2,.1-2,.5-2,.1-2,.1-2-.1-2,.4-2-.1-2,.2-2-.3-2,.4-2,.5-2,.7-2,1.9-2,2-2,1.6-2,1.4-2,2.3-2,1.7-2,3.7-2,4.8-2,4.3-2,4.3-2,5-2,4.8-2,4.2-2,3.9-2,1.1-2-.7-2-.8-2,0-2,.1-2-.8-2-2.2-2-2.2-2-2.6-2-1.9-2-2.8-2-2.7-2-2.3-2-2.8-2-3.6-2-3.8-2-4.1-2-4.7-2-4.1-2-1.3-2-.8-2-.6-2-.8-2-.9-2-1-2-1.5-2-.6-2-.9-2,.4-2,.2-2-.4-2,.1-2,0-2,0-2,.6-2,.7-2,.5-2,.1-2-.3-2,.9-2,1.4-2,1.5-2,1.6-2,1.8-2,.9-2,2-2,1.5-2,2.1-2,2.9-2,2.7-2,2.6-2,2.3-2,3-2,2.3-2,2.8-2,2.3-2,2.2-2,.8-2-1.8-2-1.2-2-1.7-2-.8-2-1-2-.1-2-.9-2-.4-2-1-2-1-2-1.1-2-.2-2-.3-2,0-2-.2-2,.1-2-.4-2-.7-2-.6-2-.5-2,.1-2-.1-2-.7-2-.7-2-.2-2-.3-2-1-2,.8-2,2.2-2,1.4-2,1.8-2,1.6-2,.9-2,.9-2,.2-2,.6-2,.7-2,.1-2,0-2,.6-2,.5-2,0-2-.6-2,.2-2,.1-2,.3-2-.3-2,.1-2,.3-2,.1-2,.5-2-.1-2,0-2-.3-2-.3-2-.7-2-.7-2-.7-2-.3-2-.8-2-.6-2-1.3-2-1.2-2-.6-2-.4-2-.9-2-.2-2-1.1-2-.2-2-.3-2-1.1-2-.6-2-.2-2,.1-2-.7-2-.4-2-.7-2-.2-2,.1-2,0-2-.3-2-1.1-2,.7-2-.6-2-.8-2,.5-2-1.3-2-1.3-2,0-2-1.8-2-.9-2-.8-2-1.5-2-3.3-2-3.7-2-3.7-2-2.6-2-4.2-2-.1-2,3-2,1.3-2,1.7-2,0-2-1.6-2-1.8-2-1-2-1.4-2-.8-2,.3-2,.2-2-.5-2-.8-2,.1-2-.6-2-.8-2,.1-2-.3-2-.7-2,.1-2-.5-2-.6-2-.1-2,.2-2,1.5-2,1.9-2,2.3-2,1.4-2,1.8-2,2.1-2,1.4-2,2.3-2,2.2-2,2.7-2,3-2,3.4-2,2.3-2,2.5-2,2.6-2,3.2-2-1.5-2-.6-2,.1-2,0-2,.4-2-.4-2-.3-2-.6-2-.1-2,.1-2-.2-2-.1-2-.4-2,.2-2,0-2,.3-2-.4-2-.3-2,.5-2-.5-2,.5-2,1.7-2,.1-2-7.1-2,1.7-2,1.9Z" fill="#d8ebe8"/><path d="M1166.6,243.3l2-1.9 2-1.7 2,7.1 2-.1 2-1.7 2-.5 2,.5 2-.5 2,.3 2,.4 2-.3 2,0 2-.2 2,.4 2,.1 2,.2 2-.1 2,.1 2,.6 2,.3 2,.4 2-.4 2,0 2-.1 2,.6 2,1.5 2-3.2 2-2.6 2-2.5 2-2.3 2-3.4 2-3 2-2.7 2-2.2 2-2.3 2-1.4 2-2.1 2-1.8 2-1.4 2-2.3 2-1.9 2-1.5 2-.2 2,.1 2,.6 2,.5 2-.1 2,.7 2,.3 2-.1 2,.8 2,.6 2-.1 2,.8 2,.5 2-.2 2-.3 2,.8 2,1.4 2,1 2,1.8 2,1.6 2,0 2-1.7 2-1.3 2-3 2,.1 2,4.2 2,2.6 2,3.7 2,3.7 2,3.3 2,1.5 2,.8 2,.9 2,1.8 2,0 2,1.3 2,1.3 2-.5 2,.8 2,.6 2-.7 2,1.1 2,.3 2,0 2-.1 2,.2 2,.7 2,.4 2,.7 2-.1 2,.2 2,.6 2,1.1 2,.3 2,.2 2,1.1 2,.2 2,.9 2,.4 2,.6 2,1.2 2,1.3 2,.6 2,.8 2,.3 2,.7 2,.7 2,.7 2,.3 2,.3 2,0 2,.1 2-.5 2-.1 2-.3 2-.1 2,.3 2-.3 2-.1 2-.2 2,.6 2,0 2-.5 2-.6 2,0 2-.1 2-.7 2-.6 2-.2 2-.9 2-.9 2-1.6 2-1.8 2-1.4 2-2.2 2-.8 2,1 2,.3 2,.2 2,.7 2,.7 2,.1 2-.1 2,.5 2,.6 2,.7 2,.4 2-.1 2,.2 2,0 2,.3 2,.2 2,1.1 2,1 2,1 2,.4 2,.9 2,.1 2,1 2,.8 2,1.7 2,1.2 2,1.8 2-.8 2-2.2 2-2.3 2-2.8 2-2.3 2-3 2-2.3 2-2.6 2-2.7 2-2.9 2-2.1 2-1.5 2-2 2-.9 2-1.8 2-1.6 2-1.5 2-1.4 2-.9 2,.3 2-.1 2-.5 2-.7 2-.6 2,0 2,0 2-.1 2,.4 2-.2 2-.4 2,.9 2,.6 2,1.5 2,1 2,.9 2,.8 2,.6 2,.8 2,1.3 2,4.1 2,4.7 2,4.1 2,3.8 2,3.6 2,2.8 2,2.3 2,2.7 2,2.8 2,1.9 2,2.6 2,2.2 2,2.2 2,.8 2-.1 2,0 2,.8 2,.7 2-1.1 2-3.9 2-4.2 2-4.8 2-5 2-4.3 2-4.3 2-4.8 2-3.7 2-1.7 2-2.3 2-1.4 2-1.6 2-2 2-1.9 2-.7 2-.5 2-.4 2,.3 2-.2 2,.1 2-.4 2,.1 2-.1 2-.1 2-.5 2-.1 2-.6 2,.4 2-.1 2,0 2,.8 2,.2 2,.5 2,.5 2,1.2 2,1.1 2,1.9 2,2.4 2,2.2 2,2 2,1.6 2,1.5 2,2.2 2,1.7 2,2.1 2,1.8 2,1.1 2,.1 2,.5 2,.5 2-.2 2,.5 2-.6 2,.4 2-.5 2,.1 2,0 2,.5 2-.2 2-.2 2,.3 2-.3 2-.1 2-.5 2-.9 2,0 2-.6 2-.3 2-.9 2-.4 2,0 2,.1 2,.3 2,.1 2,.3 2,.3 2-.3 2,.2 2,.2 2,.3 2-.2 2-.1 2,0 2-.3 2,.1 2,.5 2,.3 2-.2 2,2 2,2.9 2,3.8 2,3.1 1.4,1.9 0,8.6-1.4-2-2-3.9-2-3.5-2-3.9-2-1.9-2-.1-2-.2-2-.1-2-.4-2-.1-2-.2-2,0-2,0-2,0-2,0-2-.4-2-.1-2-.1-2,.1-2-.3-2,0-2,.2-2,.5-2,.4-2,.1-2,.3-2,.4-2,.5-2,.3-2,.5-2,.7-2,.5-2-.1-2-.2-2-.1-2,.1-2-.2-2,0-2-.4-2-.4-2,0-2-.4-2,.1-2-.4-2-.1-2-.1-2-1-2-2.1-2-1.9-2-1.8-2-2.2-2-2.3-2-2-2-2-2-2.1-2-1.7-2-2.1-2-2-2-.9-2-.7-2-.9-2-.9-2-.5-2-.2-2,.5-2,.5-2,.4-2,.2-2,0-2,.2-2,.6-2,.1-2,.1-2,0-2,.4-2,.4-2,.3-2,.1-2,.4-2,2.2-2,2.1-2,1.8-2,1.7-2,2.3-2,2.1-2,3.5-2,4.9-2,4.4-2,4.5-2,5-2,4.8-2,4.8-2,4.7-2,1-2-.5-2-.7-2-.3-2-.3-2-1.2-2-2.4-2-2.4-2-2.4-2-2.3-2-2.5-2-2.4-2-2.4-2-3.2-2-4.1-2-4.4-2-4.5-2-4.3-2-4.4-2-1.3-2-.9-2-1.2-2-.9-2-.9-2-1.1-2-1-2-1.1-2-1.1-2,.3-2,.4-2,.5-2-.1-2,0-2,0-2,.2-2,.4-2,.1-2,.1-2,.1-2,1.7-2,1.5-2,1.7-2,1.5-2,1.5-2,1.4-2,1.4-2,1.7-2,2.3-2,2.8-2,2.7-2,2.8-2,2.7-2,2.7-2,3-2,2.9-2,2.4-2,2.7-2,.2-2-1.8-2-1.6-2-1.6-2-1-2-.5-2-.5-2-.5-2-.9-2-.4-2-.8-2-.7-2,0-2-.2-2-.3-2-.3-2,.1-2-.4-2-.4-2-.5-2-.1-2-.6-2,0-2-.3-2,.1-2-.5-2-.2-2-.1-2,1-2,1.9-2,1.8-2,2.2-2,1.5-2,.5-2,.2-2,.7-2,.8-2,.7-2,.3-2,.9-2,.8-2,.4-2,.1-2,.1-2-.3-2,.4-2,0-2-.1-2,0-2,.3-2-.2-2-.1-2-.3-2,0-2-.1-2-.2-2-.2-2-1-2-.6-2-.9-2-.8-2-1-2-.9-2-1.1-2-.8-2-1.1-2-.4-2-.9-2-.6-2-.8-2-.6-2-.8-2-.9-2-.2-2,.2-2,.8-2,.4-2,.4-2,.4-2,.2-2,.8-2,.2-2,.4-2,.7-2,.3-2,.2-2,.6-2,5.3-2,10.8-2,1.3-2-10.9-2-9-2-8.4-2-8-2-5.5-2-4.1-2-4.1-2-3.7-2-4.2-2,.6-2,2.3-2,2.5-2,2.5-2,.1-2-.9-2-1.3-2-.9-2-1.4-2-.4-2-.3-2-.1-2-.4-2-.3-2-.2-2-.5-2-.3-2-.1-2-.4-2,0-2-.5-2-.6-2,0-2-.2-2-.4-2,1.5-2,2-2,1.9-2,1.9-2,1.7-2,1.6-2,2-2,1.8-2,2.7-2,2.9-2,2.9-2,2.9-2,2.8-2,2.9-2,3-2,3.1-2-1.4-2-.7-2,0-2,.1-2-.3-2,.1-2,.1-2-.3-2,.2-2-.3-2-.1-2,.1-2,.1-2,0-2,.3-2-.2-2-.3-2,.1-2,0-2-.1-2-.2-2,2.5-2-.4-2-8.6-2,2.4-2,2.3Z" fill="#f0d8e0"/><path d="M1166.6,249.9l2-2.3 2-2.4 2,8.6 2,.4 2-2.5 2,.2 2,.1 2,0 2-.1 2,.3 2,.2 2-.3 2,0 2-.1 2-.1 2,.1 2,.3 2-.2 2,.3 2-.1 2-.1 2,.3 2-.1 2,0 2,.7 2,1.4 2-3.1 2-3 2-2.9 2-2.8 2-2.9 2-2.9 2-2.9 2-2.7 2-1.8 2-2 2-1.6 2-1.7 2-1.9 2-1.9 2-2 2-1.5 2,.4 2,.2 2,0 2,.6 2,.5 2,0 2,.4 2,.1 2,.3 2,.5 2,.2 2,.3 2,.4 2,.1 2,.3 2,.4 2,1.4 2,.9 2,1.3 2,.9 2-.1 2-2.5 2-2.5 2-2.3 2-.6 2,4.2 2,3.7 2,4.1 2,4.1 2,5.5 2,8 2,8.4 2,9 2,10.9 2-1.3 2-10.8 2-5.3 2-.6 2-.2 2-.3 2-.7 2-.4 2-.2 2-.8 2-.2 2-.4 2-.4 2-.4 2-.8 2-.2 2,.2 2,.9 2,.8 2,.6 2,.8 2,.6 2,.9 2,.4 2,1.1 2,.8 2,1.1 2,.9 2,1 2,.8 2,.9 2,.6 2,1 2,.2 2,.2 2,.1 2,0 2,.3 2,.1 2,.2 2-.3 2,0 2,.1 2,0 2-.4 2,.3 2-.1 2-.1 2-.4 2-.8 2-.9 2-.3 2-.7 2-.8 2-.7 2-.2 2-.5 2-1.5 2-2.2 2-1.8 2-1.9 2-1 2,.1 2,.2 2,.5 2-.1 2,.3 2,0 2,.6 2,.1 2,.5 2,.4 2,.4 2-.1 2,.3 2,.3 2,.2 2,0 2,.7 2,.8 2,.4 2,.9 2,.5 2,.5 2,.5 2,1 2,1.6 2,1.6 2,1.8 2-.2 2-2.7 2-2.4 2-2.9 2-3 2-2.7 2-2.7 2-2.8 2-2.7 2-2.8 2-2.3 2-1.7 2-1.4 2-1.4 2-1.5 2-1.5 2-1.7 2-1.5 2-1.7 2-.1 2-.1 2-.1 2-.4 2-.2 2,0 2,0 2,.1 2-.5 2-.4 2-.3 2,1.1 2,1.1 2,1 2,1.1 2,.9 2,.9 2,1.2 2,.9 2,1.3 2,4.4 2,4.3 2,4.5 2,4.4 2,4.1 2,3.2 2,2.4 2,2.4 2,2.5 2,2.3 2,2.4 2,2.4 2,2.4 2,1.2 2,.3 2,.3 2,.7 2,.5 2-1 2-4.7 2-4.8 2-4.8 2-5 2-4.5 2-4.4 2-4.9 2-3.5 2-2.1 2-2.3 2-1.7 2-1.8 2-2.1 2-2.2 2-.4 2-.1 2-.3 2-.4 2-.4 2,0 2-.1 2-.1 2-.6 2-.2 2,0 2-.2 2-.4 2-.5 2-.5 2,.2 2,.5 2,.9 2,.9 2,.7 2,.9 2,2 2,2.1 2,1.7 2,2.1 2,2 2,2 2,2.3 2,2.2 2,1.8 2,1.9 2,2.1 2,1 2,.1 2,.1 2,.4 2-.1 2,.4 2,0 2,.4 2,.4 2,0 2,.2 2-.1 2,.1 2,.2 2,.1 2-.5 2-.7 2-.5 2-.3 2-.5 2-.4 2-.3 2-.1 2-.4 2-.5 2-.2 2,0 2,.3 2-.1 2,.1 2,.1 2,.4 2,0 2,0 2,0 2,0 2,.2 2,.1 2,.4 2,.1 2,.2 2,.1 2,1.9 2,3.9 2,3.5 2,3.9 1.4,2 0,51.3-1.4,0-2,0-2,0-2,0-2,0-2,0-2,0-2,0-2,0-2,0-2,0-2,0-2,0-2,0-2,0-2,0-2,0-2,0-2,0-2,0-2,0-2,0-2,0-2,0-2,0-2,0-2,0-2,0-2,0-2,0-2,0-2,0-2,0-2,0-2,0-2,0-2,0-2,0-2,0-2,0-2,0-2,0-2,0-2,0-2,0-2,0-2,0-2,0-2,0-2,0-2,0-2,0-2,0-2,0-2,0-2,0-2,0-2,0-2,0-2,0-2,0-2,0-2,0-2,0-2,0-2,0-2,0-2,0-2,0-2,0-2,0-2,0-2,0-2,0-2,0-2,0-2,0-2,0-2,0-2,0-2,0-2,0-2,0-2,0-2,0-2,0-2,0-2,0-2,0-2,0-2,0-2,0-2,0-2,0-2,0-2,0-2,0-2,0-2,0-2,0-2,0-2,0-2,0-2,0-2,0-2,0-2,0-2,0-2,0-2,0-2,0-2,0-2,0-2,0-2,0-2,0-2,0-2,0-2,0-2,0-2,0-2,0-2,0-2,0-2,0-2,0-2,0-2,0-2,0-2,0-2,0-2,0-2,0-2,0-2,0-2,0-2,0-2,0-2,0-2,0-2,0-2,0-2,0-2,0-2,0-2,0-2,0-2,0-2,0-2,0-2,0-2,0-2,0-2,0-2,0-2,0-2,0-2,0-2,0-2,0-2,0-2,0-2,0-2,0-2,0-2,0-2,0-2,0-2,0-2,0-2,0-2,0-2,0-2,0-2,0-2,0-2,0-2,0-2,0-2,0-2,0-2,0-2,0-2,0-2,0-2,0-2,0-2,0-2,0-2,0-2,0-2,0-2,0-2,0-2,0-2,0-2,0-2,0-2,0-2,0-2,0-2,0-2,0-2,0-2,0-2,0-2,0-2,0-2,0-2,0-2,0-2,0-2,0-2,0-2,0-2,0-2,0-2,0-2,0-2,0-2,0-2,0-2,0-2,0-2,0-2,0-2,0-2,0-2,0-2,0-2,0-2,0-2,0-2,0-2,0-2,0-2,0-2,0-2,0-2,0-2,0-2,0-2,0-2,0-2,0-2,0-2,0-2,0-2,0-2,0-2,0-2,0-2,0-2,0-2,0-2,0-2,0-2,0-2,0-2,0-2,0-2,0-2,0-2,0-2,0-2,0-2,0-2,0-2,0-2,0-2,0-2,0-2,0-2,0-2,0-2,0-2,0-2,0-2,0-2,0-2,0-2,0-2,0-2,0-2,0-2,0-2,0-2,0-2,0-2,0-2,0-2,0-2,0-2,0-2,0-2,0-2,0-2,0-2,0-2,0-2,0-2,0-2,0-2,0-2,0-2,0-2,0-2,0-2,0-2,0-2,0-2,0-2,0-2,0-2,0-2,0Z" fill="#d8ecec"/><g stroke="rgba(60,60,60,0.34)" stroke-width="1" shape-rendering="crispEdges"><line x1="1166.6" y1="318.9" x2="1798.0" y2="318.9"/><line x1="1166.6" y1="295.4" x2="1798.0" y2="295.4"/><line x1="1166.6" y1="281.7" x2="1798.0" y2="281.7"/><line x1="1166.6" y1="271.9" x2="1798.0" y2="271.9"/><line x1="1166.6" y1="264.4" x2="1798.0" y2="264.4"/><line x1="1166.6" y1="258.2" x2="1798.0" y2="258.2"/><line x1="1166.6" y1="253.0" x2="1798.0" y2="253.0"/><line x1="1166.6" y1="248.5" x2="1798.0" y2="248.5"/><line x1="1166.6" y1="244.5" x2="1798.0" y2="244.5"/><line x1="1166.6" y1="240.9" x2="1798.0" y2="240.9"/><line x1="1166.6" y1="217.4" x2="1798.0" y2="217.4"/><line x1="1166.6" y1="203.7" x2="1798.0" y2="203.7"/><line x1="1166.6" y1="193.9" x2="1798.0" y2="193.9"/><line x1="1166.6" y1="186.4" x2="1798.0" y2="186.4"/><line x1="1166.6" y1="180.2" x2="1798.0" y2="180.2"/><line x1="1166.6" y1="175.0" x2="1798.0" y2="175.0"/><line x1="1166.6" y1="170.5" x2="1798.0" y2="170.5"/><line x1="1166.6" y1="166.5" x2="1798.0" y2="166.5"/><line x1="1166.6" y1="162.9" x2="1798.0" y2="162.9"/><line x1="1203.6" y1="145.0" x2="1203.6" y2="319.4"/><line x1="1283.0" y1="145.0" x2="1283.0" y2="319.4"/><line x1="1362.4" y1="145.0" x2="1362.4" y2="319.4"/><line x1="1441.8" y1="145.0" x2="1441.8" y2="319.4"/><line x1="1521.2" y1="145.0" x2="1521.2" y2="319.4"/><line x1="1600.6" y1="145.0" x2="1600.6" y2="319.4"/><line x1="1680.0" y1="145.0" x2="1680.0" y2="319.4"/><line x1="1759.4" y1="145.0" x2="1759.4" y2="319.4"/></g><path d="M1166.6,157.9l2-.5 2,0 2-.2 2,.2 2,0 2-.1 2,.1 2-.1 2,.1 2,0 2-.1 2,.2 2,.3 2-.1 2,0 2,.3 2,.3 2,.2 2-.1 2,.6 2,.1 2,.6 2,.2 2,.1 2,.1 2-.5 2-.3 2-.6 2-.1 2-.1 2-.2 2-.2 2-.4 2-.4 2-.2 2-.7 2-2.3 2-2.5 2-.5 2-.3 2-.3 2,0 2-.1 2-.4 2-.1 2-.1 2,.1 2,0 2-.3 2,.2 2-.4 2-.1 2,0 2-.3 2-.1 2-.3 2,0 2,.2 2,.2 2,7.7 2,.7 2-1.1 2-1.2 2-1.2 2,1.6 2,2.1 2,2.1 2,1.7 2,1.9 2,1.5 2,1.9 2,1.9 2,2 2,1.9 2,1.6 2,1.7 2,1.9 2-.1 2,.1 2-.1 2,0 2-.1 2,.4 2-.1 2,.1 2-.1 2,.1 2-.4 2-.2 2-.1 2,.1 2-.1 2,0 2-.4 2-.3 2-.3 2-.2 2-.4 2-.8 2-.8 2-.7 2-.6 2-.5 2-.5 2-.6 2-.8 2-.5 2-.5 2-.5 2-.2 2-.2 2-.2 2-.2 2-.1 2-.5 2,0 2,0 2-.1 2-.1 2-.4 2-.3 2-.5 2-.1 2-.4 2,0 2,0 2,0 2,.2 2,0 2,0 2,0 2,.1 2,.2 2,.1 2,.5 2,.3 2,0 2,.3 2,.7 2,.7 2,.5 2,1 2,1 2,.7 2,.6 2,.5 2,.5 2,.6 2,.3 2,.1 2-.3 2-.3 2,.2 2-.1 2-.3 2,0 2-.4 2,0 2,.2 2,0 2,0 2-.5 2-.5 2-.7 2-.3 2-.5 2-.3 2-.7 2-.7 2-.3 2-.3 2-.4 2-.4 2-.5 2-.5 2-.8 2-.6 2-.2 2-.2 2-.1 2,.1 2,0 2,.3 2,.4 2,.1 2,.3 2,.4 2,.2 2-.1 2-.1 2-.1 2,0 2,.1 2,.6 2,.8 2,.7 2,.5 2,.6 2,.6 2,.2 2,.6 2,.8 2,.6 2,.6 2,.4 2,.3 2,.7 2,.3 2,.7 2,.5 2,0 2,0 2,.3 2,.1 2-.2 2-.1 2-.6 2-.6 2-.6 2-1.1 2-.7 2-.6 2-.8 2-1 2-.8 2-1.1 2-1.1 2-.5 2-.8 2-.8 2-.3 2-.1 2,.1 2,0 2-.3 2-.2 2-.1 2-.2 2,0 2-.1 2,0 2-.2 2,.2 2-.1 2,0 2,0 2,.2 2-.1 2,.7 2,.6 2,.6 2,.6 2,.3 2,.6 2,.5 2,.4 2,.9 2,.5 2-.5 2-.6 2-.8 2-.9 2-.7 2-.6 2-.2 2-.5 2-.2 2-.4 2-.4 2-.1 2-.3 2-.2 2-.2 2-.2 2-.5 2-.4 2-.4 2-.5 2-.3 2-.5 2-.4 2-.5 2-.2 2-.3 2-.3 2-.3 2-.6 2,.3 2,.7 2,.6 2,.2 2,.2 2,.5 2,.3 2,.4 2-.3 2,.2 2,.1 2,.2 2-.2 2,0 2,.1 2-.3 2,.2 2,.1 2-.2 2,.1 2-.2 2-.1 2,.2 2,.1 2-.4 2-.1 2,.4 2,1.6 1.4,.9" fill="none" stroke="#25405e" stroke-width="1.7"/><path d="M1166.6,157.2l2-.5 2,0 2-.2 2,.2 2,0 2-.1 2,.1 2-.1 2,.1 2,0 2-.1 2,.2 2,.3 2-.1 2,0 2,.3 2,.3 2,.2 2-.1 2,.6 2,.1 2,.6 2,.2 2,.1 2,.1 2-.5 2-.3 2-.6 2-.1 2-.1 2-.2 2-.2 2-.4 2-.4 2-.2 2-.7 2-2.3 2-2.5 2-.5 2-.3 2-.3 2,0 2-.1 2-.4 2-.1 2-.1 2,.1 2,0 2-.3 2,.2 2-.4 2-.1 2,0 2-.3 2-.1 2-.3 2,0 2,.2 2,.2 2,7.7 2,.7 2-1.1 2-1.2 2-1.2 2,1.6 2,2.1 2,2.1 2,1.7 2,1.9 2,1.5 2,1.9 2,1.9 2,2 2,1.9 2,1.6 2,1.7 2,1.9 2-.1 2,.1 2-.1 2,0 2-.1 2,.4 2-.1 2,.1 2-.1 2,.1 2-.4 2-.2 2-.1 2,.1 2-.1 2,0 2-.4 2-.3 2-.3 2-.2 2-.4 2-.8 2-.8 2-.7 2-.6 2-.5 2-.5 2-.6 2-.8 2-.5 2-.5 2-.5 2-.2 2-.2 2-.2 2-.2 2-.1 2-.5 2,0 2,0 2-.1 2-.1 2-.4 2-.3 2-.5 2-.1 2-.4 2,0 2,0 2,0 2,.2 2,0 2,0 2,0 2,.1 2,.2 2,.1 2,.5 2,.3 2,0 2,.3 2,.7 2,.7 2,.5 2,1 2,1 2,.7 2,.6 2,.5 2,.5 2,.6 2,.3 2,.1 2-.3 2-.3 2,.2 2-.1 2-.3 2,0 2-.4 2,0 2,.2 2,0 2,0 2-.5 2-.5 2-.7 2-.3 2-.5 2-.3 2-.7 2-.7 2-.3 2-.3 2-.4 2-.4 2-.5 2-.5 2-.8 2-.6 2-.2 2-.2 2-.1 2,.1 2,0 2,.3 2,.4 2,.1 2,.3 2,.4 2,.2 2-.1 2-.1 2-.1 2,0 2,.1 2,.6 2,.8 2,.7 2,.5 2,.6 2,.6 2,.2 2,.6 2,.8 2,.6 2,.6 2,.4 2,.3 2,.7 2,.3 2,.7 2,.5 2,0 2,0 2,.3 2,.1 2-.2 2-.1 2-.6 2-.6 2-.6 2-1.1 2-.7 2-.6 2-.8 2-1 2-.8 2-1.1 2-1.1 2-.5 2-.8 2-.8 2-.3 2-.1 2,.1 2,0 2-.3 2-.2 2-.1 2-.2 2,0 2-.1 2,0 2-.2 2,.2 2-.1 2,0 2,0 2,.2 2-.1 2,.7 2,.6 2,.6 2,.6 2,.3 2,.6 2,.5 2,.4 2,.9 2,.5 2-.5 2-.6 2-.8 2-.9 2-.7 2-.6 2-.2 2-.5 2-.2 2-.4 2-.4 2-.1 2-.3 2-.2 2-.2 2-.2 2-.5 2-.4 2-.4 2-.5 2-.3 2-.5 2-.4 2-.5 2-.2 2-.3 2-.3 2-.3 2-.6 2,.3 2,.7 2,.6 2,.2 2,.2 2,.5 2,.3 2,.4 2-.3 2,.2 2,.1 2,.2 2-.2 2,0 2,.1 2-.3 2,.2 2,.1 2-.2 2,.1 2-.2 2-.1 2,.2 2,.1 2-.4 2-.1 2,.4 2,1.6 1.4,.9" fill="none" stroke="#9a5040" stroke-width="0.8" opacity="0.7"/><path d="M1166.6,170l2-.2 2-1 2,1.3 2,0 2-.7 2,0 2,.4 2,.2 2-.4 2,.8 2,.4 2,.5 2-.5 2-.3 2-.4 2,.5 2-.1 2-.3 2,.1 2,.9 2,.7 2,0 2-.1 2,.8 2,.4 2,0 2-1.4 2-1.3 2-.2 2-.6 2-1 2,.1 2-.4 2-.2 2-1 2-.5 2-2.9 2-1.9 2-.9 2-.7 2-.3 2,.1 2-.6 2-.6 2,0 2-.3 2-.4 2-.2 2-.4 2-.1 2,.1 2,0 2,.5 2-.2 2,.1 2-.2 2-.1 2-.3 2,.3 2,4.5 2,2.2 2-.4 2-1.4 2-1.1 2,2.6 2,.4 2,2.5 2,1.6 2,1.7 2,2.4 2,1.2 2,1.4 2,1.8 2,2.3 2,.6 2,2 2,1.4 2-.1 2-.4 2-.5 2-1.1 2-.6 2-.7 2,1.2 2,.5 2-.3 2-.4 2,.4 2,.4 2,0 2-.4 2-.5 2-.3 2-.1 2-.4 2-.1 2-.5 2,.2 2,0 2-.5 2-.8 2,0 2-.8 2-.6 2-1.1 2-.5 2-.4 2-.3 2-.8 2-.3 2-.7 2-.3 2-.4 2-.1 2-.4 2-.5 2-.1 2-.1 2,.2 2,0 2,.3 2,0 2,.1 2,.3 2-.1 2-.2 2,.6 2-.4 2,.3 2,.2 2-.5 2,.5 2,.5 2,0 2,.2 2,.2 2-.5 2,.4 2,.8 2,1.2 2,1.1 2,1.1 2,.7 2,1.2 2,.8 2,.8 2,.4 2,.2 2,.1 2,.1 2-.3 2,.7 2,.2 2,.3 2,.3 2,.4 2,.1 2-.5 2,.6 2,.5 2,.1 2,.1 2,.1 2-.5 2,.3 2-.5 2-1 2-1 2-.4 2-1.1 2-.4 2-.2 2-.9 2-1 2-.9 2-.6 2-.4 2-.2 2-.1 2-.7 2-.5 2-.3 2,.2 2-.2 2,.2 2-.4 2-.3 2,0 2,.5 2,.4 2,.3 2-.1 2,.3 2,.4 2,.4 2,.2 2,1.2 2,.3 2,1.1 2,1.1 2-.1 2,.5 2,1 2,1.1 2,.8 2,.7 2,.7 2,1.5 2,.7 2,.8 2,0 2,.5 2,.9 2,0 2,.8 2,.3 2,.4 2-.5 2-1.1 2-.3 2-.8 2-1.2 2-1.4 2-1.3 2-1.3 2-1.4 2-1.7 2-1.3 2-1.4 2-.8 2-1.4 2,.2 2,.1 2-.7 2,.2 2-.1 2,.1 2-.5 2-.3 2-.2 2,.5 2-.1 2-.3 2-.2 2-.4 2-.5 2-.4 2,.5 2,.2 2,1.1 2,.2 2,.3 2,.7 2,.4 2,.6 2,1.2 2,1.1 2,.9 2-.2 2-.1 2-.2 2-.6 2-.4 2-1 2,.2 2-.2 2,.3 2,0 2-.3 2-.7 2,.3 2-.7 2-.2 2-.5 2-.5 2,.1 2,.2 2-.7 2-.2 2-.6 2-.2 2-.5 2-.7 2-.6 2-.6 2,.2 2-.3 2-.1 2,1 2,.9 2,.2 2,0 2,0 2,.1 2,.3 2-.3 2-.1 2-.1 2,.3 2,.6 2,.3 2-.2 2-.1 2,0 2-.1 2-.2 2-.4 2-.2 2,.7 2-.4 2,.1 2,.4 2,.9 2,.5 2,1.7 1.4,1.1" fill="none" stroke="#7a6a2a" stroke-width="1.5"/><path d="M1166.6,171.3l2-.6 2,0 2,1.6 2,.4 2-1.1 2-.5 2,.4 2,.5 2-.1 2,.1 2-.5 2,0 2,.6 2,.3 2,.4 2,.4 2-.5 2-.5 2-.3 2,.4 2,.5 2,.8 2,.5 2,.3 2,.5 2-.4 2-1 2-1.5 2-.2 2-1 2-.1 2-.5 2-.9 2-1 2-.7 2-.7 2-2.1 2-2.7 2-1.3 2-.3 2-.2 2-.4 2-.5 2,.1 2-.6 2,0 2,.1 2,.6 2,.1 2,.4 2-.2 2-.4 2-.3 2,.5 2,.2 2-.4 2-.6 2,.2 2,.6 2,6.3 2,.4 2-.3 2,0 2-2.2 2,0 2,1.1 2,1.8 2,2.1 2,1.2 2,2.5 2,2.2 2,1.5 2,.6 2,2.5 2,.7 2,2.1 2,1 2-.1 2-.3 2-.4 2,1.3 2-.1 2-.7 2-.5 2,.6 2,.1 2,.4 2-.6 2-.3 2-.4 2,.4 2-.6 2-.5 2-.5 2,0 2,.4 2,.1 2-.2 2,0 2-.2 2-.8 2-1 2,0 2-.3 2-1.1 2-.3 2-.7 2-.6 2-.6 2-.8 2-.7 2-.2 2-.2 2,.6 2-.6 2,.5 2-.6 2-.2 2,.2 2,.2 2-.4 2-.7 2-.2 2-.2 2,.7 2-.3 2-.1 2,.6 2-.5 2,.1 2,.5 2,.3 2-.5 2-.4 2,0 2,.3 2-.2 2,.9 2,1.3 2,.6 2,.6 2,1.4 2,.9 2,.5 2,1.1 2,.6 2,.6 2,.3 2,1 2,.6 2,.2 2,.5 2-.5 2-.2 2,.2 2,.7 2,.6 2-.1 2-.2 2,.1 2,.1 2,.6 2-.4 2,.4 2,.2 2,.1 2-.6 2-.9 2-1.2 2-1.1 2-1 2-.6 2-1.3 2-1.2 2-.4 2-1.1 2-.8 2-.2 2-.1 2-.7 2,.6 2,.3 2,.3 2-.5 2-.5 2-.3 2,.2 2,.4 2,0 2-.2 2,.1 2,.3 2,.4 2,.7 2,.7 2,.7 2,0 2,1 2,.2 2,.7 2,.4 2,.8 2,.2 2,.8 2,.8 2,.7 2,1.5 2,1.3 2,.9 2,.7 2,1 2,.4 2,.1 2,.8 2,.6 2,.9 2-.6 2-.7 2-.3 2-.4 2-.3 2-1.4 2-1.1 2-1.9 2-1.6 2-.8 2-1.3 2-1 2-1.6 2-1.1 2-1.1 2-.7 2,0 2,.1 2-.9 2-.3 2-.2 2-.6 2-.2 2-.4 2,.2 2-.1 2-.3 2,.1 2-.3 2-.5 2,0 2,.3 2,.1 2,.6 2,.2 2,1.1 2,.7 2,.2 2,.3 2,.9 2,1.1 2,.9 2-.2 2-.1 2-.2 2-.6 2-.4 2-1 2,.5 2-.1 2,.2 2-.1 2,.1 2,.3 2,.3 2-.5 2-.7 2,0 2-.7 2-.9 2,.3 2-.4 2,0 2-.4 2,0 2-.4 2-.8 2-.8 2-.3 2-.1 2,0 2-.2 2,.5 2,.3 2,.4 2,0 2,.3 2,.5 2,.9 2-.5 2,.1 2,.4 2,.4 2-.5 2-.4 2,.5 2,.4 2-.1 2-.7 2,.5 2-.3 2,.4 2,0 2,.2 2-.6 2,.5 2,.1 2,.7 2,2.4 1.4,1.6" fill="none" stroke="#20207a" stroke-width="1.5"/><path d="M1166.6,174.5l2-.9 2-.6 2,1.7 2,.1 2-.7 2-.1 2,.5 2,.6 2-.5 2,.3 2,.4 2-.5 2,.5 2-.3 2,.2 2,.2 2,.2 2-.2 2,0 2,.4 2,.3 2,.5 2,.3 2,.1 2-.1 2,.1 2-.9 2-1.2 2-.3 2-.3 2-.8 2-1.1 2-.7 2-1 2-.8 2-1 2-2.6 2-2.1 2-.7 2-.9 2-.2 2-.7 2,.3 2,.2 2,0 2-.5 2,.1 2-.1 2,.6 2-.4 2,.4 2,.5 2,.1 2,.2 2-.6 2,.4 2-.2 2,.5 2,.6 2,6.5 2,1.3 2-.1 2-2.6 2-2 2,1.6 2,0 2,2.3 2,1 2,2.3 2,.5 2,1.6 2,2.3 2,.3 2,.6 2,1.3 2,1.5 2,1 2-.1 2-.3 2-.3 2,1.2 2,.7 2-.8 2,.9 2-.6 2,0 2,0 2-.3 2,.3 2-.1 2-.2 2,.2 2-.7 2,.4 2-.1 2-.3 2-.2 2-.8 2,0 2-.5 2-.7 2-.3 2-.6 2-.8 2-.2 2-1 2,0 2-.7 2-.3 2,.1 2-.3 2-.1 2-.5 2-.8 2-.6 2-.5 2,.2 2-.1 2-.1 2,.3 2-.6 2-.4 2,.1 2-.5 2-.1 2-.1 2-.2 2,.5 2-.3 2,.4 2,.4 2-.1 2,.3 2,.1 2-.4 2,.6 2-.2 2,.2 2,.8 2,1.1 2,1.5 2,1.2 2,.8 2,.6 2,.4 2,1.2 2,1.1 2,.8 2,.8 2,.1 2,.7 2,.4 2-.2 2,.6 2-.3 2,.3 2,.1 2,.1 2-.2 2,.8 2-.2 2,.4 2,.8 2-.2 2-.1 2,.2 2-.6 2-.7 2-.6 2-1.3 2-1.1 2-1.1 2-1.3 2-.3 2-.6 2-.7 2-1.3 2,.1 2,0 2-.3 2,0 2-.3 2-.6 2-.6 2-.2 2-.3 2,.1 2,.5 2,.4 2,.5 2,.2 2-.3 2,.3 2,.3 2,.7 2,.5 2,.3 2,.8 2,1.1 2,.2 2,1 2-.1 2,.4 2,.4 2,1.7 2,1.7 2,1.5 2,.9 2,1.6 2,.5 2,.2 2,1 2,.6 2,.6 2,.6 2,.9 2-.1 2-.3 2-.6 2-.4 2-.9 2-.5 2-1 2-1.9 2-2 2-1.4 2-2.1 2-1 2-2 2-2 2-1.4 2,.3 2-.5 2-.7 2-.8 2-.6 2,0 2,.2 2,.3 2,.2 2-.6 2,.1 2-.1 2,.3 2,.3 2,.2 2-.7 2,.3 2,.7 2,.8 2-.2 2,.1 2,0 2,.2 2,1.2 2,1.1 2,.7 2,1 2-.1 2-.6 2-.8 2-.7 2,.2 2-.5 2,.1 2,.1 2-.2 2,0 2,.2 2,.4 2-.3 2-.3 2,.5 2-.3 2,.1 2-.3 2-.9 2-.3 2-.4 2,.1 2-.5 2-.1 2-.3 2-.6 2,0 2-.9 2,0 2-.2 2-.2 2,.2 2,.8 2,1 2-.2 2,.4 2,.4 2,.4 2-.4 2,0 2-.2 2,.5 2-.3 2,.5 2-.4 2-.3 2,.3 2-.1 2-.4 2,.2 2-.4 2,.4 2,.2 2,.6 2,.7 2,.8 2,1.8 1.4,1.3" fill="none" stroke="#86882a" stroke-width="1.5"/><path d="M1166.6,176.4l2-1.3 2-.1 2,1.1 2-.2 2-.6 2,.7 2,0 2,0 2,.5 2-.3 2,0 2,.1 2,.4 2,.3 2,.1 2-.2 2-.2 2-.3 2,.5 2,.4 2,.5 2-.1 2,.2 2,.6 2,.4 2-.6 2-1 2-.5 2-1.1 2-1 2-.9 2-.4 2-.3 2-1.1 2-.9 2-1.2 2-2.4 2-2.1 2-1.2 2-.5 2-.8 2,.3 2,.2 2-.7 2,.6 2-.5 2-.1 2,.6 2,.3 2,.1 2-.2 2-.5 2,.2 2-.1 2-.6 2,.4 2-.2 2,.5 2,.6 2,6.5 2,1.3 2-.1 2-2.6 2-2 2,1.6 2,.3 2,2 2,2.7 2,1.4 2,1.7 2,2 2,1.1 2,.4 2,1.9 2,2 2,1.7 2,1.3 2,.4 2,.1 2,0 2-.4 2-.6 2,.2 2-1 2,.1 2,.3 2,.1 2-.1 2-.5 2-.2 2-.2 2,0 2-.2 2,.1 2,.3 2-.6 2-.2 2-.1 2-.7 2-.5 2,.1 2-1 2-.4 2-.8 2,0 2,.1 2-.5 2-.9 2-.3 2-.5 2,.1 2-.3 2-.1 2,.2 2-.3 2-.4 2,.2 2-.6 2-.1 2-.4 2,.1 2-.7 2,.4 2-.4 2-.5 2-.1 2,0 2-.4 2,.2 2,.1 2,.4 2,0 2-.1 2-.3 2,.4 2,.4 2,0 2,.1 2,1.2 2,.8 2,.5 2,.5 2,1.3 2,1.3 2,.9 2,.8 2,.9 2,.5 2,1.1 2-.1 2,.3 2,.4 2,.4 2,0 2-.1 2,.2 2-.2 2,.6 2,.1 2,.6 2-.1 2,.1 2-.1 2,.2 2-.1 2-.6 2-.3 2-1.1 2-1 2-1 2-.8 2-.9 2-.7 2-.6 2-1.1 2-.4 2-.5 2-.9 2,.1 2,.2 2-.1 2-.8 2,.1 2-.2 2-.6 2-.5 2,.7 2,.2 2-.3 2-.3 2,.2 2-.3 2,.4 2,.3 2,.6 2,.8 2,.9 2,.3 2,1 2,.7 2,.9 2,.7 2,.9 2,.8 2,1.5 2,.7 2,1.3 2,1.2 2,1.4 2,.7 2,.9 2,.4 2,.1 2,.2 2,.2 2,.8 2-.1 2-.3 2-.6 2-.4 2-.9 2-.5 2-.5 2-2.1 2-1.2 2-1.6 2-1.5 2-1.5 2-1.2 2-1.9 2-1.2 2,.1 2-1 2-.3 2-.3 2-1 2-.3 2,.1 2,.4 2-.4 2,.4 2-.2 2-.2 2,.2 2-.7 2,.1 2,0 2-.4 2,.7 2,.4 2,.2 2,.5 2,.7 2,.3 2,.6 2,.5 2,.8 2,1 2-.4 2,.1 2-.4 2-.3 2-.5 2-.1 2,.7 2,.2 2,.4 2-.2 2-.1 2-.3 2,0 2-.1 2,0 2-.8 2-.1 2,.1 2-.3 2-.9 2-.5 2-.8 2-.4 2,.3 2-.1 2-.1 2-.1 2,0 2-.5 2,.2 2,.3 2,.5 2,.2 2,.4 2-.1 2,.5 2,.1 2,.3 2-.6 2-.4 2-.4 2,.4 2,.5 2,.1 2-.2 2,.3 2,.2 2,0 2-.4 2-.3 2-.1 2-.2 2,0 2,.5 2,1.1 2,.5 2,2.2 1.4,.9" fill="none" stroke="#3535a5" stroke-width="1.5"/><path d="M1166.6,183.3l2-.4 2-.7 2,2.8 2,0 2-1.3 2,0 2,.2 2,.6 2,.5 2-.1 2-.2 2-.4 2,.2 2-.3 2-.2 2-.4 2-.3 2,.5 2-.1 2,.9 2-.1 2,.9 2-.1 2-.2 2,.9 2-.1 2-.9 2-1.4 2-1.4 2-.4 2-.6 2-.6 2-.7 2-1.5 2-.6 2-.9 2-2.4 2-1.8 2-1.4 2-.2 2-.6 2-1.2 2-.7 2,.1 2,.4 2-.5 2-.1 2,.3 2-.3 2,.5 2,0 2-.5 2,0 2,.2 2,0 2,.3 2-.4 2,.5 2,.3 2,6 2,1.2 2-.8 2-1.1 2-.9 2,1.6 2,1.1 2,.8 2,1 2,.6 2,2.9 2,2 2,2 2,.3 2,1.3 2,2 2,1.6 2,.8 2-1.1 2-.3 2,.9 2-.4 2,.4 2,.1 2,.9 2-.8 2-.5 2-.7 2-.4 2-.1 2,.1 2,.3 2,.3 2-.7 2,.3 2,.3 2,.2 2-.4 2-.7 2-.1 2-.1 2-.3 2,0 2-.7 2-.9 2-.3 2,0 2-.8 2,0 2,.1 2-.8 2-.2 2,0 2-.3 2-.6 2-.4 2,.1 2,.2 2-.3 2-.7 2,.3 2,.1 2-.6 2-.1 2,.3 2,.4 2-.2 2-.1 2,0 2-.5 2-.3 2-.3 2,.3 2-.1 2,0 2-.3 2-.2 2-.4 2,0 2,1.7 2,.8 2,.5 2,1.2 2,1.3 2,.5 2,1.1 2,.7 2,1 2,.4 2,.2 2,1 2,.7 2,.2 2,.4 2-.1 2,.7 2,.2 2,.9 2,.5 2,.6 2,.7 2-.1 2-.3 2,0 2,.1 2,.1 2-.4 2-.5 2-.6 2-1.1 2-.5 2-.8 2-1.7 2-1 2-1.3 2-1.5 2-.6 2-1.2 2-.3 2-.2 2,.1 2-.3 2-.6 2-.5 2-.8 2,.6 2,.5 2-.5 2-.5 2-.2 2-.1 2,.6 2,.5 2,.4 2-.4 2,.7 2,.8 2,.7 2,1 2,0 2,.2 2,1 2,1.1 2,.7 2,.4 2,1.6 2,1.8 2,1.1 2,1.4 2,1.4 2,.8 2,.9 2,.5 2,.6 2,.6 2,1.2 2,.3 2,.9 2-.6 2-.8 2,.3 2-.7 2,.2 2-.5 2-1.6 2-2.4 2-2.1 2-2.4 2-1.3 2-1.6 2-1.9 2-1.5 2-.9 2-.2 2-.7 2-.5 2-1.1 2-.9 2-.6 2,.3 2,0 2-.4 2,.4 2-.3 2-.2 2-.4 2-.2 2,.4 2-.2 2,0 2,.5 2,.3 2,.9 2,.1 2,1.3 2,.1 2,1.2 2,.8 2,.3 2,.1 2-.2 2-.3 2-.2 2,0 2,.8 2,.9 2,.8 2-.3 2,.1 2,.8 2-.5 2,.1 2-.4 2,.4 2-.9 2,.1 2-.4 2-.7 2-.7 2,.3 2-.1 2-.6 2-.2 2,.3 2-.6 2-.3 2-.8 2-.6 2,.6 2,.5 2,0 2-.2 2,0 2,.6 2,.4 2,.1 2-.2 2,.3 2,.4 2,.3 2,.1 2-.4 2-.4 2,.4 2-.1 2,.3 2-.5 2,.4 2-.1 2,.4 2,.3 2-.1 2-.2 2,1.5 2,1.3 2,2.5 1.4,1.1" fill="none" stroke="#7a9a30" stroke-width="1.5"/><path d="M1166.6,189.8l2-.6 2-1.1 2,2.6 2,.1 2-.6 2-.4 2,.2 2,.1 2,.2 2-.3 2,.4 2,.5 2,.5 2-.3 2,.3 2-.1 2,.3 2-.6 2,.5 2,.7 2,.1 2,.2 2,.2 2,.1 2-.1 2,.8 2-1.8 2-1.7 2-1.5 2-1.3 2-.6 2-1.6 2-1.4 2-.7 2-1.1 2-1.5 2-1.9 2-1.9 2-1 2-.5 2-1.2 2-.1 2,.2 2-.7 2-.3 2,.2 2,.1 2-.1 2-.3 2,.2 2-.2 2,.3 2,.6 2-.3 2,.2 2,.4 2-.3 2,.5 2,1 2,5.4 2,.7 2,.4 2-1 2-2 2,1.2 2,.8 2,.1 2,1.3 2,1.6 2,1.9 2,3.1 2,2.3 2,2 2,1.6 2,1.6 2-.4 2,.9 2,.8 2,.9 2-1 2-.3 2,.3 2-.3 2,.1 2-.6 2,0 2,0 2-.5 2-.3 2,.7 2,.3 2,.4 2,.1 2,.2 2,.3 2,.3 2-.9 2-.2 2-.6 2-.1 2-.5 2-.1 2,.3 2-.2 2-.5 2-.2 2-.3 2,.3 2-.5 2-.5 2,0 2-.6 2,0 2,.4 2-.2 2-.5 2-.2 2-.1 2-.6 2-.4 2-.5 2-.1 2-.1 2-.1 2-.2 2-.3 2,.3 2,.5 2,.1 2,.1 2,.1 2-.4 2,.2 2-.3 2-.4 2-.3 2-.4 2,0 2,.6 2,.6 2,.9 2,.8 2,1 2,.3 2,.8 2,1.4 2,.5 2,1 2,.5 2,.1 2,.8 2,0 2,.5 2-.2 2,0 2,.8 2,.4 2-.1 2,.3 2,.5 2,.7 2,0 2,.3 2,1.1 2,.8 2-.5 2-1.2 2-1.4 2-1 2-1.1 2-.9 2-1 2-1.3 2-1.2 2-1.1 2-1.2 2-1.1 2-.4 2-.5 2-.2 2-1.1 2-.2 2-1.2 2-.2 2,.1 2-.1 2,.4 2,0 2-.2 2,.2 2,.3 2-.1 2-.2 2,.1 2,.2 2,.8 2,.4 2,.5 2,.8 2,.5 2,.5 2,1.1 2,1 2,.7 2,1.7 2,1.5 2,1.7 2,1.6 2,2.1 2,1.5 2,.5 2,1.5 2,.8 2,1.3 2,1.2 2,1.4 2,0 2-.4 2,.1 2-1.1 2-.8 2-.2 2-.8 2-1.7 2-2 2-2.2 2-1.8 2-2.3 2-2.4 2-2.1 2-1.8 2-1 2-.6 2-1 2-.2 2-.6 2-.8 2-.8 2-.3 2-.2 2,0 2,0 2,.3 2,.3 2-.3 2-.3 2,0 2,.3 2-.1 2,.2 2,.6 2-.2 2,.1 2,1.2 2,1 2,.5 2,.1 2,1.1 2,.4 2,.4 2,.6 2,.3 2-.1 2-.3 2,.2 2,.5 2,.5 2,.2 2,.3 2,.3 2,.1 2-.3 2,.5 2-.2 2-.8 2-.2 2,.1 2-.4 2,0 2-.8 2-.3 2,.2 2-.1 2,0 2-.8 2-.4 2-.3 2-.2 2,.4 2,.3 2,.8 2,.1 2,0 2-.2 2-.2 2,.4 2-.4 2-.3 2-.2 2,.2 2,.6 2,.2 2,.3 2-.5 2-.4 2,.4 2-.1 2,.3 2-.1 2-.3 2-.1 2,.2 2,1.9 2,1.8 2,2.2 1.4,1.5" fill="none" stroke="#5a35a5" stroke-width="1.5"/><path d="M1166.6,191.5l2-1.5 2-.4 2,3.2 2,.5 2-1 2,.2 2-.3 2-.5 2,.6 2,.4 2-.2 2,.5 2,.2 2-.3 2,.1 2,.5 2-.2 2,.5 2-.5 2,0 2,.4 2-.1 2,0 2,.7 2,.3 2,.6 2-1.9 2-1.7 2-1.3 2-1.5 2-.5 2-1.5 2-1 2-1.6 2-.7 2-1.3 2-2.2 2-2.6 2-1.4 2-.2 2-.9 2-.8 2-.2 2-.3 2,0 2-.3 2,.5 2,.1 2-.2 2,.5 2-.2 2-.1 2,.7 2-.3 2,.1 2,.6 2,.4 2-.3 2,.5 2,5.4 2,.7 2,.8 2-1.6 2-.5 2,0 2,.3 2,.1 2,1.3 2,2.7 2,1.6 2,3.2 2,1.9 2,1.5 2,1.6 2,1.6 2-.4 2,2.1 2-.4 2,.9 2-.7 2-.3 2,1 2,0 2,.6 2,.2 2-.3 2-.1 2-.4 2-.3 2,.6 2-.2 2,.3 2-.4 2,.3 2,0 2,.1 2-.3 2-.5 2-.2 2-.3 2-.4 2,.4 2-.2 2-.1 2,.5 2,.2 2,.3 2,.1 2-.7 2-.6 2-.6 2,.1 2,.1 2-.3 2-.2 2,.1 2,0 2-.4 2,.2 2-.3 2-.1 2-.5 2-.5 2,.4 2,.2 2,.1 2-.6 2-.6 2-.3 2-.3 2,0 2,0 2-.4 2-.3 2-.1 2-.7 2,.2 2,.3 2,1.1 2,.4 2,.8 2,1 2,.6 2,.2 2,1.3 2,1.1 2,.4 2,.3 2,1 2,.3 2-.3 2,0 2-.1 2,.7 2,.1 2,.9 2,.7 2-.2 2,.6 2,.2 2,.7 2,.7 2,.1 2,0 2,1 2-.2 2-.7 2-1.2 2-1.2 2-1.1 2-1.3 2-1.6 2-1.9 2-1.1 2-1.5 2-1.3 2-.5 2-1.1 2-.3 2-.7 2-.6 2-.1 2-.9 2-.4 2,.5 2,0 2,0 2-.4 2-.5 2,.1 2,.3 2-.1 2-.2 2,.1 2,.2 2,1 2,.5 2,.5 2,.8 2,.8 2,1.2 2,.5 2,.5 2,1.3 2,1.5 2,2.1 2,1.8 2,2.3 2,2 2,1.6 2,.5 2,1.2 2,1 2,.9 2,1.2 2,1.2 2,.1 2-.5 2-.5 2-.6 2-.7 2-.4 2-1 2-1.9 2-2.2 2-2.5 2-2 2-2.3 2-2.4 2-2.1 2-1.8 2-1 2-.4 2-.3 2-1.1 2-.5 2-.1 2-.3 2-.6 2-.1 2-.1 2-.4 2,0 2,0 2-.1 2,.1 2,0 2,.3 2,.3 2-.1 2,0 2-.1 2,0 2,1.2 2,1.1 2,.4 2,.4 2,.9 2,.7 2,.7 2-.2 2,.5 2,.5 2,.5 2,.2 2,.1 2,1 2,.3 2,.4 2,.2 2-.3 2,.3 2-.5 2-.7 2,0 2,0 2,.2 2,0 2,.1 2,.2 2-.5 2-.3 2-.8 2-.5 2-.3 2-.8 2-.1 2-.3 2,.2 2,.8 2-.3 2-.3 2,.3 2,0 2,.6 2-.5 2,.6 2,.5 2,.3 2-.1 2-.3 2,.2 2,0 2-.1 2-.2 2,0 2,.2 2,.4 2,.4 2-.5 2-.3 2,.6 2,1.4 2,1.4 2,2.1 1.4,1.2" fill="none" stroke="#2e8a2e" stroke-width="1.5"/><path d="M1166.6,193.1l2-1 2-.5 2,3.7 2,.3 2-.5 2,.3 2-.2 2,.2 2-.7 2,.1 2,0 2-.3 2,.1 2,.4 2-.1 2,.1 2-.3 2-.1 2,.4 2-.4 2,0 2,.5 2,.2 2-.2 2,.8 2,.2 2-1.4 2-1.4 2-1.2 2-1.1 2-1.4 2-1.6 2-1.5 2-.6 2-.8 2-1.7 2-1.6 2-2.5 2-1.5 2-.7 2-1.1 2-.5 2,.1 2-.3 2,.2 2-.3 2,.3 2,.2 2-.3 2,.1 2-.3 2,.2 2,.7 2,.1 2,.4 2,.3 2-.5 2,.8 2,.7 2,4.5 2,1.8 2-.8 2-1.6 2-.4 2,.1 2,.8 2-.3 2,2.9 2,.9 2,1.6 2,2.2 2,1.9 2,1.5 2,1.6 2,1.6 2,.4 2,1.3 2,.9 2,.5 2,1 2,.1 2,1 2,.7 2-1.1 2-.2 2-.3 2,.2 2,.1 2,.2 2-.6 2-.2 2,.2 2,.5 2,.2 2-.6 2,.1 2-.6 2,0 2,.2 2-.7 2,.4 2,0 2-.4 2-.5 2-.1 2,.4 2-.1 2-.5 2-.6 2-.6 2,.4 2-.4 2,.1 2-.3 2,.2 2-.2 2-.5 2,.4 2,0 2,0 2,.2 2,.3 2-.9 2-.3 2-.4 2-.1 2,.4 2,.3 2-.7 2-.4 2,.3 2,.1 2-.2 2-.4 2-.9 2-.1 2-.6 2,.6 2,.9 2,.2 2,.6 2,.5 2,1.3 2,.8 2,.3 2,.4 2,.8 2,.8 2,.7 2,.2 2,.1 2-.2 2,.5 2,.2 2-.1 2,.6 2,1 2,0 2,.1 2,.7 2,.2 2,.4 2,.6 2,.4 2,.8 2,0 2-.6 2-.8 2-2 2-1.3 2-1.1 2-1 2-1.2 2-1.4 2-1.3 2-1.7 2-1.3 2-.3 2-.3 2-.2 2-.5 2-1 2-.4 2-.4 2-.2 2,0 2-.3 2,0 2-.2 2-.5 2-.1 2-.1 2,.7 2,.2 2,.1 2,.5 2,.4 2,.7 2,.4 2,.3 2,1.4 2,.7 2,.8 2,1 2,1.8 2,1.8 2,1.7 2,2 2,2 2,1.9 2,1.2 2,1.6 2,.7 2,1.5 2,1 2,.5 2,.3 2,0 2,.3 2-.5 2-.1 2-.4 2-.6 2-2.9 2-2.4 2-1.9 2-2.6 2-2.7 2-2.8 2-2.6 2-1.7 2-.4 2-.9 2-.8 2-1 2-.5 2-.2 2-.1 2-.5 2,.2 2,.4 2-.2 2-.6 2,.2 2,.2 2-.4 2-.6 2-.5 2,.4 2,.7 2,.4 2,.7 2,0 2,.4 2,.9 2,.8 2,.5 2,.8 2,.1 2-.2 2,.3 2-.1 2,.6 2,.3 2,.7 2,.9 2,.4 2,.7 2,.1 2,.9 2,0 2,.4 2-.7 2-.1 2,.1 2-.4 2-.7 2-.5 2-.4 2,.3 2-.6 2,.4 2-.2 2-.2 2-.2 2-.4 2-.2 2,.1 2,0 2,.4 2-.1 2,.4 2,.4 2,.4 2-.2 2,.2 2,.5 2-.3 2-.3 2-.1 2,.5 2-.5 2-.6 2,.1 2,.2 2,.4 2-.2 2,.6 2-.4 2,.2 2-.5 2,.1 2,1.1 2,1.4 2,2.7 1.4,1.8" fill="none" stroke="#6a3aa0" stroke-width="1.5"/><path d="M1166.6,193.8l2-.5 2-1.2 2,3.2 2,.3 2-.5 2,.3 2-.2 2,.2 2-.7 2,.1 2,.3 2,0 2,.2 2-.2 2,.4 2,0 2-.2 2,.5 2-.5 2,.5 2-.3 2,.5 2,.2 2,.6 2-.1 2,.5 2-1.6 2-1 2-.8 2-1.3 2-1.7 2-1.6 2-1.5 2-1.3 2-1.1 2-1.5 2-1.7 2-2 2-1.3 2-.3 2-1.2 2-.6 2-.5 2,.4 2,.4 2-.3 2,.3 2,.4 2-.3 2-.2 2,0 2,.5 2-.4 2,.3 2,.1 2-.1 2,.2 2,.5 2,.1 2,6.1 2,.4 2,.2 2,0 2-2.9 2,.9 2,1.1 2-.1 2,1.1 2,1.2 2,3.6 2,.9 2,3.1 2,.5 2,2.2 2,.5 2,.8 2,1.9 2-.8 2,.5 2,1.2 2,.8 2,1.1 2,1.1 2-1.3 2-.4 2,.4 2,.1 2-.6 2,.1 2-.3 2,0 2-.3 2-.3 2,.9 2-.1 2,.7 2-.5 2-.1 2-.5 2,0 2-.4 2,.3 2-.3 2,.3 2,0 2-.4 2-.1 2,.1 2,.5 2-.4 2-.5 2,.5 2,.2 2,0 2-.5 2-.5 2-.4 2-.6 2-.5 2,.1 2,0 2,.1 2-.2 2-.5 2,.3 2,.2 2,0 2-.1 2,.2 2,.4 2,.2 2-.1 2-.4 2-.7 2-.7 2-.1 2-.8 2-.1 2,.5 2,.3 2,1.4 2,.1 2,.8 2,1.2 2,.4 2,.8 2,.6 2,.4 2,.2 2-.2 2,.7 2,.6 2,.6 2-.4 2,.5 2,.2 2,.5 2,.3 2,.1 2,.9 2-.3 2,.7 2,.8 2,.5 2,.5 2,.3 2-1.7 2-1.3 2-1.2 2-1.6 2-1.2 2-1.6 2-1.4 2-1.3 2-1.3 2-1.6 2-.9 2-.7 2-.7 2-.2 2-.5 2-.8 2-.6 2-.3 2-.1 2-.1 2-.3 2-.1 2,.2 2,.1 2,0 2,0 2,.4 2-.1 2-.2 2,1.2 2,.6 2,.8 2,1 2,1.1 2,.9 2,0 2,.5 2,1.2 2,2.3 2,1.4 2,1.7 2,1.8 2,1.7 2,1.5 2,1.5 2,1.1 2,1 2,.8 2,1 2,1.5 2,.9 2-.2 2-.4 2,0 2-.1 2-.8 2-.7 2-2.6 2-2.4 2-2.6 2-2.5 2-2.5 2-2.4 2-2.8 2-1.9 2-.5 2-1.1 2-1 2-.3 2-.9 2-.6 2-.1 2-.1 2-.2 2,.4 2-.1 2-.5 2,0 2,.2 2-.1 2-.3 2-.6 2,.3 2,.3 2,.5 2,.6 2,0 2,.8 2,1 2,.5 2,.5 2,.8 2,.9 2-.2 2,.9 2,.4 2,.1 2,.5 2,.4 2,.1 2,1 2,.5 2,.7 2,.2 2,.3 2,.1 2-.8 2-.1 2-.2 2-.3 2,.2 2-.3 2-.3 2,.3 2-.4 2-.3 2-.2 2,.1 2-.4 2-.2 2-.7 2-.5 2,.3 2,.2 2,.5 2,.3 2-.4 2,0 2-.2 2,.3 2,.4 2-.3 2-.3 2,.2 2,.2 2-.3 2,.4 2,0 2-.5 2,.4 2-.1 2,.2 2,.6 2,.3 2,.3 2,0 2,1.2 2,1.7 2,1.8 1.4,2.2" fill="none" stroke="#2e8a3e" stroke-width="1.5"/><path d="M1166.6,202.1l2-1.5 2-1.3 2,3.9 2,.7 2-1 2,.1 2-.1 2-.4 2,0 2,.6 2,.4 2,.4 2-.3 2-.3 2-.4 2,.2 2,0 2,.1 2,.2 2,.3 2,.1 2,.7 2-.2 2,.7 2,.6 2-.1 2-1.9 2-1.5 2-1.6 2-1.4 2-1.6 2-1.7 2-1.1 2-1.7 2-.8 2-1 2-2.1 2-2.2 2-.9 2-1.2 2-.7 2-1.3 2-.2 2,.1 2-.5 2,.6 2-.4 2,.3 2-.3 2,.7 2,.1 2,.4 2,.1 2,.2 2,.2 2-.3 2-.2 2,.5 2,.3 2,5.3 2,.1 2-1 2-1.4 2-.7 2,1 2-.5 2,1 2,1.6 2,3.3 2,2.5 2,1.1 2,.7 2,2 2,.2 2,2.4 2,.8 2,.4 2,.4 2-.1 2,.6 2-.5 2,1.5 2-.1 2,1.1 2-.4 2,.5 2,.5 2-.2 2-.6 2,0 2,.2 2-.2 2,.2 2-.2 2,.2 2,.6 2-.1 2,.2 2-.5 2,.4 2-.4 2,.5 2,.6 2,.3 2-.1 2-.4 2-.2 2,.2 2-.1 2,.3 2-.8 2-.2 2,.3 2-.1 2-.2 2-.7 2-.5 2-.3 2,.5 2,.3 2-.5 2,.3 2-.7 2,0 2,.4 2-.4 2,.3 2-.1 2-.8 2-.4 2-.1 2-.4 2,.2 2-.8 2-.3 2-1 2-1 2,.3 2,.4 2,1 2,1.2 2,.9 2,.7 2,.3 2,.9 2,.4 2,1.1 2,.4 2,.8 2,.2 2,.3 2,.6 2,0 2,0 2,1.1 2,.4 2,.9 2,.9 2,.3 2,.1 2,0 2,1.1 2,.3 2,.9 2,.9 2-.4 2-1.3 2-1.8 2-1.4 2-1.4 2-1.6 2-1.8 2-1.5 2-1.7 2-1.8 2-1.7 2-.4 2-.7 2-.2 2-1.2 2-.2 2-.7 2-.4 2-.6 2,.1 2-.5 2,.3 2-.5 2-.3 2-.5 2,.1 2,.1 2-.1 2,.8 2-.2 2,.9 2,.5 2,1 2,1.1 2,.9 2,.2 2,.6 2,.9 2,1.5 2,1.8 2,2.6 2,2.6 2,2.7 2,2.2 2,2 2,1.1 2,1.6 2,.5 2,1.7 2,1.1 2,1 2,.5 2-.2 2,.2 2,0 2-.6 2-.3 2-1.2 2-2.9 2-2.9 2-2.7 2-1.9 2-2.2 2-2.4 2-2.9 2-2 2-.8 2-.6 2-.9 2-1 2-1.6 2-.9 2,0 2,0 2-.8 2,.1 2-.4 2-.6 2,.4 2,0 2,0 2-.7 2,.2 2,.5 2,.5 2,.3 2,.3 2,.4 2,.5 2,.4 2,.8 2,.8 2,.9 2,.1 2,.9 2,.4 2,.9 2-.1 2,1 2,1 2,.3 2,1.1 2,.4 2,.5 2,.2 2-.3 2-.1 2,.5 2,0 2,0 2-.4 2,.1 2,.1 2-.1 2,.2 2,0 2-.5 2-.8 2-.1 2-.1 2-.7 2-.4 2,.3 2,.3 2-.7 2,.1 2-.5 2-.3 2,.6 2,.1 2,.2 2,0 2-.1 2-.2 2,0 2,.5 2,.2 2-.2 2-.4 2-.1 2,.4 2,.1 2,.2 2,.4 2-.4 2,.3 2,.3 2,2.2 2,1.6 2,2.4 1.4,2.3" fill="none" stroke="#6a35a0" stroke-width="1.5"/><path d="M1166.6,202.7l2-1.6 2-.7 2,4.2 2,.5 2-1.3 2,0 2,.5 2-.1 2,.5 2-.5 2,.3 2-.5 2,.1 2-.5 2-.3 2,.7 2,0 2,.4 2-.2 2,0 2-.2 2,.5 2,.6 2,.2 2,.4 2,.9 2-1.4 2-1.6 2-2.1 2-1.5 2-1.6 2-1.1 2-1.8 2-1.4 2-1 2-1.6 2-2.1 2-2 2-.9 2-1.2 2-1.2 2-.4 2-.7 2,.3 2,.2 2,0 2,0 2,.3 2,.4 2,.1 2,.2 2-.6 2-.2 2,.2 2,.2 2,.5 2-.4 2,.2 2,.7 2,4.6 2,.1 2,.4 2-.3 2-2.3 2,.4 2-.8 2,1 2,1.9 2,3.5 2,2.4 2,2.8 2,1.9 2,.7 2,2.1 2,1.4 2,1.4 2,0 2-1.2 2,.4 2,1 2,.7 2-.5 2-.8 2,.3 2,.7 2-.3 2,.3 2-.4 2-.1 2-.3 2,0 2,0 2,.8 2,.7 2-.2 2-.1 2,.6 2-.5 2-.2 2-.1 2-.3 2,0 2,.6 2,.3 2-.1 2-.3 2-.3 2,.6 2,0 2,.2 2,0 2,.1 2-.5 2-.6 2,.2 2-.2 2,0 2,0 2,.1 2-.5 2-.3 2,.3 2-.1 2-.5 2,0 2-.4 2,.1 2-.5 2,.1 2-.1 2-.3 2,.3 2-.5 2-.8 2-1.1 2-.6 2-.3 2,.3 2,.7 2,1.1 2,.2 2,.6 2,1 2,1.3 2,.8 2,.8 2,.9 2,.5 2,.9 2,.4 2-.1 2,0 2,.6 2,0 2,0 2,.9 2,.4 2,.5 2,.6 2,.8 2,0 2,.3 2,.3 2,.7 2,.9 2,.5 2-1.2 2-1.6 2-1.7 2-1.5 2-1.9 2-1.1 2-1.3 2-1.3 2-2.2 2-1.4 2-.9 2-.9 2-.4 2-.4 2-.7 2-.6 2-.8 2-.5 2-.7 2,.1 2,0 2,0 2-.5 2-.5 2,.1 2,.3 2-.3 2-.1 2,0 2,.6 2,.9 2,1.3 2,1.1 2,.5 2,.9 2,.2 2,1.1 2,.7 2,1.9 2,2.6 2,2.5 2,2.7 2,2.2 2,2 2,1.1 2,1.6 2,.5 2,1.7 2,1.1 2,1 2,.8 2,0 2-.3 2,.1 2-.4 2,.2 2-1.2 2-2.3 2-2.4 2-2.7 2-3.4 2-2.3 2-2.7 2-2.9 2-2 2-.8 2-.6 2-.9 2-1 2-1.6 2-.9 2,0 2,0 2-.6 2,.4 2,.1 2,.1 2-.5 2,.2 2-.9 2-.2 2-.4 2,.5 2,.5 2,.3 2,.3 2,.4 2,.5 2,.4 2,.8 2,.8 2,.9 2,.1 2,.9 2,.4 2,.9 2-.1 2,1 2,1 2,.3 2,1.1 2,1 2,1.3 2,.6 2-.1 2-.1 2-.8 2-.6 2-.1 2-.2 2,.1 2,0 2-.2 2,.2 2,0 2-.5 2-.2 2-.5 2-.3 2-.7 2-.4 2,.3 2,.3 2-.2 2-.4 2-.3 2-.2 2,.6 2,.1 2,.7 2,.4 2,.3 2-.2 2,.3 2-.6 2-.4 2,.1 2,.1 2-.3 2-.1 2-.2 2,.5 2,.3 2,.5 2,.5 2,.6 2,1.9 2,1.7 2,2.8 1.4,2" fill="none" stroke="#2e8a2e" stroke-width="1.5"/><path d="M1166.6,209.1l2-1.8 2-1.5 2,5 2,.1 2-1.7 2,.6 2,.5 2,0 2-.4 2,.6 2,.1 2-.4 2,0 2,.3 2,.5 2,0 2,.2 2-.3 2-.2 2,.7 2,0 2-.2 2,.4 2-.2 2,.3 2,.7 2-1.6 2-1.6 2-1.5 2-1.8 2-2.2 2-1.4 2-2.1 2-1.7 2-1.2 2-1.1 2-1.8 2-2.4 2-1.1 2-1 2-1.2 2-1.2 2,.5 2,0 2-.4 2-.1 2,.7 2-.2 2,.1 2,.5 2,.4 2,.2 2,.3 2-.5 2-.3 2,.7 2,.4 2-.4 2,.3 2,2.8 2,2.5 2-.6 2,.1 2-.7 2-.4 2,.3 2-.5 2,1.7 2,1.6 2,3.5 2,1.7 2,3.6 2,2 2,.7 2,2.3 2,.6 2,1.2 2-.8 2,1.2 2,1.3 2,1.1 2-1.3 2,1.1 2,.2 2,.1 2,0 2,.2 2,.1 2,.3 2-.5 2-.4 2,.2 2,.1 2,.2 2-.2 2,.7 2-.3 2,.7 2,.5 2,0 2-.3 2,.5 2-.1 2,.2 2-.2 2,.9 2,.3 2,0 2-.2 2,.3 2,.3 2,.2 2-.6 2-.3 2-.2 2,.2 2-.5 2,.1 2,.5 2,.1 2-.8 2-.5 2-.5 2,.3 2,0 2-.2 2-.2 2-.3 2,0 2-.1 2,.2 2-.1 2,0 2-.4 2-.8 2-1 2-1.6 2-.1 2,.9 2,.3 2,.9 2,.1 2,1 2,.4 2,.7 2,.2 2,.4 2,.4 2,.3 2-.2 2,.3 2,.9 2,.3 2,.7 2,.6 2,.6 2,.8 2,.4 2,0 2,0 2,.2 2,0 2,.6 2,1.3 2,1.3 2-.4 2-1.3 2-1.5 2-1.4 2-1.6 2-1.9 2-2.4 2-1.4 2-2 2-1.7 2-1.9 2-1.2 2-.4 2-1.4 2-.8 2-.7 2-.8 2-.4 2-1 2,.3 2,0 2,.3 2-.8 2-.4 2-.3 2,.4 2-.6 2-.2 2,.5 2,.7 2,.3 2,.7 2,1 2,.9 2,1 2,1 2,.3 2,.5 2,.4 2,3 2,2.4 2,2.6 2,3.3 2,2.9 2,2 2,1.6 2,1.4 2,1.5 2,1.1 2,.9 2,1 2,.8 2,.2 2-.3 2-.2 2,.2 2,.7 2-.7 2-3.3 2-2.6 2-3.4 2-3.4 2-3.1 2-3 2-2.7 2-2.1 2-.9 2-1.5 2-.6 2-1.3 2-.8 2-1.7 2,.1 2-.5 2,.2 2,.2 2-.1 2-.5 2-.8 2-.4 2,.4 2-.5 2,.1 2,.2 2,.3 2-.3 2-.2 2,0 2,1.4 2,.6 2,.9 2,.8 2,.3 2,.4 2,.4 2,1.4 2,.5 2,1.5 2,.7 2,1.4 2,.6 2,1.4 2,.8 2,.9 2,.5 2-.4 2-.2 2,.4 2-.2 2-.2 2,.3 2-.3 2-.4 2-.3 2,0 2-.1 2,.2 2,0 2,.3 2-.9 2-.2 2,.1 2-.5 2-.4 2,0 2-.3 2,.1 2,.4 2-.3 2-.3 2,.2 2-.1 2-.1 2,.3 2-.2 2-.2 2,.2 2,.2 2,.8 2,.2 2-.4 2-.1 2,.5 2,.2 2,.5 2,.5 2,1.2 2,1.4 2,2.6 2,2.7 1.4,1.3" fill="none" stroke="#2e8a4a" stroke-width="1.5"/><path d="M1166.6,210.9l2-1 2-1.7 2,4.4 2,0 2-.7 2,.1 2,.3 2-.4 2,0 2,0 2-.2 2,.4 2,0 2-.3 2,.7 2,.1 2-.3 2-.4 2,.4 2,.3 2-.2 2,.3 2,.6 2,.2 2,.4 2,.7 2-1.8 2-1.7 2-2.1 2-1.4 2-1.3 2-1.6 2-1.5 2-2.2 2-.9 2-1.9 2-2.5 2-2 2-.9 2-1.8 2-1.5 2-1.2 2,.1 2-.3 2-.1 2,.7 2,.3 2,.7 2,0 2,.3 2-.4 2,.7 2-.2 2,.1 2,.2 2,.6 2,.1 2,.6 2,.8 2,3.7 2,1.7 2-.9 2,.7 2-2.3 2-1.5 2,.5 2-.3 2,2.4 2,2.4 2,3.1 2,1.5 2,2.1 2,1.7 2,2 2,1 2,1.6 2,.8 2,.3 2,.7 2,.9 2,.3 2-1 2,.8 2,.6 2,.2 2-.1 2,.3 2,.4 2,.6 2-.3 2-.1 2-.1 2,.5 2,.4 2,.3 2,.8 2,.3 2,.5 2,.5 2-.3 2,.6 2-.1 2-.4 2,.7 2-.3 2-.2 2,.1 2,.1 2,.9 2,.4 2-.3 2-.1 2,.3 2,.1 2-.1 2-.2 2-.6 2-.4 2,.1 2,0 2,.2 2,.3 2,.2 2-.6 2-.9 2,.2 2-.2 2-.7 2,0 2-.6 2-.5 2-.3 2-.1 2-.4 2-1.5 2-.7 2-.8 2-.2 2,.8 2,.8 2,0 2,.6 2,.8 2,.8 2,.7 2,.1 2,1.1 2,.8 2,0 2,0 2,.7 2-.2 2,.1 2,.7 2,.7 2,0 2,.6 2,.2 2,.5 2,.7 2-.1 2,.2 2,.6 2,.6 2,.5 2-.3 2-1.5 2-1.7 2-1.5 2-1.6 2-1.4 2-1.7 2-1.9 2-1.5 2-1.8 2-2.1 2-1.2 2-1.3 2-.6 2-1.1 2-.9 2-.2 2-.6 2-.5 2,0 2,0 2,.1 2,.3 2-.6 2,.1 2-.4 2-.4 2,.4 2,.1 2,.5 2,1 2,.7 2,.3 2,.1 2,.9 2,1 2,.5 2,.4 2,.5 2,2.6 2,3.3 2,2.3 2,2.7 2,2.8 2,2.5 2,2.1 2,.9 2,1.2 2,2.1 2,2 2,1 2,1.1 2,.2 2-.2 2-.1 2,0 2-.2 2-1.4 2-3.3 2-3.3 2-3.3 2-2.6 2-2.7 2-3.2 2-2.7 2-1.9 2-1.3 2-1.2 2-1.5 2-.6 2-1.1 2-1.7 2-.7 2,.2 2-.2 2,.1 2-.4 2,.2 2,.1 2-.6 2-.1 2-.5 2,.2 2,.4 2,.3 2-.2 2-.4 2,.5 2,.8 2,.3 2,.4 2,.9 2,.4 2,1.1 2,.7 2,.7 2,.9 2,1.1 2,1.3 2,.6 2,1.4 2,.9 2,.9 2,1.4 2,.7 2,.1 2,.4 2-.5 2-.3 2,.1 2-.3 2-.4 2-.3 2,.4 2,.3 2,.1 2,.4 2,.1 2-.6 2-.7 2-.2 2-1 2,.1 2-.5 2-.4 2,.2 2-.3 2,.7 2,.4 2-.1 2-.3 2-.3 2,.2 2,.2 2-.1 2,.4 2,.1 2,.4 2-.4 2-.4 2,.1 2,.1 2-.1 2,.4 2-.2 2,0 2,1.1 2,2.4 2,2.7 2,2.6 1.4,1.7" fill="none" stroke="#a03a80" stroke-width="1.5"/><path d="M1166.6,212.7l2-1.1 2-1.5 2,4.4 2,0 2-1.2 2-.3 2-.4 2,.7 2,.5 2-.5 2,0 2,.2 2-.2 2-.4 2,.5 2,.4 2-.1 2-.4 2,0 2-.1 2,.8 2-.3 2,.1 2,.6 2,.2 2,.4 2-2.2 2-1.7 2-1.9 2-1.3 2-1.6 2-1.6 2-1.5 2-2.2 2-.9 2-1.9 2-2.5 2-1.6 2-1.3 2-1.8 2-.8 2-.3 2,.4 2-.2 2,.6 2,0 2-.2 2,0 2,.3 2,.3 2-.4 2-.2 2,.7 2-.4 2,.6 2-.1 2-.2 2,.6 2,.8 2,4.1 2,1.3 2-.1 2-.1 2-2.3 2-1.2 2,.2 2-.3 2,2.4 2,3.2 2,3.7 2,2.8 2,1 2,2.4 2,1.8 2,2.5 2,2.5 2,.3 2,.8 2,.7 2-.8 2-.3 2-.1 2-.2 2,0 2,.2 2-.1 2,.8 2,.1 2,.3 2,.6 2,.3 2-.2 2,.6 2,.6 2,.7 2,.3 2,.2 2,.2 2-.4 2,.2 2-.1 2,.6 2-.3 2,.2 2,0 2,.7 2,0 2,.6 2,.5 2,.3 2-.7 2,.3 2,0 2-.1 2-.1 2-.8 2,.3 2-.2 2-.2 2-.4 2,.2 2,.2 2,.1 2-.6 2-.5 2-.5 2-.7 2-.3 2-.7 2,.3 2-.5 2-.6 2-.5 2-.2 2-1.2 2-.9 2-1 2,.2 2,1.1 2,.3 2,.7 2,.9 2,.4 2,.9 2,.7 2,.1 2,.9 2,.4 2-.2 2,.3 2,.5 2,.1 2,.1 2,0 2,.8 2,.5 2,0 2,.2 2,.3 2,.9 2,.6 2,0 2,1.3 2,.2 2,.9 2-.2 2-1.4 2-1.9 2-2.3 2-1.7 2-1.3 2-1.5 2-2.1 2-2.1 2-1.5 2-1.4 2-1.7 2-.5 2-.4 2-1.2 2-1.1 2-.8 2-.5 2-1.3 2-.3 2-.2 2,.1 2,.3 2-.6 2,.1 2-.1 2-.4 2,.5 2,.7 2,0 2,1 2,.2 2,1.2 2,.7 2,.9 2,1.1 2,.4 2,1.1 2,.4 2,2.2 2,2.9 2,3.2 2,3.2 2,3.2 2,1.8 2,1.8 2,1.3 2,.9 2,1.5 2,1.7 2,1.3 2,1.3 2-.2 2-.3 2-.1 2,0 2,0 2-1.4 2-3.6 2-3.1 2-2.7 2-2.8 2-3.4 2-3.3 2-3 2-2.6 2-.9 2-.6 2-1.6 2-1 2-1 2-.9 2-.2 2-.1 2-.5 2,.1 2,.2 2-.8 2,.2 2-.3 2-.8 2-.6 2,.3 2,.2 2-.1 2-.1 2,.4 2,.8 2,.4 2,.9 2,.4 2,.3 2,.4 2,.8 2,1.2 2,.7 2,.6 2,.7 2,1 2,.7 2,1.3 2,1.2 2,1 2,1.3 2,.6 2,.6 2,0 2,.5 2-.2 2-.5 2,.1 2-.5 2-.4 2-.4 2,.3 2,.6 2-.2 2,0 2-.4 2-.5 2-.2 2-.5 2-.4 2,.5 2,.1 2-.6 2,.5 2,.2 2-.2 2,.1 2,.5 2-.2 2-.1 2-.2 2,.1 2,.2 2,.3 2,.5 2-.5 2-.2 2,.5 2,.3 2,0 2,.1 2-.3 2,.5 2,.9 2,1.9 2,1.9 2,2.3 1.4,2.4" fill="none" stroke="#2e8a5a" stroke-width="1.5"/><path d="M1166.6,219.5l2-2.2 2-1.7 2,5.6 2,.2 2-1.6 2,.5 2-.1 2,.1 2,.5 2,.2 2-.1 2-.2 2-.1 2,.2 2,.3 2-.3 2-.1 2,0 2-.1 2,.7 2,.1 2-.1 2,0 2,.6 2,.2 2,1 2-2.7 2-2.3 2-2.3 2-1.5 2-2.3 2-2.1 2-2.4 2-2 2-.9 2-1.1 2-1.5 2-1.6 2-1.5 2-1 2-1.9 2-.5 2-.2 2-.4 2,.4 2,.5 2-.1 2-.4 2,.6 2,.4 2,.2 2,.6 2-.6 2-.3 2-.2 2-.3 2,.7 2,.5 2,.4 2,2 2,.7 2,1.1 2,.3 2-.6 2-1.5 2,.2 2-.1 2,2.6 2,2.4 2,2.4 2,4.3 2,3.5 2,1.9 2,.5 2,.8 2,.9 2,1 2,1 2-.7 2,.7 2,.9 2-.7 2,.4 2,1.3 2,.6 2,.2 2,.6 2,.2 2,0 2,0 2,.7 2,.5 2,.6 2,.3 2-.2 2-.1 2,.2 2,.5 2-.3 2,.7 2,.6 2,.4 2-.3 2,.8 2,.3 2,.6 2,.4 2,.6 2,.2 2,.5 2,.3 2,.2 2-.3 2-.5 2-.3 2-.4 2,.3 2,.1 2,.1 2,.1 2,.3 2-.2 2-.5 2,0 2-.8 2-.3 2-.8 2,.1 2-.4 2-.7 2,.2 2-.9 2,.2 2-.6 2-1.8 2-.9 2-1.2 2,0 2,.4 2,.3 2,.9 2-.2 2,.8 2,0 2,.2 2,.2 2,1 2,.4 2,.7 2-.1 2,.5 2,.3 2-.2 2,.2 2,.7 2,.2 2,.6 2,.3 2,.3 2,1 2,1 2,1 2,.7 2,.9 2,1.1 2,0 2-2.1 2-1.7 2-2.3 2-1.6 2-2.2 2-2.5 2-1.7 2-2.4 2-1.8 2-2.5 2-.7 2-1 2-.8 2-1.6 2-.8 2-1.2 2-1.3 2-.5 2-.6 2,0 2-.5 2,.5 2,.4 2-.6 2-.1 2,0 2,.2 2,.4 2-.2 2,1.3 2,.3 2,.4 2,1.3 2,.3 2,.6 2,.9 2,.8 2,.8 2,3.7 2,3.1 2,3.5 2,2.8 2,3.5 2,2 2,2.1 2,1.7 2,2 2,1.8 2,1.6 2,1.5 2,1.7 2,0 2-.5 2,.5 2,.3 2,.1 2-.9 2-3.9 2-3.6 2-3.1 2-3.1 2-3.2 2-4 2-3.4 2-2.6 2-1.5 2-1.8 2-1.8 2-1.3 2-1.2 2-1.6 2-.4 2,0 2,.1 2,0 2-.6 2,.3 2-.4 2,.3 2,.3 2-.8 2-.2 2,.5 2-.3 2,0 2-.2 2-.4 2,.5 2,.4 2,.6 2,1.1 2,.9 2,1.6 2,1.2 2,.9 2,1.6 2,1.2 2,1.1 2,1.5 2,1.3 2,1 2,1.3 2,1 2,1 2-.5 2,.5 2-.6 2-.6 2,.1 2-.3 2,.1 2-.4 2,.5 2,.2 2,.2 2,.4 2,.4 2-.2 2-.3 2-1.2 2-1 2-.1 2,.5 2-.4 2,0 2-.7 2,0 2,.4 2,0 2,.4 2-.6 2-.2 2-.2 2,.6 2-.3 2,.6 2-.1 2,.5 2,0 2-.1 2,.6 2-.2 2,.3 2-.5 2,.4 2,1.6 2,1.9 2,2.8 2,2.6 1.4,1.5" fill="none" stroke="#a0305a" stroke-width="1.5"/><path d="M1166.6,221l2-1.5 2-1.1 2,6.2 2,.4 2-1.7 2,0 2-.5 2,.2 2-.1 2-.2 2,.5 2-.4 2-.4 2-.3 2-.2 2,.3 2,.5 2-.3 2,.1 2,.3 2,.3 2,.1 2,.2 2-.4 2,.3 2,.9 2-2.3 2-1.7 2-2.2 2-1.6 2-2.3 2-2.4 2-2 2-2 2-1.5 2-1.1 2-2.3 2-1.7 2-1.1 2-1.5 2-1.3 2-.5 2,0 2-.4 2-.3 2-.2 2,.1 2-.1 2,.6 2,.2 2,.1 2,.4 2,.7 2-.1 2-.2 2,.1 2,.1 2,.9 2,1.1 2,3 2,.3 2-.5 2-.9 2-.8 2-.5 2-.8 2-.1 2,2.6 2,2.9 2,2.9 2,3.3 2,3.5 2,1.9 2,1.6 2,.9 2,2.4 2,1.1 2,.7 2-.7 2,1.5 2-.9 2-.2 2,.4 2-.1 2,1 2,.7 2,.9 2,0 2,0 2,.5 2-.1 2,.2 2,.7 2,.3 2,.1 2,.1 2,.5 2,1 2,.7 2-.2 2,.4 2,.4 2,.1 2,.7 2,.4 2,.8 2,.1 2,.9 2,.7 2-.1 2-.6 2-.1 2-.5 2,.3 2,.1 2,0 2,.4 2-.7 2,.2 2,.2 2-.6 2-.3 2-.5 2,.1 2,0 2-.5 2,0 2-.5 2-.1 2-.6 2,.2 2-.5 2-.9 2-1.3 2-.9 2-.8 2-1.1 2-.9 2,.9 2,.6 2,0 2,.3 2,.7 2-.1 2,.1 2,.5 2,1 2,1.1 2,0 2,.7 2,.4 2,.4 2,.1 2,.6 2,.3 2,.8 2,.2 2-.1 2,.3 2,.4 2,.2 2,.4 2,1 2,1.1 2,.7 2-.4 2-1.8 2-2 2-2 2-1.7 2-2.4 2-1.9 2-2.1 2-1.6 2-1.8 2-1.7 2-1.4 2-1.5 2-.6 2-1.1 2-1.3 2-1.3 2-1.1 2-.7 2,.3 2-.2 2,.1 2-.5 2-.2 2-.2 2-.3 2-.1 2,.3 2,.3 2-.3 2,.6 2,1.2 2,1 2,1 2,.9 2,.9 2,.5 2,.3 2,1 2,2.7 2,3.9 2,3.2 2,3.4 2,3.7 2,2.6 2,1.2 2,1.5 2,1.2 2,2.1 2,1.9 2,1.7 2,1.3 2,.1 2,.1 2,.4 2,.5 2,.4 2-.7 2-3.8 2-3.8 2-3.8 2-3 2-4.1 2-3.9 2-3.7 2-2 2-1.1 2-1.6 2-1.1 2-1 2-1.7 2-1.8 2-.2 2-.4 2-.6 2,.3 2-.3 2-.4 2,0 2-.5 2-.4 2-.5 2-.2 2,.2 2-.3 2,.3 2,0 2,.5 2,.9 2,.4 2,.2 2,1.1 2,.9 2,.9 2,.9 2,1.7 2,1.7 2,.8 2,1.3 2,1.4 2,1.1 2,.9 2,1.2 2,1.6 2,.8 2,0 2-.3 2-.2 2-.1 2,0 2,0 2,.6 2-.5 2,.7 2-.4 2,.4 2-.3 2,.1 2-.3 2-.9 2,.1 2,0 2-.5 2,.2 2-.2 2,.4 2-.7 2-.3 2-.3 2,.1 2,.4 2,.4 2,0 2-.1 2,.3 2-.4 2-.2 2,.4 2,0 2,.6 2-.5 2,.1 2-.3 2-.4 2-.2 2-.1 2,1.3 2,2.6 2,2.9 2,2.9 1.4,2.3" fill="none" stroke="#2e8a7a" stroke-width="1.5"/><path d="M1166.6,230.9l2-1.4 2-2.3 2,6.7 2,0 2-1.9 2,.4 2-.3 2,.5 2-.2 2-.1 2,.2 2,.1 2-.2 2-.4 2,.7 2-.1 2-.4 2,.4 2,.1 2,0 2,0 2,.5 2,0 2,0 2,1.3 2,.8 2-2.6 2-2.8 2-2.1 2-2.2 2-2.4 2-2.5 2-2.6 2-2 2-1.6 2-1.3 2-2.2 2-1.7 2-2.2 2-1.8 2-.9 2-.9 2,.2 2,0 2,.1 2-.2 2-.1 2,.5 2,.5 2-.1 2,.4 2-.1 2,.4 2-.1 2,.3 2,.1 2,.4 2,0 2,1 2,2.3 2,.4 2,.5 2,.5 2-1.8 2-1.2 2-.7 2,0 2,2.5 2,3.3 2,4.1 2,3.4 2,3.1 2,1.2 2,1.5 2,2.8 2,2.3 2,1.1 2-1.1 2,.5 2-.9 2,1.5 2,1.3 2,.6 2-.6 2,.2 2-.2 2,.5 2,.2 2-.3 2,.7 2,.2 2,.6 2,.5 2,.5 2,.8 2,0 2,.8 2,.1 2-.2 2,.3 2,.1 2,.3 2,.9 2,.3 2,.4 2,.6 2,.6 2,1.3 2,1.1 2,.5 2,.4 2-.3 2,.2 2-.5 2,.4 2,.1 2,0 2-.6 2-.6 2,.5 2-.1 2,0 2,.2 2-.6 2-.3 2-.5 2-.1 2-.6 2-.8 2,.1 2-.8 2-.1 2-.2 2-1.4 2-1.3 2-1.8 2-1.8 2-.9 2,1 2,.3 2,.4 2,.4 2-.1 2,.8 2,.7 2,.8 2,.2 2,0 2,.2 2,.6 2,.4 2,0 2,.3 2-.2 2,1.1 2,.4 2,.6 2,.8 2,.1 2,.8 2,.3 2,1.1 2,.7 2,1 2,1.4 2-.1 2-2.3 2-2.1 2-2.5 2-2.2 2-2.7 2-1.7 2-2.4 2-1.8 2-2.1 2-2.1 2-1.4 2-1.7 2-.9 2-1.5 2-.8 2-.9 2-1.2 2-.9 2-.3 2,0 2,.2 2-.6 2-.7 2-.2 2-.1 2-.4 2-.3 2,.5 2-.1 2,.5 2,.6 2,1.2 2,.6 2,1 2,1 2,.9 2,1 2,1.6 2,3 2,4.2 2,3.2 2,3.2 2,4 2,2.8 2,2 2,1.7 2,2.3 2,1.7 2,2.2 2,1.7 2,1.9 2,.8 2,0 2,.3 2-.2 2,.5 2-.8 2-4.3 2-3.8 2-3.6 2-4.4 2-3.5 2-3.5 2-4.6 2-3.1 2-2 2-1.7 2-1.8 2-1.4 2-1.7 2-1.6 2-.3 2-.2 2,.3 2,.1 2-.7 2-.4 2-.6 2-.2 2-.4 2,.2 2,.3 2,.5 2-.4 2-.6 2,.3 2,.1 2,1.2 2,.6 2,.5 2,.2 2,1.3 2,1.4 2,1.4 2,1.4 2,1.8 2,1.8 2,1.3 2,1.2 2,1.5 2,2 2,1.5 2,1.7 2,.7 2-.1 2,.1 2-.3 2,.2 2,.4 2-.5 2-.1 2,.5 2,.5 2-.6 2,.2 2,.1 2,.4 2-.2 2-.9 2-.6 2-.2 2,.1 2-.6 2-.1 2,0 2-.1 2-.8 2-.2 2-.3 2,.3 2-.1 2-.2 2,.4 2-.1 2,.6 2-.1 2,.2 2,.4 2-.3 2,.4 2-.4 2,.6 2-.4 2,.4 2,0 2,1 2,2.9 2,3.1 2,3.1 1.4,1.8" fill="none" stroke="#a0305a" stroke-width="1.5"/><path d="M1166.6,236l2-2.2 2-1.4 2,6.9 2,0 2-2.2 2,.6 2-.2 2,.2 2,.4 2-.2 2,.3 2-.3 2-.4 2-.4 2,.2 2,.5 2-.2 2,.1 2,.4 2-.1 2-.3 2,.3 2,.1 2,.6 2,1.2 2,.7 2-2.5 2-2.7 2-3 2-2.5 2-2 2-2.8 2-2.3 2-2.3 2-2.3 2-1.2 2-2.4 2-2.1 2-1.3 2-2.2 2-1.6 2-1.4 2,.3 2-.3 2,.1 2,.2 2,0 2,.1 2,.2 2,.6 2,.1 2,.9 2,.3 2,.1 2,.2 2,.8 2-.2 2,.7 2,.7 2,2.6 2,.9 2,1.1 2,.8 2-3.3 2-2.8 2-1 2,.1 2,3.9 2,2.8 2,3.3 2,2.6 2,2.6 2,1.3 2,2 2,1.3 2,2 2,1.1 2-.9 2,1.4 2,.5 2-.2 2,.5 2,.6 2-.1 2,1.3 2,.2 2,.2 2,.8 2,0 2,.9 2,.6 2,.7 2,.7 2,0 2,.7 2,.5 2,0 2,.9 2,.4 2,.7 2,.4 2,0 2,1 2,.1 2,.4 2,.7 2,.3 2,.7 2,.9 2-.2 2,.2 2-.4 2,0 2,.2 2,.2 2-.5 2-.3 2,.6 2-.1 2-.1 2-.1 2,.2 2,.2 2,0 2-.6 2-.4 2-.4 2-.8 2,.1 2,0 2-.3 2-.1 2-.7 2-.9 2-2.1 2-1.5 2-1.5 2-.2 2,.6 2,.6 2-.1 2,.6 2,.2 2,.1 2,.2 2,.8 2,.7 2,.7 2,.4 2-.3 2-.1 2,.4 2,0 2,.2 2,.2 2,.4 2,1.1 2,.4 2,1.2 2,.5 2,1.1 2,.6 2,1.2 2,1.3 2,.9 2,.1 2-2.2 2-2.8 2-1.7 2-2.4 2-2.7 2-1.7 2-2.6 2-2.5 2-2.7 2-2.6 2-1 2-1.1 2-1.2 2-1.5 2-1.4 2-.7 2-1.4 2-.7 2,.3 2-.7 2,.2 2-.7 2,.1 2,.2 2,0 2-.2 2,.1 2-.5 2-.1 2,.6 2,.8 2,.6 2,1.2 2,1 2,1.2 2,1 2,.9 2,1.6 2,4 2,3.6 2,3.5 2,4.2 2,3.5 2,2.3 2,1.9 2,2.3 2,2.5 2,2.2 2,2.1 2,2.4 2,2.1 2,.4 2,.1 2,.5 2-.1 2-.2 2-.8 2-3.9 2-4.5 2-3.9 2-3.8 2-4.7 2-4.6 2-4.1 2-3.1 2-1.2 2-1.2 2-1.9 2-1.4 2-1.7 2-2.2 2-.1 2-.7 2-.7 2-.3 2-.6 2-.1 2-.2 2,.4 2-.4 2,.2 2,0 2-.1 2-.5 2-.4 2-.1 2,0 2,.9 2,.7 2,.5 2,.9 2,1.3 2,1 2,1.4 2,1.2 2,1.3 2,1.3 2,1.8 2,2.4 2,2 2,2.3 2,2 2,1.7 2,.7 2-.6 2,0 2-.2 2,.3 2-.4 2,.3 2,0 2,.2 2,0 2-.3 2,.5 2,.5 2,.1 2-.5 2-.2 2,0 2,.1 2-.1 2-1 2,.2 2-.2 2-.7 2,.2 2,0 2,0 2-.4 2,0 2-.1 2-.2 2,.4 2,.1 2-.1 2,.1 2,.6 2,0 2,.5 2,0 2,.5 2-.7 2,0 2,.1 2,1.6 2,3.5 2,3.1 2,3.1 1.4,2.2" fill="none" stroke="#2a9090" stroke-width="1.5"/><path d="M1166.6,243.3l2-1.9 2-1.7 2,7.1 2-.1 2-1.7 2-.5 2,.5 2-.5 2,.3 2,.4 2-.3 2,0 2-.2 2,.4 2,.1 2,.2 2-.1 2,.1 2,.6 2,.3 2,.4 2-.4 2,0 2-.1 2,.6 2,1.5 2-3.2 2-2.6 2-2.5 2-2.3 2-3.4 2-3 2-2.7 2-2.2 2-2.3 2-1.4 2-2.1 2-1.8 2-1.4 2-2.3 2-1.9 2-1.5 2-.2 2,.1 2,.6 2,.5 2-.1 2,.7 2,.3 2-.1 2,.8 2,.6 2-.1 2,.8 2,.5 2-.2 2-.3 2,.8 2,1.4 2,1 2,1.8 2,1.6 2,0 2-1.7 2-1.3 2-3 2,.1 2,4.2 2,2.6 2,3.7 2,3.7 2,3.3 2,1.5 2,.8 2,.9 2,1.8 2,0 2,1.3 2,1.3 2-.5 2,.8 2,.6 2-.7 2,1.1 2,.3 2,0 2-.1 2,.2 2,.7 2,.4 2,.7 2-.1 2,.2 2,.6 2,1.1 2,.3 2,.2 2,1.1 2,.2 2,.9 2,.4 2,.6 2,1.2 2,1.3 2,.6 2,.8 2,.3 2,.7 2,.7 2,.7 2,.3 2,.3 2,0 2,.1 2-.5 2-.1 2-.3 2-.1 2,.3 2-.3 2-.1 2-.2 2,.6 2,0 2-.5 2-.6 2,0 2-.1 2-.7 2-.6 2-.2 2-.9 2-.9 2-1.6 2-1.8 2-1.4 2-2.2 2-.8 2,1 2,.3 2,.2 2,.7 2,.7 2,.1 2-.1 2,.5 2,.6 2,.7 2,.4 2-.1 2,.2 2,0 2,.3 2,.2 2,1.1 2,1 2,1 2,.4 2,.9 2,.1 2,1 2,.8 2,1.7 2,1.2 2,1.8 2-.8 2-2.2 2-2.3 2-2.8 2-2.3 2-3 2-2.3 2-2.6 2-2.7 2-2.9 2-2.1 2-1.5 2-2 2-.9 2-1.8 2-1.6 2-1.5 2-1.4 2-.9 2,.3 2-.1 2-.5 2-.7 2-.6 2,0 2,0 2-.1 2,.4 2-.2 2-.4 2,.9 2,.6 2,1.5 2,1 2,.9 2,.8 2,.6 2,.8 2,1.3 2,4.1 2,4.7 2,4.1 2,3.8 2,3.6 2,2.8 2,2.3 2,2.7 2,2.8 2,1.9 2,2.6 2,2.2 2,2.2 2,.8 2-.1 2,0 2,.8 2,.7 2-1.1 2-3.9 2-4.2 2-4.8 2-5 2-4.3 2-4.3 2-4.8 2-3.7 2-1.7 2-2.3 2-1.4 2-1.6 2-2 2-1.9 2-.7 2-.5 2-.4 2,.3 2-.2 2,.1 2-.4 2,.1 2-.1 2-.1 2-.5 2-.1 2-.6 2,.4 2-.1 2,0 2,.8 2,.2 2,.5 2,.5 2,1.2 2,1.1 2,1.9 2,2.4 2,2.2 2,2 2,1.6 2,1.5 2,2.2 2,1.7 2,2.1 2,1.8 2,1.1 2,.1 2,.5 2,.5 2-.2 2,.5 2-.6 2,.4 2-.5 2,.1 2,0 2,.5 2-.2 2-.2 2,.3 2-.3 2-.1 2-.5 2-.9 2,0 2-.6 2-.3 2-.9 2-.4 2,0 2,.1 2,.3 2,.1 2,.3 2,.3 2-.3 2,.2 2,.2 2,.3 2-.2 2-.1 2,0 2-.3 2,.1 2,.5 2,.3 2-.2 2,2 2,2.9 2,3.8 2,3.1 1.4,1.9" fill="none" stroke="#a02a50" stroke-width="1.5"/><path d="M1166.6,249.9l2-2.3 2-2.4 2,8.6 2,.4 2-2.5 2,.2 2,.1 2,0 2-.1 2,.3 2,.2 2-.3 2,0 2-.1 2-.1 2,.1 2,.3 2-.2 2,.3 2-.1 2-.1 2,.3 2-.1 2,0 2,.7 2,1.4 2-3.1 2-3 2-2.9 2-2.8 2-2.9 2-2.9 2-2.9 2-2.7 2-1.8 2-2 2-1.6 2-1.7 2-1.9 2-1.9 2-2 2-1.5 2,.4 2,.2 2,0 2,.6 2,.5 2,0 2,.4 2,.1 2,.3 2,.5 2,.2 2,.3 2,.4 2,.1 2,.3 2,.4 2,1.4 2,.9 2,1.3 2,.9 2-.1 2-2.5 2-2.5 2-2.3 2-.6 2,4.2 2,3.7 2,4.1 2,4.1 2,5.5 2,8 2,8.4 2,9 2,10.9 2-1.3 2-10.8 2-5.3 2-.6 2-.2 2-.3 2-.7 2-.4 2-.2 2-.8 2-.2 2-.4 2-.4 2-.4 2-.8 2-.2 2,.2 2,.9 2,.8 2,.6 2,.8 2,.6 2,.9 2,.4 2,1.1 2,.8 2,1.1 2,.9 2,1 2,.8 2,.9 2,.6 2,1 2,.2 2,.2 2,.1 2,0 2,.3 2,.1 2,.2 2-.3 2,0 2,.1 2,0 2-.4 2,.3 2-.1 2-.1 2-.4 2-.8 2-.9 2-.3 2-.7 2-.8 2-.7 2-.2 2-.5 2-1.5 2-2.2 2-1.8 2-1.9 2-1 2,.1 2,.2 2,.5 2-.1 2,.3 2,0 2,.6 2,.1 2,.5 2,.4 2,.4 2-.1 2,.3 2,.3 2,.2 2,0 2,.7 2,.8 2,.4 2,.9 2,.5 2,.5 2,.5 2,1 2,1.6 2,1.6 2,1.8 2-.2 2-2.7 2-2.4 2-2.9 2-3 2-2.7 2-2.7 2-2.8 2-2.7 2-2.8 2-2.3 2-1.7 2-1.4 2-1.4 2-1.5 2-1.5 2-1.7 2-1.5 2-1.7 2-.1 2-.1 2-.1 2-.4 2-.2 2,0 2,0 2,.1 2-.5 2-.4 2-.3 2,1.1 2,1.1 2,1 2,1.1 2,.9 2,.9 2,1.2 2,.9 2,1.3 2,4.4 2,4.3 2,4.5 2,4.4 2,4.1 2,3.2 2,2.4 2,2.4 2,2.5 2,2.3 2,2.4 2,2.4 2,2.4 2,1.2 2,.3 2,.3 2,.7 2,.5 2-1 2-4.7 2-4.8 2-4.8 2-5 2-4.5 2-4.4 2-4.9 2-3.5 2-2.1 2-2.3 2-1.7 2-1.8 2-2.1 2-2.2 2-.4 2-.1 2-.3 2-.4 2-.4 2,0 2-.1 2-.1 2-.6 2-.2 2,0 2-.2 2-.4 2-.5 2-.5 2,.2 2,.5 2,.9 2,.9 2,.7 2,.9 2,2 2,2.1 2,1.7 2,2.1 2,2 2,2 2,2.3 2,2.2 2,1.8 2,1.9 2,2.1 2,1 2,.1 2,.1 2,.4 2-.1 2,.4 2,0 2,.4 2,.4 2,0 2,.2 2-.1 2,.1 2,.2 2,.1 2-.5 2-.7 2-.5 2-.3 2-.5 2-.4 2-.3 2-.1 2-.4 2-.5 2-.2 2,0 2,.3 2-.1 2,.1 2,.1 2,.4 2,0 2,0 2,0 2,0 2,.2 2,.1 2,.4 2,.1 2,.2 2,.1 2,1.9 2,3.9 2,3.5 2,3.9 1.4,2" fill="none" stroke="#2a9494" stroke-width="1.5"/><path d="M1166.6,145.0 V319.4 H1798.0" fill="none" stroke="#555" stroke-width="1.2"/><path d="M1166.6,426.7l.7,0 .8,.3 1-.3 .5-.1 .7,.8 .7-6.8 .1-1 1.5-15.2 .4-4.2 .9-9 .2,0 .5-.7 1-.3 1.5-1 .4-.2 1.1-.3 1.5-.1 1.5,.3 1.5-.5 1.5,.5 1.5-.1 1.5-.1 1.5-.2 1.5,0 1.5,.2 1.5,.3 1.5,0 1.5,.2 1.5,.1 1.5,0 1.5,0 1.5-.5 1.5,.3 1.5-.6 1.5-.2 1.5-.1 1.5,.4 1.5,.1 1.3,.1 .2,.3 1.5-.2 1.5-.4 1.5,.1 1.3-.4 .2,0 1.4-1.9 .1-.1 1.5-1 1.5-1.6 1.5-1.3 .5-.5 1-.6 1.5-1.8 .1-.4 1.4-.9 1.4-1.5 .1-.2 1.5-.6 1.5,.3 1.5,.1 .2,.2 1.3,.2 1.5-.6 1.5,.2 .7-.2 .8,1.5 1.5,2.6 1.5,2.6 1,1.6 .5-.1 .3-.2 1.2-1.4 1.5-1.1 1.5-1.9 1.5-1.2 .9-1.1 .6,.4 1.5,.5 .2-.3 1.3,.5 1.5-.2 1.5,.1 1.5,.5 .2-.4 1.3,.5 1.5,.4 1.5-.3 1.5,.5 .1-.2 1.4,.1 1.5,.6 .1-.6 1.4,.6 .7,0 .1,.4 .7,1.2 1.4,2.1 .1-.2 1.4,1.8 .1-.2 1.3-2.9 .2-.2 1.5-3.5 .6-1.3 .3-.9 .6-.7 1.5-.5 1.5-.9 1.5-.6 1.5-1 .4-.2 1.1,2.7 1.3,3.4 .2-1.2 1.5-5.8 .7-2.7 .8,27.9 .1,3 .3,10.3 1.1-9.7 1.4-11.8 .1-.8 1.5-4.4 1.5-3.6 .1-.7 .3-.9 1.1,2.2 .3,.8 1.2,2.1 .5,.8 1,2.4 .7,1 .2,.4 .6,6.4 .9,9.2 .6,5.8 1.1,10.9 .4-5.5 1.5-20.2 .9-12.1 .6-.4 1.5,0 1.5,.6 .1,.3 1.4-.4 1.1-.4 .4,2.8 .8,5.4 .7,4.6 1.5-11.4 1.4-10.7 .1,.5 1.5-.1 .9,.7 .6-.3 1.5,0 1.5,.7 1.5,.8 1.5,.6 1.5,.4 1.5,.3 .1,.1 1.4-.6 1.5,.1 1.5-.3 1.5-.1 1.4,.4 .1-.1 1.5-.1 1.5-.3 1.5,.7 1.5,.3 1.5,.1 1.5,.1 .6-.1 .9,.8 1.5,.3 1.5,1.2 1.5,.7 1.5,.4 .4,0 1.1,.5 1.5,1.2 1.5,.7 .8,.4 .7-1.7 1.5-4.3 1.5-3.9 1.1-3.2 .4,0 1.5-.2 1.5,.2 1.5,.1 1.5,.4 1.5,0 1.5,.4 .4,.1 1.1-.2 1.5-.3 1.5,.1 1.5,.4 1.5-.5 1.5-.3 1.5,.4 1.5-.2 .5-.2 1,.3 1.5-.4 1.5-.5 1.5-.1 1.5-.8 1.5-.2 1.5-.5 1.5,.3 1.5-.4 1.5-.6 1.5-.7 1,.3 .5,1.3 1.5,2.5 1.5,2.1 1.5,2.5 1.5,2.1 1.5,2.8 1.5,2.4 .3,.3 1.2,1 1.2,.8 .3,.3 1.5,.6 1.5,1.2 1.5,1.5 1.5,.7 1,.7 .5-.3 1.5-1.4 1.5-1.6 1.5-.8 1.5-.9 1.5-1.5 1.5-.7 .2-.3 1.3,.1 1.5-.4 1.5-.1 1.5-.3 1.5-.5 1.5,.9 1.5,1.8 1.5,.9 1.5,1.3 1.4,1.6 .1,.1 1.5-.5 1.5-.3 1.5-.6 1.5,0 1.5,0 1.5,0 1.5-.5 1.5-.4 1.5-.2 1.5-.2 1.5-.4 1.5-1 1.5-.2 1.5-.3 .7-.5 .8-.1 1.5,.9 .1,.2 1.4,1 1.5,.7 1.5,0 1.5,.3 1.5,.8 1.5,.4 1.5,.9 1.5,.9 .3,.5 1.2,.3 1.2,.4 .3,.2 .9,.2 .6-.5 1.5-.1 1.5,.2 1.5,.7 1.5,.4 1.5,.2 1.5,.8 1.5,0 1.1,.6 .4-.4 1.5-1 .5-.8 1-.3 1.5-1.1 1.5-1.4 .9-.6 .6,.6 1.5,2.2 1.5,2.3 1.2,2.1 .3,.3 1.5-.7 1.5-1.2 1.5-.8 1.3-.5 .2,.4 1.5,.3 1.5,1 1.5,.9 1.5,1 1.5,.2 .8,.6 .7,0 1.5,.7 1.5,.6 1.5-.9 1.5-.6 1.5-.7 1.5,.3 1.3,.3 .2-.9 1.5-7.7 1.5-8.4 1.5-7.7 .1-.9 1.4-1.1 1.5-.9 1.5-.2 1.5-.5 .2,.1 1.3-.2 1.5-.8 1.5-.3 .6-.7 .9-.1 1.5-.4 1.5-.6 1.5-.4 1.5-.6 .4,0 1.1,.1 1.3,.8 .2,.4 1.5,.9 1.5,.3 1.5,.2 .2,.6 1.3,0 1.5-.5 1.5-.2 .5-.2 1,.2 1.5-.1 1.5-.1 .9,.1 .6-.3 1.5-1.1 1.5-1.5 1.5-.8 1-1.4 .5-.2 1.5-.4 1.5-.2 1.5,.3 1.5,.2 1.5-.3 1.5-.1 1.4,.2 .1,.3 1.1,.6 .4,.4 1.5,.7 .6-.1 .9,2.9 1.5,4.6 1.5,4 1.5,4.9 1.5,4.2 1.5,4.1 .1,.7 1.4-.3 1.5-.6 1.5-.7 1.5-.3 1.4-.3 .1-.1 1.5-.4 .8-.8 .7-.8 1.5-.4 .2-.2 1.3,6.3 .7,3.5 .8-.6 1.5-.5 1.5-1.4 1.5-.9 1.5-1.2 .9-.1 .6,.7 1.5,.3 1.5,.2 1.3,.5 .2,0 1.5,.3 1.2,.8 .3-.9 1.5-3.5 1.4-3.9 .1,.1 1.5-.6 1.5,.2 1.5,.3 1.5,.1 1.5-.7 1.5-.4 1.5-.6 1.5-.5 1.5-.3 1.5-.1 1.5-.4 1.5,.1 .1,.6 1.4-.6 1.5-.1 1.5-.3 .5-.1 1-.6 1.4-.1 .1,.4 1.5,.7 1.5,.8 1.5,.3 1.5,.2 1.5,.8 1.5,.6 1.5,.4 1.5,.9 .1,.4 1.4,0 1,.1 .5,.4 1.5,.3 1.5,.3 1.4,.2 .1,0 1.5-2.9 1.5-2.6 1.5-1.9 .2-.3 1.3,.7 1.2-.1 .3-.2 1.5,.8 .6-.1 .9,.3 1.5,.8 1.5,.7 1.5,1 .7,.7 .8,.2 1.5-.2 1.5-.8 1.1-.8 .4,.5 1.5,1.6 1.5,1.3 .2,0 1.3,0 1.5,.6 1.5-.1 1.5,.7 1.5-.1 1.5,.7 .9,.5 .6-1 1.5-1.9 1.5-2 1.5-2 1.5-1.8 .7-1.1 .8,.5 1.5,.3 1.5-.6 1.5-.4 1.5-.5 1.5-.4 1.5,.1 1.5-.4 .9-.2 .6,.6 1.5,.7 1.5,1 1.2,.9 .3-.4 1.5,.3 .7,.9 .8,1.7 1.5,2.1 1.3,2.7 .2,0 1.5-.2 1.5-.4 .5-.6 1-.4 1.5-.4 1.1-.3 .4,.3 1.5-.4 1.5-1.1 1.5-1 1.2,.1 .3-.1 1.5,0 1.5,.2 1.5,.3 1.3,.7 .2-.5 1.5-3 1.5-2.1 1.5-3 .1-.2 1.4-.3 1.5-.2 1.5-.3 1.5-.1 1.5-.5 1.5-.4 1.5-.2 .6,0 .9-.1 1.5,.5 1.5,0 1,.2 .5-6.9 1.4-19.5 .1,.4 1.5,.5 1.5,.2 1,.4 .4,.6 0,167.8-.4-.3-1-3.4-1.5-4.7-1.5-4.9-.1-.7-1.4-2.6-.5-1.5-1-1.3-1.5-2.5-1.5,.5-.9,.2-.6,.5-1.5-.1-1.5,.3-1.5,.3-1.5,.6-1.5-.1-1.5-.1-1.4,.7-.1-.2-1.5-.1-1.5,0-1.5,.4-.2,0-1.3,.3-1.5,0-1.5,.4-1.5-.2-.3,0-1.2,.3-1.5,1.2-1.5,.3-1.5,.3-.4-.3-1.1,.3-1.5,.7-1,.4-.5-.6-1.5-1.1-1.5-.6-.2,0-1.3-1.5-1.5-1.7-.8-.4-.7-.5-1.5-.7-.3,.1-1.2-.3-1.5,.6-1.5-.4-.6,.4-.9,.1-1.5,.2-1.5,.1-1.5-.1-1.5,.8-1.5,.1-1.5-.3-1.5,.5-.8-.6-.7,.4-1.5-.4-1.5,.4-1.5,.6-1.5-.5-.6,.4-.9-.1-1.5,.5-1.5-.3-1.5,.4-1.5,.7-1.5,.1-1.3-.3-.2-.4-1.5-.6-1.5,.5-.4,.2-1.1,.3-1.5-.5-1.5,.6-.8-.2-.7-.3-1.5,.5-1.5,.4-1.5-.5-.9,.4-.6,.3-1.5-.4-.3,.3-1.2,.1-1.3,.8-.2,.6-1.5,.2-1.5,.7-1.5,.5-.1-.4-1.4,.7-1.5,.5-1.5,1.3-.5-.2-1-.9-1.4-.7-.1,.3-1.5-.6-1.5-.6-1.5-.4-1.5-1.2-1.5-.3-1.5-.6-1.5-.6-1.5-1.1-.1,0-1.4-1.2-1,.1-.5,.4-1.5-.3-1.5-.3-1.4,.5-.1-.3-1.5-.3-1.5,0-1.5,.3-1.5-.5-1.5,.1-1.5-.3-1.5,0-1.5,.3-1.5,.5-1.5-.4-1.5-.2-1.5,.2-.1,.2-1.4-.1-1.5,.5-.3,.4-1.2-.2-1.5,.2-.2-.3-1.3,.3-1.5,.5-1.5,1-.6-.1-.9-.3-1.5,.1-1.5,.8-1.5,.6-1.5,.7-.8,.1-.7,.3-1.3,.2-.2-.1-1.5,.7-.7,.8-.8,.7-1.5,1.5-.1,.3-1.4,1.9-1.5,1.5-1.5,2.1-1.5,1.5-1.4,1.1-.1-.5-1.5-.2-1.5,0-1.5-.2-1.5-.2-1.5-.6-.9-.2-.6-.3-1.5-.5-.4,.3-1.1,.1-.1,.3-1.4,.1-1.5,.7-1.5,.3-1.5,0-1.5,.1-1.5-.1-1.5,.4-.5-.4-1-.5-1.5,.4-1.5,.6-1.5,.6-.6-.1-.9-.2-1.5,.1-1.5-.5-1,.5-.5-.4-1.5,.2-1.5-.5-1.3,.2-.2,.4-1.5,0-1.5,.1-1.5-.3-.2,.1-1.3-1.4-1.1-1.3-.4-.1-1.5-1.6-1.5-.8-1.5-.9-1.5-1.1-.9-.9-.6,.2-1.5-.2-1.5,.1-1.3,0-.2,0-1.5-.5-1.5,.3-1.5-.4-1.4,0-.1-.5-1.5,.2-1.5-.4-1.5,.4-.2-.6-1.3-.3-1.5,0-1.5-.6-1.5,.1-1.5,.1-1.5,.4-1.5-.8-.7,.3-.8-.4-1.5-.1-1.5,0-1.5-.3-1.5-.1-1.5,.2-.2-.1-1.3,.1-1.5,.3-1.5-.7-1.5-.3-.3,.2-1.2-.3-1.5,.2-1.5-.4-.6,.1-.9,0-1.5,.1-1.5,0-1,.2-.5,.4-1.5,.8-.4,.2-1.1,.6-1.5,.1-1.5,.7-1.5,.5-1.5,.4-1.5,.4-1.5,.4-1.5,.7-.6,.8-.9,.1-.3,.1-1.2-1-1.2-.4-.3-.4-1.5-.9-1.5-.3-1.5-1.1-1.5-1.4-1.5-.4-1.5-.7-1.5-.9-1.4-.2-.1-.5-1.5-.5-.8-.3-.7-.3-1.5-.5-1.5-.4-1.5-.8-1.5-.8-1.5-.6-1.5-.3-1.5-.5-1.5-.2-1.5,.1-1.5-.7-1.5,.3-1.5,.2-1.5-.2-1.5,.2-.1,.4-1.4-.3-1.5-.3-1.5,.2-1.5-.3-1.5,.3-1.5,.3-1.5-.4-1.5-.5-1.5-.1-1.3-.1-.2,.1-1.5,.4-1.5,.2-1.5,.2-1.5-.1-1.5-.2-1.5,.3-.5,.1-1-.1-1.5-.3-1.5,.4-1.5,.5-1.5-.4-.3-.2-1.2,.4-1.2-.1-.3,.1-1.5,.7-1.5,0-1.5,0-1.5-.2-1.5-.1-1.5-.3-.5,.1-1,.5-1.5-.3-1.5-.3-1.5,.5-1.5,.2-1.5-.1-1.5,.1-1.5,.3-1.5-.1-1.5,.3-1.5-.4-1,.6-.5,.6-1.5,.5-1.5,.4-1.5,.5-1.5,1.1-1.5,1.2-1.5,.4-1.5,.6-1.1,1.1-.4-.5-1.5,.1-1.5-.3-1.5-.1-1.5-.4-1.5-.2-1.5-.7-.4-.4-1.1-.2-1.5-.2-1.5,.3-.7,.4-.8-.4-1.5-.3-1.5-.8-1.1,.2-.4-.1-1.5,.4-1.5-.1-1.5,.1-1.5-.2-.9,.4-.6-.1-1.5,.1-1.5-.3-1.5,.4-1.5,.1-1.5,.1-1.5,.1-.1,.1-1.4-.4-1.5-.8-1.5-.2-1.5-1-1.4-.3-.1-.6-1.5-.3-1.5-.6-1.5-.1-1.5-.5-1.5-.9-1.5-1-.6-.8-.9-1-1.5-1.6-.1,.4-1.4-1.2-1.5-1.7-.7-.7-.8,1.3-.4,.5-1.1,1.5-1.4,2.5-.1-.2-1.5,1.5-1.5,.9-.6,.6-.9,0-1.5,.6-.4-.1-1.1,.5-.6,.5-.9,10.9-.6,7.4-.2,2.2-.7-.6-1-1.3-.5-5.5-1.2-12.7-.3,0-1.1-.5-.3,0-.1-.3-1.5-3.2-1.5-2.3-.1,.1-1.4-1.9-1.1-1.8-.3-.6-.1,.6-.8,1.5-.7,2.4-1.5,3.4-.2,.3-1.3,2.8-1.1,3-.4,.9-1.5,3.2-1.5-.2-1.5-.9-1.5-.5-.6,.1-.3-.2-.6,.1-1.5-.3-.2-.4-1.3-1.4-.1,0-1.4-1.4-.1,.2-1.4,2-.7,.7-.1,.7-.7-1.3-1.4-2.5-.1-.6-1.5,.6-1.4,.4-.1-.1-1.5-.8-1.5-.7-1.5-.7-1.3-1-.2,0-1.5-2-1.5-1.2-1.5-1.1-1.3-1.2-.2-.4-1.5-.2-.6-.3-.9-.3-1.5-.1-1.5-.4-1.5-.2-1.2-.1-.3-.2-.5,.6-1,.7-1.5,.6-1.5,1-.8,.7-.7,.4-1.5,.3-1.5,1.2-1.3,.4-.2,.1-1.5,.1-1.5,.7-1.5,.1-.1-.2-1.4,.7-1.4,.2-.1,.4-1.5,.8-1,.7-.5,0-1.5-.1-1.5,.1-1.5,.2-.1-.5-1.4-1.3-.2,.2-1.3-.8-1.5-.3-1.5-.1-1.5-1.3-.2-.7-1.3-.1-1.5,.4-1.5,.5-1.5-.3-1.5,.5-1.5-.2-1.5-.6-1.5,.4-1.5,0-1.5,.4-1.5,.1-1.5-.4-1.5,.6-1.5-.3-1.5-.3-1.5-.5-1.5-.2-1.5,0-1.5,.1-1.5,.1-1.5,.3-1.5,.6-1.5-.2-1.1-.2-.4-.4-1.5-.5-1-.1-.5,.1-.2-.2-.9,0-.4-2.5-1.5-8.8-.1-.2-.7-1.5-.7-1.4-.5-.7-1,8.6-.8,7.7-.7,14.4Z" fill="#d9ebd6"/><path d="M1166.6,505l.7-14.4 .8-7.7 1-8.6 .5,.7 .7,1.4 .7,1.5 .1,.2 1.5,8.8 .4,2.5 .9,0 .2,.2 .5-.1 1,.1 1.5,.5 .4,.4 1.1,.2 1.5,.2 1.5-.6 1.5-.3 1.5-.1 1.5-.1 1.5,0 1.5,.2 1.5,.5 1.5,.3 1.5,.3 1.5-.6 1.5,.4 1.5-.1 1.5-.4 1.5,0 1.5-.4 1.5,.6 1.5,.2 1.5-.5 1.5,.3 1.5-.5 1.5-.4 1.3,.1 .2,.7 1.5,1.3 1.5,.1 1.5,.3 1.3,.8 .2-.2 1.4,1.3 .1,.5 1.5-.2 1.5-.1 1.5,.1 .5,0 1-.7 1.5-.8 .1-.4 1.4-.2 1.4-.7 .1,.2 1.5-.1 1.5-.7 1.5-.1 .2-.1 1.3-.4 1.5-1.2 1.5-.3 .7-.4 .8-.7 1.5-1 1.5-.6 1-.7 .5-.6 .3,.2 1.2,.1 1.5,.2 1.5,.4 1.5,.1 .9,.3 .6,.3 1.5,.2 .2,.4 1.3,1.2 1.5,1.1 1.5,1.2 1.5,2 .2,0 1.3,1 1.5,.7 1.5,.7 1.5,.8 .1,.1 1.4-.4 1.5-.6 .1,.6 1.4,2.5 .7,1.3 .1-.7 .7-.7 1.4-2 .1-.2 1.4,1.4 .1,0 1.3,1.4 .2,.4 1.5,.3 .6-.1 .3,.2 .6-.1 1.5,.5 1.5,.9 1.5,.2 1.5-3.2 .4-.9 1.1-3 1.3-2.8 .2-.3 1.5-3.4 .7-2.4 .8-1.5 .1-.6 .3,.6 1.1,1.8 1.4,1.9 .1-.1 1.5,2.3 1.5,3.2 .1,.3 .3,0 1.1,.5 .3,0 1.2,12.7 .5,5.5 1,1.3 .7,.6 .2-2.2 .6-7.4 .9-10.9 .6-.5 1.1-.5 .4,.1 1.5-.6 .9,0 .6-.6 1.5-.9 1.5-1.5 .1,.2 1.4-2.5 1.1-1.5 .4-.5 .8-1.3 .7,.7 1.5,1.7 1.4,1.2 .1-.4 1.5,1.6 .9,1 .6,.8 1.5,1 1.5,.9 1.5,.5 1.5,.1 1.5,.6 1.5,.3 .1,.6 1.4,.3 1.5,1 1.5,.2 1.5,.8 1.4,.4 .1-.1 1.5-.1 1.5-.1 1.5-.1 1.5-.4 1.5,.3 1.5-.1 .6,.1 .9-.4 1.5,.2 1.5-.1 1.5,.1 1.5-.4 .4,.1 1.1-.2 1.5,.8 1.5,.3 .8,.4 .7-.4 1.5-.3 1.5,.2 1.1,.2 .4,.4 1.5,.7 1.5,.2 1.5,.4 1.5,.1 1.5,.3 1.5-.1 .4,.5 1.1-1.1 1.5-.6 1.5-.4 1.5-1.2 1.5-1.1 1.5-.5 1.5-.4 1.5-.5 .5-.6 1-.6 1.5,.4 1.5-.3 1.5,.1 1.5-.3 1.5-.1 1.5,.1 1.5-.2 1.5-.5 1.5,.3 1.5,.3 1-.5 .5-.1 1.5,.3 1.5,.1 1.5,.2 1.5,0 1.5,0 1.5-.7 .3-.1 1.2,.1 1.2-.4 .3,.2 1.5,.4 1.5-.5 1.5-.4 1.5,.3 1,.1 .5-.1 1.5-.3 1.5,.2 1.5,.1 1.5-.2 1.5-.2 1.5-.4 .2-.1 1.3,.1 1.5,.1 1.5,.5 1.5,.4 1.5-.3 1.5-.3 1.5,.3 1.5-.2 1.5,.3 1.4,.3 .1-.4 1.5-.2 1.5,.2 1.5-.2 1.5-.3 1.5,.7 1.5-.1 1.5,.2 1.5,.5 1.5,.3 1.5,.6 1.5,.8 1.5,.8 1.5,.4 1.5,.5 .7,.3 .8,.3 1.5,.5 .1,.5 1.4,.2 1.5,.9 1.5,.7 1.5,.4 1.5,1.4 1.5,1.1 1.5,.3 1.5,.9 .3,.4 1.2,.4 1.2,1 .3-.1 .9-.1 .6-.8 1.5-.7 1.5-.4 1.5-.4 1.5-.4 1.5-.5 1.5-.7 1.5-.1 1.1-.6 .4-.2 1.5-.8 .5-.4 1-.2 1.5,0 1.5-.1 .9,0 .6-.1 1.5,.4 1.5-.2 1.2,.3 .3-.2 1.5,.3 1.5,.7 1.5-.3 1.3-.1 .2,.1 1.5-.2 1.5,.1 1.5,.3 1.5,0 1.5,.1 .8,.4 .7-.3 1.5,.8 1.5-.4 1.5-.1 1.5-.1 1.5,.6 1.5,0 1.3,.3 .2,.6 1.5-.4 1.5,.4 1.5-.2 .1,.5 1.4,0 1.5,.4 1.5-.3 1.5,.5 .2,0 1.3,0 1.5-.1 1.5,.2 .6-.2 .9,.9 1.5,1.1 1.5,.9 1.5,.8 1.5,1.6 .4,.1 1.1,1.3 1.3,1.4 .2-.1 1.5,.3 1.5-.1 1.5,0 .2-.4 1.3-.2 1.5,.5 1.5-.2 .5,.4 1-.5 1.5,.5 1.5-.1 .9,.2 .6,.1 1.5-.6 1.5-.6 1.5-.4 1,.5 .5,.4 1.5-.4 1.5,.1 1.5-.1 1.5,0 1.5-.3 1.5-.7 1.4-.1 .1-.3 1.1-.1 .4-.3 1.5,.5 .6,.3 .9,.2 1.5,.6 1.5,.2 1.5,.2 1.5,0 1.5,.2 .1,.5 1.4-1.1 1.5-1.5 1.5-2.1 1.5-1.5 1.4-1.9 .1-.3 1.5-1.5 .8-.7 .7-.8 1.5-.7 .2,.1 1.3-.2 .7-.3 .8-.1 1.5-.7 1.5-.6 1.5-.8 1.5-.1 .9,.3 .6,.1 1.5-1 1.5-.5 1.3-.3 .2,.3 1.5-.2 1.2,.2 .3-.4 1.5-.5 1.4,.1 .1-.2 1.5-.2 1.5,.2 1.5,.4 1.5-.5 1.5-.3 1.5,0 1.5,.3 1.5-.1 1.5,.5 1.5-.3 1.5,0 1.5,.3 .1,.3 1.4-.5 1.5,.3 1.5,.3 .5-.4 1-.1 1.4,1.2 .1,0 1.5,1.1 1.5,.6 1.5,.6 1.5,.3 1.5,1.2 1.5,.4 1.5,.6 1.5,.6 .1-.3 1.4,.7 1,.9 .5,.2 1.5-1.3 1.5-.5 1.4-.7 .1,.4 1.5-.5 1.5-.7 1.5-.2 .2-.6 1.3-.8 1.2-.1 .3-.3 1.5,.4 .6-.3 .9-.4 1.5,.5 1.5-.4 1.5-.5 .7,.3 .8,.2 1.5-.6 1.5,.5 1.1-.3 .4-.2 1.5-.5 1.5,.6 .2,.4 1.3,.3 1.5-.1 1.5-.7 1.5-.4 1.5,.3 1.5-.5 .9,.1 .6-.4 1.5,.5 1.5-.6 1.5-.4 1.5,.4 .7-.4 .8,.6 1.5-.5 1.5,.3 1.5-.1 1.5-.8 1.5,.1 1.5-.1 1.5-.2 .9-.1 .6-.4 1.5,.4 1.5-.6 1.2,.3 .3-.1 1.5,.7 .7,.5 .8,.4 1.5,1.7 1.3,1.5 .2,0 1.5,.6 1.5,1.1 .5,.6 1-.4 1.5-.7 1.1-.3 .4,.3 1.5-.3 1.5-.3 1.5-1.2 1.2-.3 .3,0 1.5,.2 1.5-.4 1.5,0 1.3-.3 .2,0 1.5-.4 1.5,0 1.5,.1 .1,.2 1.4-.7 1.5,.1 1.5,.1 1.5-.6 1.5-.3 1.5-.3 1.5,.1 .6-.5 .9-.2 1.5-.5 1.5,2.5 1,1.3 .5,1.5 1.4,2.6 .1,.7 1.5,4.9 1.5,4.7 1,3.4 .4,.3 0,0-631.4,0Z" fill="#d6d6ea"/><g stroke="rgba(60,60,60,0.38)" stroke-width="1" shape-rendering="crispEdges"><line x1="1166.6" y1="508.0" x2="1798.0" y2="508.0"/><line x1="1166.6" y1="500.8" x2="1798.0" y2="500.8"/><line x1="1166.6" y1="495.3" x2="1798.0" y2="495.3"/><line x1="1166.6" y1="490.8" x2="1798.0" y2="490.8"/><line x1="1166.6" y1="487.0" x2="1798.0" y2="487.0"/><line x1="1166.6" y1="483.6" x2="1798.0" y2="483.6"/><line x1="1166.6" y1="480.7" x2="1798.0" y2="480.7"/><line x1="1166.6" y1="478.1" x2="1798.0" y2="478.1"/><line x1="1166.6" y1="460.9" x2="1798.0" y2="460.9"/><line x1="1166.6" y1="450.8" x2="1798.0" y2="450.8"/><line x1="1166.6" y1="443.7" x2="1798.0" y2="443.7"/><line x1="1166.6" y1="438.2" x2="1798.0" y2="438.2"/><line x1="1166.6" y1="433.6" x2="1798.0" y2="433.6"/><line x1="1166.6" y1="429.8" x2="1798.0" y2="429.8"/><line x1="1166.6" y1="426.5" x2="1798.0" y2="426.5"/><line x1="1166.6" y1="423.6" x2="1798.0" y2="423.6"/><line x1="1166.6" y1="421.0" x2="1798.0" y2="421.0"/><line x1="1166.6" y1="403.7" x2="1798.0" y2="403.7"/><line x1="1166.6" y1="393.7" x2="1798.0" y2="393.7"/><line x1="1166.6" y1="386.5" x2="1798.0" y2="386.5"/><line x1="1166.6" y1="381.0" x2="1798.0" y2="381.0"/><line x1="1166.6" y1="376.5" x2="1798.0" y2="376.5"/><line x1="1166.6" y1="372.7" x2="1798.0" y2="372.7"/><line x1="1166.6" y1="369.3" x2="1798.0" y2="369.3"/><line x1="1166.6" y1="366.4" x2="1798.0" y2="366.4"/><line x1="1166.6" y1="363.8" x2="1798.0" y2="363.8"/><line x1="1166.6" y1="346.6" x2="1798.0" y2="346.6"/><line x1="1203.6" y1="345.0" x2="1203.6" y2="514.3"/><line x1="1283.0" y1="345.0" x2="1283.0" y2="514.3"/><line x1="1362.4" y1="345.0" x2="1362.4" y2="514.3"/><line x1="1441.8" y1="345.0" x2="1441.8" y2="514.3"/><line x1="1521.2" y1="345.0" x2="1521.2" y2="514.3"/><line x1="1600.6" y1="345.0" x2="1600.6" y2="514.3"/><line x1="1680.0" y1="345.0" x2="1680.0" y2="514.3"/><line x1="1759.4" y1="345.0" x2="1759.4" y2="514.3"/></g><path d="M1166.6,426.7l.7,0 .8,.3 1-.3 .5-.1 .7,.8 .7-6.8 .1-1 1.5-15.2 .4-4.2 .9-9 .2,0 .5-.7 1-.3 1.5-1 .4-.2 1.1-.3 1.5-.1 1.5,.3 1.5-.5 1.5,.5 1.5-.1 1.5-.1 1.5-.2 1.5,0 1.5,.2 1.5,.3 1.5,0 1.5,.2 1.5,.1 1.5,0 1.5,0 1.5-.5 1.5,.3 1.5-.6 1.5-.2 1.5-.1 1.5,.4 1.5,.1 1.3,.1 .2,.3 1.5-.2 1.5-.4 1.5,.1 1.3-.4 .2,0 1.4-1.9 .1-.1 1.5-1 1.5-1.6 1.5-1.3 .5-.5 1-.6 1.5-1.8 .1-.4 1.4-.9 1.4-1.5 .1-.2 1.5-.6 1.5,.3 1.5,.1 .2,.2 1.3,.2 1.5-.6 1.5,.2 .7-.2 .8,1.5 1.5,2.6 1.5,2.6 1,1.6 .5-.1 .3-.2 1.2-1.4 1.5-1.1 1.5-1.9 1.5-1.2 .9-1.1 .6,.4 1.5,.5 .2-.3 1.3,.5 1.5-.2 1.5,.1 1.5,.5 .2-.4 1.3,.5 1.5,.4 1.5-.3 1.5,.5 .1-.2 1.4,.1 1.5,.6 .1-.6 1.4,.6 .7,0 .1,.4 .7,1.2 1.4,2.1 .1-.2 1.4,1.8 .1-.2 1.3-2.9 .2-.2 1.5-3.5 .6-1.3 .3-.9 .6-.7 1.5-.5 1.5-.9 1.5-.6 1.5-1 .4-.2 1.1,2.7 1.3,3.4 .2-1.2 1.5-5.8 .7-2.7 .8,27.9 .1,3 .3,10.3 1.1-9.7 1.4-11.8 .1-.8 1.5-4.4 1.5-3.6 .1-.7 .3-.9 1.1,2.2 .3,.8 1.2,2.1 .5,.8 1,2.4 .7,1 .2,.4 .6,6.4 .9,9.2 .6,5.8 1.1,10.9 .4-5.5 1.5-20.2 .9-12.1 .6-.4 1.5,0 1.5,.6 .1,.3 1.4-.4 1.1-.4 .4,2.8 .8,5.4 .7,4.6 1.5-11.4 1.4-10.7 .1,.5 1.5-.1 .9,.7 .6-.3 1.5,0 1.5,.7 1.5,.8 1.5,.6 1.5,.4 1.5,.3 .1,.1 1.4-.6 1.5,.1 1.5-.3 1.5-.1 1.4,.4 .1-.1 1.5-.1 1.5-.3 1.5,.7 1.5,.3 1.5,.1 1.5,.1 .6-.1 .9,.8 1.5,.3 1.5,1.2 1.5,.7 1.5,.4 .4,0 1.1,.5 1.5,1.2 1.5,.7 .8,.4 .7-1.7 1.5-4.3 1.5-3.9 1.1-3.2 .4,0 1.5-.2 1.5,.2 1.5,.1 1.5,.4 1.5,0 1.5,.4 .4,.1 1.1-.2 1.5-.3 1.5,.1 1.5,.4 1.5-.5 1.5-.3 1.5,.4 1.5-.2 .5-.2 1,.3 1.5-.4 1.5-.5 1.5-.1 1.5-.8 1.5-.2 1.5-.5 1.5,.3 1.5-.4 1.5-.6 1.5-.7 1,.3 .5,1.3 1.5,2.5 1.5,2.1 1.5,2.5 1.5,2.1 1.5,2.8 1.5,2.4 .3,.3 1.2,1 1.2,.8 .3,.3 1.5,.6 1.5,1.2 1.5,1.5 1.5,.7 1,.7 .5-.3 1.5-1.4 1.5-1.6 1.5-.8 1.5-.9 1.5-1.5 1.5-.7 .2-.3 1.3,.1 1.5-.4 1.5-.1 1.5-.3 1.5-.5 1.5,.9 1.5,1.8 1.5,.9 1.5,1.3 1.4,1.6 .1,.1 1.5-.5 1.5-.3 1.5-.6 1.5,0 1.5,0 1.5,0 1.5-.5 1.5-.4 1.5-.2 1.5-.2 1.5-.4 1.5-1 1.5-.2 1.5-.3 .7-.5 .8-.1 1.5,.9 .1,.2 1.4,1 1.5,.7 1.5,0 1.5,.3 1.5,.8 1.5,.4 1.5,.9 1.5,.9 .3,.5 1.2,.3 1.2,.4 .3,.2 .9,.2 .6-.5 1.5-.1 1.5,.2 1.5,.7 1.5,.4 1.5,.2 1.5,.8 1.5,0 1.1,.6 .4-.4 1.5-1 .5-.8 1-.3 1.5-1.1 1.5-1.4 .9-.6 .6,.6 1.5,2.2 1.5,2.3 1.2,2.1 .3,.3 1.5-.7 1.5-1.2 1.5-.8 1.3-.5 .2,.4 1.5,.3 1.5,1 1.5,.9 1.5,1 1.5,.2 .8,.6 .7,0 1.5,.7 1.5,.6 1.5-.9 1.5-.6 1.5-.7 1.5,.3 1.3,.3 .2-.9 1.5-7.7 1.5-8.4 1.5-7.7 .1-.9 1.4-1.1 1.5-.9 1.5-.2 1.5-.5 .2,.1 1.3-.2 1.5-.8 1.5-.3 .6-.7 .9-.1 1.5-.4 1.5-.6 1.5-.4 1.5-.6 .4,0 1.1,.1 1.3,.8 .2,.4 1.5,.9 1.5,.3 1.5,.2 .2,.6 1.3,0 1.5-.5 1.5-.2 .5-.2 1,.2 1.5-.1 1.5-.1 .9,.1 .6-.3 1.5-1.1 1.5-1.5 1.5-.8 1-1.4 .5-.2 1.5-.4 1.5-.2 1.5,.3 1.5,.2 1.5-.3 1.5-.1 1.4,.2 .1,.3 1.1,.6 .4,.4 1.5,.7 .6-.1 .9,2.9 1.5,4.6 1.5,4 1.5,4.9 1.5,4.2 1.5,4.1 .1,.7 1.4-.3 1.5-.6 1.5-.7 1.5-.3 1.4-.3 .1-.1 1.5-.4 .8-.8 .7-.8 1.5-.4 .2-.2 1.3,6.3 .7,3.5 .8-.6 1.5-.5 1.5-1.4 1.5-.9 1.5-1.2 .9-.1 .6,.7 1.5,.3 1.5,.2 1.3,.5 .2,0 1.5,.3 1.2,.8 .3-.9 1.5-3.5 1.4-3.9 .1,.1 1.5-.6 1.5,.2 1.5,.3 1.5,.1 1.5-.7 1.5-.4 1.5-.6 1.5-.5 1.5-.3 1.5-.1 1.5-.4 1.5,.1 .1,.6 1.4-.6 1.5-.1 1.5-.3 .5-.1 1-.6 1.4-.1 .1,.4 1.5,.7 1.5,.8 1.5,.3 1.5,.2 1.5,.8 1.5,.6 1.5,.4 1.5,.9 .1,.4 1.4,0 1,.1 .5,.4 1.5,.3 1.5,.3 1.4,.2 .1,0 1.5-2.9 1.5-2.6 1.5-1.9 .2-.3 1.3,.7 1.2-.1 .3-.2 1.5,.8 .6-.1 .9,.3 1.5,.8 1.5,.7 1.5,1 .7,.7 .8,.2 1.5-.2 1.5-.8 1.1-.8 .4,.5 1.5,1.6 1.5,1.3 .2,0 1.3,0 1.5,.6 1.5-.1 1.5,.7 1.5-.1 1.5,.7 .9,.5 .6-1 1.5-1.9 1.5-2 1.5-2 1.5-1.8 .7-1.1 .8,.5 1.5,.3 1.5-.6 1.5-.4 1.5-.5 1.5-.4 1.5,.1 1.5-.4 .9-.2 .6,.6 1.5,.7 1.5,1 1.2,.9 .3-.4 1.5,.3 .7,.9 .8,1.7 1.5,2.1 1.3,2.7 .2,0 1.5-.2 1.5-.4 .5-.6 1-.4 1.5-.4 1.1-.3 .4,.3 1.5-.4 1.5-1.1 1.5-1 1.2,.1 .3-.1 1.5,0 1.5,.2 1.5,.3 1.3,.7 .2-.5 1.5-3 1.5-2.1 1.5-3 .1-.2 1.4-.3 1.5-.2 1.5-.3 1.5-.1 1.5-.5 1.5-.4 1.5-.2 .6,0 .9-.1 1.5,.5 1.5,0 1,.2 .5-6.9 1.4-19.5 .1,.4 1.5,.5 1.5,.2 1,.4 .4,.6" fill="none" stroke="#2a8a2a" stroke-width="1.1"/><path d="M1166.6,505l.7-14.4 .8-7.7 1-8.6 .5,.7 .7,1.4 .7,1.5 .1,.2 1.5,8.8 .4,2.5 .9,0 .2,.2 .5-.1 1,.1 1.5,.5 .4,.4 1.1,.2 1.5,.2 1.5-.6 1.5-.3 1.5-.1 1.5-.1 1.5,0 1.5,.2 1.5,.5 1.5,.3 1.5,.3 1.5-.6 1.5,.4 1.5-.1 1.5-.4 1.5,0 1.5-.4 1.5,.6 1.5,.2 1.5-.5 1.5,.3 1.5-.5 1.5-.4 1.3,.1 .2,.7 1.5,1.3 1.5,.1 1.5,.3 1.3,.8 .2-.2 1.4,1.3 .1,.5 1.5-.2 1.5-.1 1.5,.1 .5,0 1-.7 1.5-.8 .1-.4 1.4-.2 1.4-.7 .1,.2 1.5-.1 1.5-.7 1.5-.1 .2-.1 1.3-.4 1.5-1.2 1.5-.3 .7-.4 .8-.7 1.5-1 1.5-.6 1-.7 .5-.6 .3,.2 1.2,.1 1.5,.2 1.5,.4 1.5,.1 .9,.3 .6,.3 1.5,.2 .2,.4 1.3,1.2 1.5,1.1 1.5,1.2 1.5,2 .2,0 1.3,1 1.5,.7 1.5,.7 1.5,.8 .1,.1 1.4-.4 1.5-.6 .1,.6 1.4,2.5 .7,1.3 .1-.7 .7-.7 1.4-2 .1-.2 1.4,1.4 .1,0 1.3,1.4 .2,.4 1.5,.3 .6-.1 .3,.2 .6-.1 1.5,.5 1.5,.9 1.5,.2 1.5-3.2 .4-.9 1.1-3 1.3-2.8 .2-.3 1.5-3.4 .7-2.4 .8-1.5 .1-.6 .3,.6 1.1,1.8 1.4,1.9 .1-.1 1.5,2.3 1.5,3.2 .1,.3 .3,0 1.1,.5 .3,0 1.2,12.7 .5,5.5 1,1.3 .7,.6 .2-2.2 .6-7.4 .9-10.9 .6-.5 1.1-.5 .4,.1 1.5-.6 .9,0 .6-.6 1.5-.9 1.5-1.5 .1,.2 1.4-2.5 1.1-1.5 .4-.5 .8-1.3 .7,.7 1.5,1.7 1.4,1.2 .1-.4 1.5,1.6 .9,1 .6,.8 1.5,1 1.5,.9 1.5,.5 1.5,.1 1.5,.6 1.5,.3 .1,.6 1.4,.3 1.5,1 1.5,.2 1.5,.8 1.4,.4 .1-.1 1.5-.1 1.5-.1 1.5-.1 1.5-.4 1.5,.3 1.5-.1 .6,.1 .9-.4 1.5,.2 1.5-.1 1.5,.1 1.5-.4 .4,.1 1.1-.2 1.5,.8 1.5,.3 .8,.4 .7-.4 1.5-.3 1.5,.2 1.1,.2 .4,.4 1.5,.7 1.5,.2 1.5,.4 1.5,.1 1.5,.3 1.5-.1 .4,.5 1.1-1.1 1.5-.6 1.5-.4 1.5-1.2 1.5-1.1 1.5-.5 1.5-.4 1.5-.5 .5-.6 1-.6 1.5,.4 1.5-.3 1.5,.1 1.5-.3 1.5-.1 1.5,.1 1.5-.2 1.5-.5 1.5,.3 1.5,.3 1-.5 .5-.1 1.5,.3 1.5,.1 1.5,.2 1.5,0 1.5,0 1.5-.7 .3-.1 1.2,.1 1.2-.4 .3,.2 1.5,.4 1.5-.5 1.5-.4 1.5,.3 1,.1 .5-.1 1.5-.3 1.5,.2 1.5,.1 1.5-.2 1.5-.2 1.5-.4 .2-.1 1.3,.1 1.5,.1 1.5,.5 1.5,.4 1.5-.3 1.5-.3 1.5,.3 1.5-.2 1.5,.3 1.4,.3 .1-.4 1.5-.2 1.5,.2 1.5-.2 1.5-.3 1.5,.7 1.5-.1 1.5,.2 1.5,.5 1.5,.3 1.5,.6 1.5,.8 1.5,.8 1.5,.4 1.5,.5 .7,.3 .8,.3 1.5,.5 .1,.5 1.4,.2 1.5,.9 1.5,.7 1.5,.4 1.5,1.4 1.5,1.1 1.5,.3 1.5,.9 .3,.4 1.2,.4 1.2,1 .3-.1 .9-.1 .6-.8 1.5-.7 1.5-.4 1.5-.4 1.5-.4 1.5-.5 1.5-.7 1.5-.1 1.1-.6 .4-.2 1.5-.8 .5-.4 1-.2 1.5,0 1.5-.1 .9,0 .6-.1 1.5,.4 1.5-.2 1.2,.3 .3-.2 1.5,.3 1.5,.7 1.5-.3 1.3-.1 .2,.1 1.5-.2 1.5,.1 1.5,.3 1.5,0 1.5,.1 .8,.4 .7-.3 1.5,.8 1.5-.4 1.5-.1 1.5-.1 1.5,.6 1.5,0 1.3,.3 .2,.6 1.5-.4 1.5,.4 1.5-.2 .1,.5 1.4,0 1.5,.4 1.5-.3 1.5,.5 .2,0 1.3,0 1.5-.1 1.5,.2 .6-.2 .9,.9 1.5,1.1 1.5,.9 1.5,.8 1.5,1.6 .4,.1 1.1,1.3 1.3,1.4 .2-.1 1.5,.3 1.5-.1 1.5,0 .2-.4 1.3-.2 1.5,.5 1.5-.2 .5,.4 1-.5 1.5,.5 1.5-.1 .9,.2 .6,.1 1.5-.6 1.5-.6 1.5-.4 1,.5 .5,.4 1.5-.4 1.5,.1 1.5-.1 1.5,0 1.5-.3 1.5-.7 1.4-.1 .1-.3 1.1-.1 .4-.3 1.5,.5 .6,.3 .9,.2 1.5,.6 1.5,.2 1.5,.2 1.5,0 1.5,.2 .1,.5 1.4-1.1 1.5-1.5 1.5-2.1 1.5-1.5 1.4-1.9 .1-.3 1.5-1.5 .8-.7 .7-.8 1.5-.7 .2,.1 1.3-.2 .7-.3 .8-.1 1.5-.7 1.5-.6 1.5-.8 1.5-.1 .9,.3 .6,.1 1.5-1 1.5-.5 1.3-.3 .2,.3 1.5-.2 1.2,.2 .3-.4 1.5-.5 1.4,.1 .1-.2 1.5-.2 1.5,.2 1.5,.4 1.5-.5 1.5-.3 1.5,0 1.5,.3 1.5-.1 1.5,.5 1.5-.3 1.5,0 1.5,.3 .1,.3 1.4-.5 1.5,.3 1.5,.3 .5-.4 1-.1 1.4,1.2 .1,0 1.5,1.1 1.5,.6 1.5,.6 1.5,.3 1.5,1.2 1.5,.4 1.5,.6 1.5,.6 .1-.3 1.4,.7 1,.9 .5,.2 1.5-1.3 1.5-.5 1.4-.7 .1,.4 1.5-.5 1.5-.7 1.5-.2 .2-.6 1.3-.8 1.2-.1 .3-.3 1.5,.4 .6-.3 .9-.4 1.5,.5 1.5-.4 1.5-.5 .7,.3 .8,.2 1.5-.6 1.5,.5 1.1-.3 .4-.2 1.5-.5 1.5,.6 .2,.4 1.3,.3 1.5-.1 1.5-.7 1.5-.4 1.5,.3 1.5-.5 .9,.1 .6-.4 1.5,.5 1.5-.6 1.5-.4 1.5,.4 .7-.4 .8,.6 1.5-.5 1.5,.3 1.5-.1 1.5-.8 1.5,.1 1.5-.1 1.5-.2 .9-.1 .6-.4 1.5,.4 1.5-.6 1.2,.3 .3-.1 1.5,.7 .7,.5 .8,.4 1.5,1.7 1.3,1.5 .2,0 1.5,.6 1.5,1.1 .5,.6 1-.4 1.5-.7 1.1-.3 .4,.3 1.5-.3 1.5-.3 1.5-1.2 1.2-.3 .3,0 1.5,.2 1.5-.4 1.5,0 1.3-.3 .2,0 1.5-.4 1.5,0 1.5,.1 .1,.2 1.4-.7 1.5,.1 1.5,.1 1.5-.6 1.5-.3 1.5-.3 1.5,.1 .6-.5 .9-.2 1.5-.5 1.5,2.5 1,1.3 .5,1.5 1.4,2.6 .1,.7 1.5,4.9 1.5,4.7 1,3.4 .4,.3" fill="none" stroke="#2a2a9a" stroke-width="1.2"/><path d="M1166.6,340.0 V514.3 H1798.0" fill="none" stroke="#555" stroke-width="1.2"/><g fill="#000" font-size="14" font-family="Liberation Sans, sans-serif"><text x="1163" y="172.7" text-anchor="end">100</text><text x="1163" y="203.5" text-anchor="end">40</text><text x="1163" y="251.6" text-anchor="end">10</text><text x="1163" y="282.6" text-anchor="end">4</text><text x="1163" y="323.8" text-anchor="end">1</text><text x="1163" y="356.6" text-anchor="end">2K</text><text x="1163" y="390.6" text-anchor="end">500</text><text x="1163" y="430.5" text-anchor="end">100</text><text x="1163" y="470.5" text-anchor="end">20</text><text x="1163" y="505.3" text-anchor="end">5</text><text x="1202.4" y="339.7" text-anchor="middle">11:15</text><text x="1202.4" y="534.7" text-anchor="middle">11:15</text><text x="1281.8" y="339.7" text-anchor="middle">11:20</text><text x="1281.8" y="534.7" text-anchor="middle">11:20</text><text x="1361.2" y="339.7" text-anchor="middle">11:25</text><text x="1361.2" y="534.7" text-anchor="middle">11:25</text><text x="1440.6" y="339.7" text-anchor="middle">11:30</text><text x="1440.6" y="534.7" text-anchor="middle">11:30</text><text x="1520.0" y="339.7" text-anchor="middle">11:35</text><text x="1520.0" y="534.7" text-anchor="middle">11:35</text><text x="1599.4" y="339.7" text-anchor="middle">11:40</text><text x="1599.4" y="534.7" text-anchor="middle">11:40</text><text x="1678.8" y="339.7" text-anchor="middle">11:45</text><text x="1678.8" y="534.7" text-anchor="middle">11:45</text><text x="1758.2" y="339.7" text-anchor="middle">11:50</text><text x="1758.2" y="534.7" text-anchor="middle">11:50</text></g></svg>
<div class="abs" style="left:1168px;top:296.2px;width:43px;height:27px;border:1px solid #bbb;border-radius:5px;background:linear-gradient(#fff,#f3f3f3);"></div>
<div class="abs" style="left:1168px;top:491.4px;width:43px;height:27px;border:1px solid #bbb;border-radius:5px;background:linear-gradient(#fff,#f3f3f3);"></div>
<div style="position:absolute;left:1174.6px;top:303.2px;font-size:14px;line-height:20px;color:#333;font-weight:normal;white-space:nowrap;letter-spacing:0.219px;">30</div>
<div style="position:absolute;left:1174.6px;top:498.4px;font-size:14px;line-height:20px;color:#333;font-weight:normal;white-space:nowrap;letter-spacing:0.219px;">30</div>
<div class="abs" style="left:280px;top:571px;width:1595px;height:400px;background:#fff;border:1px solid #ddd;border-radius:4px;"></div>
<div class="abs" style="left:281px;top:572px;width:1595px;height:40px;background:#f5f5f5;border-bottom:1px solid #ddd;border-radius:3px 3px 0 0"></div>
<svg style="position:absolute;left:298px;top:588px" width="15" height="12" viewBox="0 0 15 12" shape-rendering="crispEdges">
<rect x="0" y="0" width="14" height="3" rx="0.6" fill="#333"/><rect x="0" y="4" width="14" height="3" rx="0.6" fill="#333"/><rect x="0" y="8" width="14" height="3" rx="0.6" fill="#333"/>
<rect x="10" y="1" width="3" height="1" fill="#f5f5f5"/><rect x="5" y="5" width="8" height="1" fill="#f5f5f5"/><rect x="8" y="9" width="5" height="1" fill="#f5f5f5"/>
</svg>
<div style="position:absolute;left:318.0px;top:584.4px;font-size:14px;line-height:20px;color:#333;font-weight:normal;white-space:nowrap;letter-spacing:0.164px;">Logs</div>
<div class="abs" style="left:1568.5px;top:582.5px;width:60px;height:27px;background:#fff;border:1px solid #ccc;border-radius:4px"></div>
<div style="position:absolute;left:1583.0px;top:588.6px;font-size:12px;line-height:20px;color:#333;font-weight:bold;white-space:nowrap;letter-spacing:0.328px;">10</div>
<div class="abs" style="left:1619.5px;top:584.5px;width:8px;height:24px;background:#efefef;border-right:2px solid #666;border-bottom:2px solid #666;border-radius:0 2px 2px 0"></div>
<div style="position:absolute;left:1621px;top:594.5px;width:0;height:0;border-left:3px solid transparent;border-right:3px solid transparent;border-top:4px solid #111"></div>
<div class="abs" style="left:1636.5px;top:590px;width:10px;height:11px;border:1px solid #bbb;border-radius:3px;background:linear-gradient(#fff,#eee)"></div>
<div style="position:absolute;left:1652.5px;top:588.4px;font-size:14px;line-height:20px;color:#333;font-weight:normal;white-space:nowrap;letter-spacing:0.141px;">INFO</div>
<div class="abs" style="left:1692px;top:589.5px;width:12px;height:12px;border-radius:3px;background:linear-gradient(#d4501a,#e8763e)"></div>
<svg class="abs" style="left:1692px;top:589.5px" width="12" height="12" viewBox="0 0 12 12"><path d="M2.5,6 L5,8.5 L9.5,3.5" fill="none" stroke="#fff" stroke-width="1.6"/></svg>
<div class="abs" style="left:1780px;top:589.5px;width:12px;height:12px;border-radius:3px;background:linear-gradient(#d4501a,#e8763e)"></div>
<svg class="abs" style="left:1780px;top:589.5px" width="12" height="12" viewBox="0 0 12 12"><path d="M2.5,6 L5,8.5 L9.5,3.5" fill="none" stroke="#fff" stroke-width="1.6"/></svg>
<div style="position:absolute;left:1708.5px;top:588.4px;font-size:14px;line-height:20px;color:#333;font-weight:normal;white-space:nowrap;letter-spacing:-0.022px;">WARNING</div>
<div style="position:absolute;left:1796.0px;top:588.4px;font-size:14px;line-height:20px;color:#333;font-weight:normal;white-space:nowrap;letter-spacing:0.027px;">CRITICAL</div>
<div class="abs" style="left:296px;top:628px;width:1563px;height:36px;background:#fff;border:1px solid #ddd;border-bottom:2px solid #ddd"></div>
<div style="position:absolute;left:305.0px;top:638.4px;font-size:14px;line-height:20px;color:#333;font-weight:bold;white-space:nowrap;letter-spacing:0.145px;">Time</div>
<div style="position:absolute;left:430.7px;top:638.4px;font-size:14px;line-height:20px;color:#333;font-weight:bold;white-space:nowrap;letter-spacing:0.257px;">Channel</div>
<div style="position:absolute;left:557.9px;top:638.4px;font-size:14px;line-height:20px;color:#333;font-weight:bold;white-space:nowrap;letter-spacing:0.244px;">Level</div>
<div style="position:absolute;left:700.7px;top:638.4px;font-size:14px;line-height:20px;color:#333;font-weight:bold;white-space:nowrap;letter-spacing:0.028px;">Script Name</div>
<div style="position:absolute;left:871.7px;top:638.4px;font-size:14px;line-height:20px;color:#333;font-weight:bold;white-space:nowrap;letter-spacing:0.091px;">Source</div>
<div style="position:absolute;left:1097.0px;top:638.4px;font-size:14px;line-height:20px;color:#333;font-weight:bold;white-space:nowrap;letter-spacing:0.168px;">Date</div>
<div style="position:absolute;left:1236.9px;top:638.4px;font-size:14px;line-height:20px;color:#333;font-weight:bold;white-space:nowrap;letter-spacing:0.120px;">Paste name</div>
<div style="position:absolute;left:1427.9px;top:638.4px;font-size:14px;line-height:20px;color:#333;font-weight:bold;white-space:nowrap;letter-spacing:0.270px;">Message</div>
<div style="position:absolute;left:1747.8px;top:638.4px;font-size:14px;line-height:20px;color:#333;font-weight:bold;white-space:nowrap;letter-spacing:0.241px;">Actions</div>
<div class="abs" style="left:297px;top:667px;width:1563px;height:36px;background:#fcf8e3;border-bottom:1px solid #ddd"></div>
<div style="position:absolute;left:305.0px;top:676.9px;font-size:14px;line-height:20px;color:#333;font-weight:normal;white-space:nowrap;letter-spacing:0.318px;">11:17:19</div>
<div style="position:absolute;left:430.7px;top:676.9px;font-size:14px;line-height:20px;color:#333;font-weight:normal;white-space:nowrap;letter-spacing:0.036px;">Script</div>
<div style="position:absolute;left:557.9px;top:676.9px;font-size:14px;line-height:20px;color:#333;font-weight:normal;white-space:nowrap;letter-spacing:-0.022px;">WARNING</div>
<div style="position:absolute;left:700.7px;top:676.9px;font-size:14px;line-height:20px;color:#333;font-weight:normal;white-space:nowrap;letter-spacing:0.069px;">Mails</div>
<div style="position:absolute;left:871.7px;top:676.9px;font-size:14px;line-height:20px;color:#337ab7;font-weight:normal;white-space:nowrap;letter-spacing:0.173px;">pastebin.com_pro</div>
<div style="position:absolute;left:1097.0px;top:676.9px;font-size:14px;line-height:20px;color:#333;font-weight:normal;white-space:nowrap;letter-spacing:0.219px;">20180620</div>
<div style="position:absolute;left:1236.9px;top:676.9px;font-size:14px;line-height:20px;color:#333;font-weight:normal;white-space:nowrap;letter-spacing:0.009px;">K4THWgYj.gz</div>
<svg style="position:absolute;left:1428.0px;top:678.2px" width="15" height="15" viewBox="0 0 15 15">
<rect x="0" y="6" width="2.2" height="7.5" fill="#333"/>
<path d="M4.4,8.6 C4.8,7 6,5.6 6.8,4 C7.3,3 7.2,1.4 8,1.3 C9.2,1.2 9.4,2.6 9.1,4 L8.7,5.9 H12.6 C13.7,5.9 14.2,6.7 13.8,7.7 L12,12.3 C11.6,13.3 11,13.8 10,13.8 H7 C5.4,13.8 4.3,12.8 4.3,11 Z" fill="none" stroke="#333" stroke-width="1.3" stroke-linejoin="round"/>
</svg>
<div style="position:absolute;left:1456.4px;top:676.9px;font-size:14px;line-height:20px;color:#333;font-weight:normal;white-space:nowrap;letter-spacing:0.181px;">234 e-mail(s)</div>
<svg style="position:absolute;left:1747.6px;top:680.5px" width="14" height="14" viewBox="0 0 14 14">
<circle cx="5.8" cy="5.8" r="4.6" fill="none" stroke="#337ab7" stroke-width="2"/>
<path d="M9,9 L12.6,12.6" stroke="#337ab7" stroke-width="2.6" stroke-linecap="round"/>
<path d="M3.4,5.8 H8.2 M5.8,3.4 V8.2" stroke="#337ab7" stroke-width="1.5"/>
</svg>
<div class="abs" style="left:297px;top:704px;width:1563px;height:36px;background:#fcf8e3;border-bottom:1px solid #ddd"></div>
<div style="position:absolute;left:305.0px;top:713.9px;font-size:14px;line-height:20px;color:#333;font-weight:normal;white-space:nowrap;letter-spacing:0.318px;">11:17:21</div>
<div style="position:absolute;left:430.7px;top:713.9px;font-size:14px;line-height:20px;color:#333;font-weight:normal;white-space:nowrap;letter-spacing:0.036px;">Script</div>
<div style="position:absolute;left:557.9px;top:713.9px;font-size:14px;line-height:20px;color:#333;font-weight:normal;white-space:nowrap;letter-spacing:-0.022px;">WARNING</div>
<div style="position:absolute;left:700.7px;top:713.9px;font-size:14px;line-height:20px;color:#333;font-weight:normal;white-space:nowrap;letter-spacing:0.122px;">Credential</div>
<div style="position:absolute;left:871.7px;top:713.9px;font-size:14px;line-height:20px;color:#337ab7;font-weight:normal;white-space:nowrap;letter-spacing:0.173px;">pastebin.com_pro</div>
<div style="position:absolute;left:1097.0px;top:713.9px;font-size:14px;line-height:20px;color:#333;font-weight:normal;white-space:nowrap;letter-spacing:0.219px;">20180620</div>
<div style="position:absolute;left:1236.9px;top:713.9px;font-size:14px;line-height:20px;color:#333;font-weight:normal;white-space:nowrap;letter-spacing:0.009px;">K4THWgYj.gz</div>
<svg style="position:absolute;left:1428.0px;top:715.2px" width="15" height="15" viewBox="0 0 15 15">
<rect x="0" y="6" width="2.2" height="7.5" fill="#333"/>
<path d="M4.4,8.6 C4.8,7 6,5.6 6.8,4 C7.3,3 7.2,1.4 8,1.3 C9.2,1.2 9.4,2.6 9.1,4 L8.7,5.9 H12.6 C13.7,5.9 14.2,6.7 13.8,7.7 L12,12.3 C11.6,13.3 11,13.8 10,13.8 H7 C5.4,13.8 4.3,12.8 4.3,11 Z" fill="none" stroke="#333" stroke-width="1.3" stroke-linejoin="round"/>
</svg>
<div style="position:absolute;left:1456.4px;top:713.9px;font-size:14px;line-height:20px;color:#333;font-weight:normal;white-space:nowrap;letter-spacing:0.150px;">234 credentials found.</div>
<svg style="position:absolute;left:1747.6px;top:717.5px" width="14" height="14" viewBox="0 0 14 14">
<circle cx="5.8" cy="5.8" r="4.6" fill="none" stroke="#337ab7" stroke-width="2"/>
<path d="M9,9 L12.6,12.6" stroke="#337ab7" stroke-width="2.6" stroke-linecap="round"/>
<path d="M3.4,5.8 H8.2 M5.8,3.4 V8.2" stroke="#337ab7" stroke-width="1.5"/>
</svg>
<div class="abs" style="left:297px;top:741px;width:1563px;height:36px;background:#fcf8e3;border-bottom:1px solid #ddd"></div>
<div style="position:absolute;left:305.0px;top:750.9px;font-size:14px;line-height:20px;color:#333;font-weight:normal;white-space:nowrap;letter-spacing:0.318px;">11:33:38</div>
<div style="position:absolute;left:430.7px;top:750.9px;font-size:14px;line-height:20px;color:#333;font-weight:normal;white-space:nowrap;letter-spacing:0.036px;">Script</div>
<div style="position:absolute;left:557.9px;top:750.9px;font-size:14px;line-height:20px;color:#333;font-weight:normal;white-space:nowrap;letter-spacing:-0.022px;">WARNING</div>
<div style="position:absolute;left:700.7px;top:750.9px;font-size:14px;line-height:20px;color:#333;font-weight:normal;white-space:nowrap;letter-spacing:0.134px;">CreditCard</div>
<div style="position:absolute;left:871.7px;top:750.9px;font-size:14px;line-height:20px;color:#337ab7;font-weight:normal;white-space:nowrap;letter-spacing:0.173px;">pastebin.com_pro</div>
<div style="position:absolute;left:1097.0px;top:750.9px;font-size:14px;line-height:20px;color:#333;font-weight:normal;white-space:nowrap;letter-spacing:0.219px;">20180620</div>
<div style="position:absolute;left:1236.9px;top:750.9px;font-size:14px;line-height:20px;color:#333;font-weight:normal;white-space:nowrap;letter-spacing:0.141px;">5RQap0cM.gz</div>
<svg style="position:absolute;left:1428.0px;top:752.2px" width="15" height="15" viewBox="0 0 15 15">
<rect x="0" y="6" width="2.2" height="7.5" fill="#333"/>
<path d="M4.4,8.6 C4.8,7 6,5.6 6.8,4 C7.3,3 7.2,1.4 8,1.3 C9.2,1.2 9.4,2.6 9.1,4 L8.7,5.9 H12.6 C13.7,5.9 14.2,6.7 13.8,7.7 L12,12.3 C11.6,13.3 11,13.8 10,13.8 H7 C5.4,13.8 4.3,12.8 4.3,11 Z" fill="none" stroke="#333" stroke-width="1.3" stroke-linejoin="round"/>
</svg>
<div style="position:absolute;left:1456.4px;top:750.9px;font-size:14px;line-height:20px;color:#333;font-weight:normal;white-space:nowrap;letter-spacing:0.171px;">1 valid number(s)</div>
<svg style="position:absolute;left:1747.6px;top:754.5px" width="14" height="14" viewBox="0 0 14 14">
<circle cx="5.8" cy="5.8" r="4.6" fill="none" stroke="#337ab7" stroke-width="2"/>
<path d="M9,9 L12.6,12.6" stroke="#337ab7" stroke-width="2.6" stroke-linecap="round"/>
<path d="M3.4,5.8 H8.2 M5.8,3.4 V8.2" stroke="#337ab7" stroke-width="1.5"/>
</svg>
<div class="abs" style="left:297px;top:778px;width:1563px;height:36px;background:#fcf8e3;border-bottom:1px solid #ddd"></div>
<div style="position:absolute;left:305.0px;top:787.9px;font-size:14px;line-height:20px;color:#333;font-weight:normal;white-space:nowrap;letter-spacing:0.318px;">11:46:22</div>
<div style="position:absolute;left:430.7px;top:787.9px;font-size:14px;line-height:20px;color:#333;font-weight:normal;white-space:nowrap;letter-spacing:0.036px;">Script</div>
<div style="position:absolute;left:557.9px;top:787.9px;font-size:14px;line-height:20px;color:#333;font-weight:normal;white-space:nowrap;letter-spacing:-0.022px;">WARNING</div>
<div style="position:absolute;left:700.7px;top:787.9px;font-size:14px;line-height:20px;color:#333;font-weight:normal;white-space:nowrap;letter-spacing:0.134px;">CreditCard</div>
<div style="position:absolute;left:871.7px;top:787.9px;font-size:14px;line-height:20px;color:#337ab7;font-weight:normal;white-space:nowrap;letter-spacing:0.173px;">pastebin.com_pro</div>
<div style="position:absolute;left:1097.0px;top:787.9px;font-size:14px;line-height:20px;color:#333;font-weight:normal;white-space:nowrap;letter-spacing:0.219px;">20180620</div>
<div style="position:absolute;left:1236.9px;top:787.9px;font-size:14px;line-height:20px;color:#333;font-weight:normal;white-space:nowrap;letter-spacing:0.060px;">b0cqwGWN.gz</div>
<svg style="position:absolute;left:1428.0px;top:789.2px" width="15" height="15" viewBox="0 0 15 15">
<rect x="0" y="6" width="2.2" height="7.5" fill="#333"/>
<path d="M4.4,8.6 C4.8,7 6,5.6 6.8,4 C7.3,3 7.2,1.4 8,1.3 C9.2,1.2 9.4,2.6 9.1,4 L8.7,5.9 H12.6 C13.7,5.9 14.2,6.7 13.8,7.7 L12,12.3 C11.6,13.3 11,13.8 10,13.8 H7 C5.4,13.8 4.3,12.8 4.3,11 Z" fill="none" stroke="#333" stroke-width="1.3" stroke-linejoin="round"/>
</svg>
<div style="position:absolute;left:1456.4px;top:787.9px;font-size:14px;line-height:20px;color:#333;font-weight:normal;white-space:nowrap;letter-spacing:0.171px;">1 valid number(s)</div>
<svg style="position:absolute;left:1747.6px;top:791.5px" width="14" height="14" viewBox="0 0 14 14">
<circle cx="5.8" cy="5.8" r="4.6" fill="none" stroke="#337ab7" stroke-width="2"/>
<path d="M9,9 L12.6,12.6" stroke="#337ab7" stroke-width="2.6" stroke-linecap="round"/>
<path d="M3.4,5.8 H8.2 M5.8,3.4 V8.2" stroke="#337ab7" stroke-width="1.5"/>
</svg>
<div class="abs" style="left:297px;top:815px;width:1563px;height:36px;background:#fcf8e3;border-bottom:1px solid #ddd"></div>
<div style="position:absolute;left:305.0px;top:824.9px;font-size:14px;line-height:20px;color:#333;font-weight:normal;white-space:nowrap;letter-spacing:0.318px;">11:47:45</div>
<div style="position:absolute;left:430.7px;top:824.9px;font-size:14px;line-height:20px;color:#333;font-weight:normal;white-space:nowrap;letter-spacing:0.036px;">Script</div>
<div style="position:absolute;left:557.9px;top:824.9px;font-size:14px;line-height:20px;color:#333;font-weight:normal;white-space:nowrap;letter-spacing:-0.022px;">WARNING</div>
<div style="position:absolute;left:700.7px;top:824.9px;font-size:14px;line-height:20px;color:#333;font-weight:normal;white-space:nowrap;letter-spacing:0.069px;">Mails</div>
<div style="position:absolute;left:871.7px;top:824.9px;font-size:14px;line-height:20px;color:#337ab7;font-weight:normal;white-space:nowrap;letter-spacing:0.173px;">pastebin.com_pro</div>
<div style="position:absolute;left:1097.0px;top:824.9px;font-size:14px;line-height:20px;color:#333;font-weight:normal;white-space:nowrap;letter-spacing:0.219px;">20180620</div>
<div style="position:absolute;left:1236.9px;top:824.9px;font-size:14px;line-height:20px;color:#333;font-weight:normal;white-space:nowrap;letter-spacing:0.037px;">EGk7JK3h.gz</div>
<svg style="position:absolute;left:1428.0px;top:826.2px" width="15" height="15" viewBox="0 0 15 15">
<rect x="0" y="6" width="2.2" height="7.5" fill="#333"/>
<path d="M4.4,8.6 C4.8,7 6,5.6 6.8,4 C7.3,3 7.2,1.4 8,1.3 C9.2,1.2 9.4,2.6 9.1,4 L8.7,5.9 H12.6 C13.7,5.9 14.2,6.7 13.8,7.7 L12,12.3 C11.6,13.3 11,13.8 10,13.8 H7 C5.4,13.8 4.3,12.8 4.3,11 Z" fill="none" stroke="#333" stroke-width="1.3" stroke-linejoin="round"/>
</svg>
<div style="position:absolute;left:1456.4px;top:824.9px;font-size:14px;line-height:20px;color:#333;font-weight:normal;white-space:nowrap;letter-spacing:0.260px;">115 e-mail(s)</div>
<svg style="position:absolute;left:1747.6px;top:828.5px" width="14" height="14" viewBox="0 0 14 14">
<circle cx="5.8" cy="5.8" r="4.6" fill="none" stroke="#337ab7" stroke-width="2"/>
<path d="M9,9 L12.6,12.6" stroke="#337ab7" stroke-width="2.6" stroke-linecap="round"/>
<path d="M3.4,5.8 H8.2 M5.8,3.4 V8.2" stroke="#337ab7" stroke-width="1.5"/>
</svg>
<div class="abs" style="left:297px;top:852px;width:1563px;height:36px;background:#fcf8e3;border-bottom:1px solid #ddd"></div>
<div style="position:absolute;left:305.0px;top:861.9px;font-size:14px;line-height:20px;color:#333;font-weight:normal;white-space:nowrap;letter-spacing:0.318px;">11:50:43</div>
<div style="position:absolute;left:430.7px;top:861.9px;font-size:14px;line-height:20px;color:#333;font-weight:normal;white-space:nowrap;letter-spacing:0.036px;">Script</div>
<div style="position:absolute;left:557.9px;top:861.9px;font-size:14px;line-height:20px;color:#333;font-weight:normal;white-space:nowrap;letter-spacing:-0.022px;">WARNING</div>
<div style="position:absolute;left:700.7px;top:861.9px;font-size:14px;line-height:20px;color:#333;font-weight:normal;white-space:nowrap;letter-spacing:0.134px;">CreditCard</div>
<div style="position:absolute;left:871.7px;top:861.9px;font-size:14px;line-height:20px;color:#337ab7;font-weight:normal;white-space:nowrap;letter-spacing:0.173px;">pastebin.com_pro</div>
<div style="position:absolute;left:1097.0px;top:861.9px;font-size:14px;line-height:20px;color:#333;font-weight:normal;white-space:nowrap;letter-spacing:0.219px;">20180620</div>
<div style="position:absolute;left:1236.9px;top:861.9px;font-size:14px;line-height:20px;color:#333;font-weight:normal;white-space:nowrap;letter-spacing:0.050px;">HHEF0tHf.gz</div>
<svg style="position:absolute;left:1428.0px;top:863.2px" width="15" height="15" viewBox="0 0 15 15">
<rect x="0" y="6" width="2.2" height="7.5" fill="#333"/>
<path d="M4.4,8.6 C4.8,7 6,5.6 6.8,4 C7.3,3 7.2,1.4 8,1.3 C9.2,1.2 9.4,2.6 9.1,4 L8.7,5.9 H12.6 C13.7,5.9 14.2,6.7 13.8,7.7 L12,12.3 C11.6,13.3 11,13.8 10,13.8 H7 C5.4,13.8 4.3,12.8 4.3,11 Z" fill="none" stroke="#333" stroke-width="1.3" stroke-linejoin="round"/>
</svg>
<div style="position:absolute;left:1456.4px;top:861.9px;font-size:14px;line-height:20px;color:#333;font-weight:normal;white-space:nowrap;letter-spacing:0.174px;">20 valid number(s)</div>
<svg style="position:absolute;left:1747.6px;top:865.5px" width="14" height="14" viewBox="0 0 14 14">
<circle cx="5.8" cy="5.8" r="4.6" fill="none" stroke="#337ab7" stroke-width="2"/>
<path d="M9,9 L12.6,12.6" stroke="#337ab7" stroke-width="2.6" stroke-linecap="round"/>
<path d="M3.4,5.8 H8.2 M5.8,3.4 V8.2" stroke="#337ab7" stroke-width="1.5"/>
</svg>
<div class="abs" style="left:297px;top:889px;width:1563px;height:36px;background:#fcf8e3;border-bottom:1px solid #ddd"></div>
<div style="position:absolute;left:305.0px;top:898.9px;font-size:14px;line-height:20px;color:#333;font-weight:normal;white-space:nowrap;letter-spacing:0.318px;">11:50:47</div>
<div style="position:absolute;left:430.7px;top:898.9px;font-size:14px;line-height:20px;color:#333;font-weight:normal;white-space:nowrap;letter-spacing:0.036px;">Script</div>
<div style="position:absolute;left:557.9px;top:898.9px;font-size:14px;line-height:20px;color:#333;font-weight:normal;white-space:nowrap;letter-spacing:-0.022px;">WARNING</div>
<div style="position:absolute;left:700.7px;top:898.9px;font-size:14px;line-height:20px;color:#333;font-weight:normal;white-space:nowrap;letter-spacing:0.069px;">Mails</div>
<div style="position:absolute;left:871.7px;top:898.9px;font-size:14px;line-height:20px;color:#337ab7;font-weight:normal;white-space:nowrap;letter-spacing:0.173px;">pastebin.com_pro</div>
<div style="position:absolute;left:1097.0px;top:898.9px;font-size:14px;line-height:20px;color:#333;font-weight:normal;white-space:nowrap;letter-spacing:0.219px;">20180620</div>
<div style="position:absolute;left:1236.9px;top:898.9px;font-size:14px;line-height:20px;color:#333;font-weight:normal;white-space:nowrap;letter-spacing:0.050px;">HHEF0tHf.gz</div>
<svg style="position:absolute;left:1428.0px;top:900.2px" width="15" height="15" viewBox="0 0 15 15">
<rect x="0" y="6" width="2.2" height="7.5" fill="#333"/>
<path d="M4.4,8.6 C4.8,7 6,5.6 6.8,4 C7.3,3 7.2,1.4 8,1.3 C9.2,1.2 9.4,2.6 9.1,4 L8.7,5.9 H12.6 C13.7,5.9 14.2,6.7 13.8,7.7 L12,12.3 C11.6,13.3 11,13.8 10,13.8 H7 C5.4,13.8 4.3,12.8 4.3,11 Z" fill="none" stroke="#333" stroke-width="1.3" stroke-linejoin="round"/>
</svg>
<div style="position:absolute;left:1456.4px;top:898.9px;font-size:14px;line-height:20px;color:#333;font-weight:normal;white-space:nowrap;letter-spacing:0.178px;">17 e-mail(s)</div>
<svg style="position:absolute;left:1747.6px;top:902.5px" width="14" height="14" viewBox="0 0 14 14">
<circle cx="5.8" cy="5.8" r="4.6" fill="none" stroke="#337ab7" stroke-width="2"/>
<path d="M9,9 L12.6,12.6" stroke="#337ab7" stroke-width="2.6" stroke-linecap="round"/>
<path d="M3.4,5.8 H8.2 M5.8,3.4 V8.2" stroke="#337ab7" stroke-width="1.5"/>
</svg>
<div class="abs" style="left:297px;top:926px;width:1563px;height:36px;background:#fcf8e3;border-bottom:1px solid #ddd"></div>
<div style="position:absolute;left:305.0px;top:935.9px;font-size:14px;line-height:20px;color:#333;font-weight:normal;white-space:nowrap;letter-spacing:0.318px;">11:51:34</div>
<div style="position:absolute;left:430.7px;top:935.9px;font-size:14px;line-height:20px;color:#333;font-weight:normal;white-space:nowrap;letter-spacing:0.036px;">Script</div>
<div style="position:absolute;left:557.9px;top:935.9px;font-size:14px;line-height:20px;color:#333;font-weight:normal;white-space:nowrap;letter-spacing:-0.022px;">WARNING</div>
<div style="position:absolute;left:700.7px;top:935.9px;font-size:14px;line-height:20px;color:#333;font-weight:normal;white-space:nowrap;letter-spacing:0.134px;">CreditCard</div>
<div style="position:absolute;left:871.7px;top:935.9px;font-size:14px;line-height:20px;color:#337ab7;font-weight:normal;white-space:nowrap;letter-spacing:0.173px;">pastebin.com_pro</div>
<div style="position:absolute;left:1097.0px;top:935.9px;font-size:14px;line-height:20px;color:#333;font-weight:normal;white-space:nowrap;letter-spacing:0.219px;">20180620</div>
<div style="position:absolute;left:1236.9px;top:935.9px;font-size:14px;line-height:20px;color:#333;font-weight:normal;white-space:nowrap;letter-spacing:0.027px;">gCBGbuBx.gz</div>
<svg style="position:absolute;left:1428.0px;top:937.2px" width="15" height="15" viewBox="0 0 15 15">
<rect x="0" y="6" width="2.2" height="7.5" fill="#333"/>
<path d="M4.4,8.6 C4.8,7 6,5.6 6.8,4 C7.3,3 7.2,1.4 8,1.3 C9.2,1.2 9.4,2.6 9.1,4 L8.7,5.9 H12.6 C13.7,5.9 14.2,6.7 13.8,7.7 L12,12.3 C11.6,13.3 11,13.8 10,13.8 H7 C5.4,13.8 4.3,12.8 4.3,11 Z" fill="none" stroke="#333" stroke-width="1.3" stroke-linejoin="round"/>
</svg>
<div style="position:absolute;left:1456.4px;top:935.9px;font-size:14px;line-height:20px;color:#333;font-weight:normal;white-space:nowrap;letter-spacing:0.229px;">114 valid number(s)</div>
<svg style="position:absolute;left:1747.6px;top:939.5px" width="14" height="14" viewBox="0 0 14 14">
<circle cx="5.8" cy="5.8" r="4.6" fill="none" stroke="#337ab7" stroke-width="2"/>
<path d="M9,9 L12.6,12.6" stroke="#337ab7" stroke-width="2.6" stroke-linecap="round"/>
<path d="M3.4,5.8 H8.2 M5.8,3.4 V8.2" stroke="#337ab7" stroke-width="1.5"/>
</svg>
<div class="abs" style="left:296.0px;top:628px;width:1px;height:318px;background:#ddd"></div>
<div class="abs" style="left:421.7px;top:628px;width:1px;height:318px;background:#ddd"></div>
<div class="abs" style="left:548.9px;top:628px;width:1px;height:318px;background:#ddd"></div>
<div class="abs" style="left:691.7px;top:628px;width:1px;height:318px;background:#ddd"></div>
<div class="abs" style="left:862.7px;top:628px;width:1px;height:318px;background:#ddd"></div>
<div class="abs" style="left:1088.0px;top:628px;width:1px;height:318px;background:#ddd"></div>
<div class="abs" style="left:1227.9px;top:628px;width:1px;height:318px;background:#ddd"></div>
<div class="abs" style="left:1418.9px;top:628px;width:1px;height:318px;background:#ddd"></div>
<div class="abs" style="left:1738.8px;top:628px;width:1px;height:318px;background:#ddd"></div>
<div class="abs" style="left:1860.0px;top:628px;width:1px;height:318px;background:#ddd"></div>
</body></html>
